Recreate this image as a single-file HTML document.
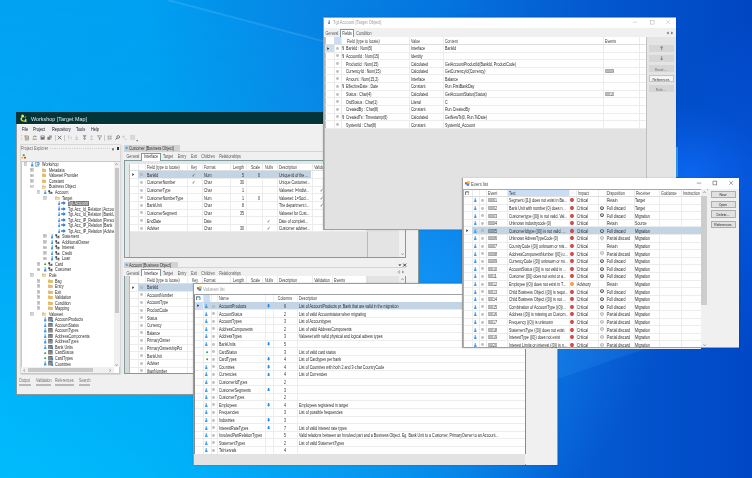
<!DOCTYPE html>
<html><head><meta charset="utf-8">
<style>
*{box-sizing:border-box;margin:0;padding:0}
html,body{width:752px;height:478px;overflow:hidden;background:#0a8aef}
body{position:relative;font-family:"Liberation Sans",sans-serif;font-size:4px;color:#222}
.a{position:absolute}
.t{white-space:nowrap}
</style></head><body>
<svg class="a" style="left:0;top:0" width="752" height="478" viewBox="0 0 752 478">
<defs>
<linearGradient id="bg" x1="0" y1="0" x2="1" y2="0">
<stop offset="0" stop-color="#00a3f3"/>
<stop offset="0.2" stop-color="#00a0f2"/>
<stop offset="0.4" stop-color="#0889e8"/>
<stop offset="0.6" stop-color="#0575e0"/>
<stop offset="0.8" stop-color="#0558d0"/>
<stop offset="1" stop-color="#0047c6"/>
</linearGradient>
<linearGradient id="bl" x1="0" y1="0" x2="0" y2="1">
<stop offset="0" stop-color="#00c4ff" stop-opacity="0"/>
<stop offset="0.45" stop-color="#00c4ff" stop-opacity="0.15"/>
<stop offset="1" stop-color="#00c4ff" stop-opacity="0.75"/>
</linearGradient>
<linearGradient id="blm" x1="0" y1="0" x2="1" y2="0">
<stop offset="0" stop-color="#fff" stop-opacity="1"/>
<stop offset="0.45" stop-color="#fff" stop-opacity="0.5"/>
<stop offset="0.75" stop-color="#fff" stop-opacity="0"/>
</linearGradient>
<mask id="m1"><rect width="752" height="478" fill="url(#blm)"/></mask>
<radialGradient id="mid" cx="430" cy="300" r="230" gradientUnits="userSpaceOnUse">
<stop offset="0" stop-color="#1aa0ff" stop-opacity="0.6"/>
<stop offset="1" stop-color="#1aa0ff" stop-opacity="0"/>
</radialGradient>
<radialGradient id="rg2" cx="690" cy="180" r="75" gradientUnits="userSpaceOnUse">
<stop offset="0" stop-color="#0c6cf6" stop-opacity="0.9"/>
<stop offset="0.5" stop-color="#0c66f0" stop-opacity="0.45"/>
<stop offset="1" stop-color="#0c60e8" stop-opacity="0"/>
</radialGradient>
<radialGradient id="rg3" cx="760" cy="190" r="170" gradientUnits="userSpaceOnUse" gradientTransform="translate(760 190) scale(0.6 1) translate(-760 -190)">
<stop offset="0" stop-color="#0a62ec" stop-opacity="0.55"/>
<stop offset="1" stop-color="#0a62ec" stop-opacity="0"/>
</radialGradient>
</defs>
<rect width="752" height="478" fill="url(#bg)"/>
<rect width="752" height="478" fill="url(#bl)" mask="url(#m1)"/>
<rect width="752" height="478" fill="url(#mid)"/>
<polygon points="168,0 752,0 752,160 323,43" fill="#003a90" fill-opacity="0.03"/>
<line x1="168" y1="0" x2="330" y2="43" stroke="#9fe0ff" stroke-opacity="0.16" stroke-width="2.2"/>
<polygon points="530,392 559,378.4 652,346.4 700,330 700,200 530,200" fill="#40b0ff" fill-opacity="0.15"/>
<rect width="752" height="478" fill="url(#rg3)"/>
<rect width="752" height="478" fill="url(#rg2)"/>
<line x1="677" y1="147" x2="677" y2="177" stroke="#60e8ff" stroke-opacity="0.8" stroke-width="1"/>
</svg>
<div class="a" style="left:16.00px;top:112.00px;width:403.00px;height:283.00px;background:#f0f0f0;border:0.7px solid #8a9898;"></div>
<div class="a" style="left:16.00px;top:112.00px;width:403.00px;height:11.80px;background:#033438;"></div>
<svg class="a" style="left:18.8px;top:113.6px" width="9" height="9" viewBox="0 0 9 9">
<circle cx="3.6" cy="1.9" r="1.5" fill="#e6e24a"/>
<path d="M2.4 3.2Q0.6 4.4 1.8 6.2Q3 7.6 5 7.4L7.6 8.2L7.2 7.2Q8.2 5.8 6.8 4.4L5.8 5.4Q6.6 6.4 5.4 6.6Q3.6 6.8 3 5.6Q2.6 4.6 3.8 3.6z" fill="#e6e24a"/>
<path d="M5 3.2L7.4 2.2L7 3.6z" fill="#e6e24a"/>
</svg>
<div class="a t" style="left:30.70px;top:115.68px;font-size:6.046511627906977px;line-height:7.26px;color:#e4e8e8;transform:scaleX(0.9);transform-origin:0 50%;">Workshop [Target Map]</div>
<div class="a" style="left:16.70px;top:123.80px;width:401.60px;height:1.00px;background:#fbfbfb;"></div>
<div class="a t" style="left:21.60px;top:127.30px;font-size:4.883720930232559px;line-height:5.86px;color:#141428;transform:scaleX(0.8);transform-origin:0 50%;">File</div>
<div class="a t" style="left:33.00px;top:127.30px;font-size:4.883720930232559px;line-height:5.86px;color:#141428;transform:scaleX(0.8);transform-origin:0 50%;">Project</div>
<div class="a t" style="left:52.00px;top:127.30px;font-size:4.883720930232559px;line-height:5.86px;color:#141428;transform:scaleX(0.8);transform-origin:0 50%;">Repository</div>
<div class="a t" style="left:76.00px;top:127.30px;font-size:4.883720930232559px;line-height:5.86px;color:#141428;transform:scaleX(0.8);transform-origin:0 50%;">Tools</div>
<div class="a t" style="left:91.40px;top:127.30px;font-size:4.883720930232559px;line-height:5.86px;color:#141428;transform:scaleX(0.8);transform-origin:0 50%;">Help</div>
<div class="a" style="left:20.60px;top:135.20px;width:0.70px;height:0.70px;background:#c8c8c8;"></div>
<div class="a" style="left:20.60px;top:137.20px;width:0.70px;height:0.70px;background:#c8c8c8;"></div>
<div class="a" style="left:20.60px;top:139.20px;width:0.70px;height:0.70px;background:#c8c8c8;"></div>
<svg class="a" style="left:24.30px;top:135.4px" width="5.2" height="5.2" viewBox="0 0 5.2 5.2"><rect x="1.2" y="1" width="3.2" height="4" fill="#e8e8e8" stroke="#606060" stroke-width="0.5"/><rect x="0.4" y="0.4" width="1.8" height="1.8" fill="#e89a30"/><path d="M2.4 2.6h1.4M2.4 3.6h1.4" stroke="#404040" stroke-width="0.5"/></svg>
<svg class="a" style="left:31.80px;top:135.4px" width="5.2" height="5.2" viewBox="0 0 5.2 5.2"><path d="M1 2.2Q2.6 0.2 4.4 1.6" stroke="#2a7ad0" stroke-width="0.9" fill="none"/><rect x="0.6" y="3" width="4" height="1.8" fill="#f0c890"/><rect x="0.6" y="4.2" width="4" height="0.7" fill="#e09030"/></svg>
<svg class="a" style="left:39.70px;top:135.4px" width="5.2" height="5.2" viewBox="0 0 5.2 5.2"><rect x="0.6" y="0.6" width="4" height="4" fill="#6a6a6a"/><rect x="1.4" y="0.9" width="2.4" height="1.4" fill="#d8d8d8"/></svg>
<svg class="a" style="left:47.30px;top:135.4px" width="5.2" height="5.2" viewBox="0 0 5.2 5.2"><rect x="0.4" y="1.8" width="3" height="3" fill="#7a7a7a"/><rect x="2" y="0.4" width="2.8" height="2.8" fill="#9a9a9a"/></svg>
<svg class="a" style="left:56.70px;top:135.4px" width="5.2" height="5.2" viewBox="0 0 5.2 5.2"><path d="M0.8 0.8L4.4 4.4M4.4 0.8L0.8 4.4" stroke="#555" stroke-width="0.8"/></svg>
<svg class="a" style="left:66.50px;top:135.4px" width="5.2" height="5.2" viewBox="0 0 5.2 5.2"><path d="M0.6 1h2.2M1.7 1v3.4M3 2.4h1.6v2" stroke="#c0c0c0" stroke-width="0.6" fill="none"/></svg>
<svg class="a" style="left:74.40px;top:135.4px" width="5.2" height="5.2" viewBox="0 0 5.2 5.2"><path d="M2.6 0.4v3M1.2 2.2l1.4 1.6 1.4-1.6M0.8 4.6h3.6" stroke="#b8b8b8" stroke-width="0.6" fill="none"/></svg>
<svg class="a" style="left:81.80px;top:135.4px" width="5.2" height="5.2" viewBox="0 0 5.2 5.2"><path d="M0.8 0.6h3.6M2.6 0.6v4M1.2 3l1.4 1.6 1.4-1.6M1.4 1.6h2.4" stroke="#707070" stroke-width="0.6" fill="none"/></svg>
<svg class="a" style="left:89.40px;top:135.4px" width="5.2" height="5.2" viewBox="0 0 5.2 5.2"><path d="M0.8 4.6h3.6M2.6 4.6v-4M1.2 2.2l1.4-1.6 1.4 1.6" stroke="#b8b8b8" stroke-width="0.6" fill="none"/></svg>
<svg class="a" style="left:96.90px;top:135.4px" width="5.2" height="5.2" viewBox="0 0 5.2 5.2"><path d="M0.4 0.8h4.4L2.6 3z M2.6 2.6v2M1.6 3.6l1 1 1-1" stroke="#707070" stroke-width="0.55" fill="none"/></svg>
<svg class="a" style="left:106.90px;top:135.4px" width="5.2" height="5.2" viewBox="0 0 5.2 5.2"><rect x="0.6" y="0.6" width="4" height="4" fill="#b0b0b0"/><path d="M0.6 2.6h4M2.6 0.6v4" stroke="#e8e8e8" stroke-width="0.5"/></svg>
<svg class="a" style="left:114.50px;top:135.4px" width="5.2" height="5.2" viewBox="0 0 5.2 5.2"><circle cx="3.2" cy="2" r="1.4" fill="none" stroke="#404040" stroke-width="0.6"/><path d="M2.2 3L0.6 4.6" stroke="#303030" stroke-width="0.8"/></svg>
<svg class="a" style="left:121.70px;top:135.4px" width="5.2" height="5.2" viewBox="0 0 5.2 5.2"><path d="M1 1.2l1.2 1.4M1 1.2v1.6M1 1.2h1.6M2.6 4.4h2" stroke="#b0b0b0" stroke-width="0.6" fill="none"/></svg>
<svg class="a" style="left:130.10px;top:135.4px" width="5.2" height="5.2" viewBox="0 0 5.2 5.2"><rect x="0.8" y="0.6" width="3.6" height="4" fill="#e0e0e0" stroke="#c0c0c0" stroke-width="0.5"/><path d="M1.4 2h2.4M1.4 3h2.4" stroke="#c8c8c8" stroke-width="0.4"/></svg>
<svg class="a" style="left:136.3px;top:140px" width="2.4" height="2" viewBox="0 0 2.4 2"><path d="M0.2 0.3h2L1.2 1.6z" fill="#333"/></svg>
<div class="a" style="left:54.60px;top:135.20px;width:0.60px;height:5.80px;background:#c8c8c8;"></div>
<div class="a" style="left:64.00px;top:135.20px;width:0.60px;height:5.80px;background:#c8c8c8;"></div>
<div class="a" style="left:104.40px;top:135.20px;width:0.60px;height:5.80px;background:#c8c8c8;"></div>
<div class="a" style="left:19.60px;top:144.40px;width:101.80px;height:231.00px;border:0.6px solid #d8d8d8;border-radius:1px"></div>
<div class="a t" style="left:21.20px;top:146.45px;font-size:4.767441860465116px;line-height:5.72px;color:#6a6a6a;transform:scaleX(0.8);transform-origin:0 50%;">Project Explorer</div>
<div class="a" style="left:50.00px;top:147.90px;width:60.00px;height:1.40px;background:repeating-linear-gradient(90deg,#d0d0d0 0 1.2px,transparent 1.2px 2.2px)"></div>
<div class="a t" style="left:112.20px;top:146.61px;font-size:4.651162790697675px;line-height:5.58px;color:#333;transform:scaleX(0.8);transform-origin:0 50%;">▾</div>
<div class="a" style="left:117.00px;top:146.60px;width:1.60px;height:3.20px;background:#333;"></div>
<svg class="a" style="left:21.4px;top:153.6px" width="5.4" height="5.4" viewBox="0 0 5.4 5.4"><rect x="1.8" y="0.3" width="1.8" height="1.8" fill="#2ea836"/><path d="M1.3 2.6L2.5 3.8 1.3 5 0.1 3.8z" fill="#e2c020"/><path d="M4 2.6L5.2 3.8 4 5 2.8 3.8z" fill="#d02828"/></svg>
<div class="a" style="left:20.70px;top:161.30px;width:99.50px;height:212.60px;background:#ffffff;border:0.6px solid #c8c8c8;"></div>
<div class="a" style="left:113.80px;top:161.80px;width:6.00px;height:205.50px;background:#f0f0f0;"></div>
<div class="a" style="left:114.60px;top:167.80px;width:4.40px;height:145.00px;background:#c8c8c8;"></div>
<svg class="a" style="left:115.3px;top:163.4px" width="3" height="2.4" viewBox="0 0 3 2.4"><path d="M0.3 2L1.5 0.6 2.7 2" fill="none" stroke="#555" stroke-width="0.5"/></svg>
<svg class="a" style="left:115.3px;top:364.0px" width="3" height="2.4" viewBox="0 0 3 2.4"><path d="M0.3 0.4L1.5 1.8 2.7 0.4" fill="none" stroke="#555" stroke-width="0.5"/></svg>
<div class="a" style="left:21.20px;top:367.30px;width:92.60px;height:5.40px;background:#f0f0f0;"></div>
<div class="a" style="left:27.70px;top:368.00px;width:65.80px;height:4.00px;background:#c8c8c8;"></div>
<svg class="a" style="left:23px;top:368.5px" width="2.4" height="3" viewBox="0 0 2.4 3"><path d="M2 0.3L0.6 1.5 2 2.7" fill="none" stroke="#555" stroke-width="0.5"/></svg>
<svg class="a" style="left:109.4px;top:368.5px" width="2.4" height="3" viewBox="0 0 2.4 3"><path d="M0.4 0.3L1.8 1.5 0.4 2.7" fill="none" stroke="#555" stroke-width="0.5"/></svg>
<div class="a" style="left:21px;top:161.8px;width:92.6px;height:205.5px;overflow:hidden">
<svg class="a" style="left:2.50px;top:0.70px" width="3.8" height="3.8" viewBox="0 0 3.8 3.8"><rect x="0.3" y="0.3" width="3.2" height="3.2" fill="#f4f4f4" stroke="#a8a8a8" stroke-width="0.5"/><path d="M1 1.9H2.8" stroke="#6a6a6a" stroke-width="0.5"/></svg>
<svg class="a" style="left:10.20px;top:0.40px" width="2.4" height="4.4" viewBox="0 0 2.4 4.4"><circle cx="1.2" cy="1" r="0.8" fill="#4a98e0"/><path d="M0 4.4V2.8Q0 1.9 1.2 1.9Q2.4 1.9 2.4 2.8V4.4z" fill="#4a98e0"/></svg>
<svg class="a" style="left:14.00px;top:0.20px" width="4.8" height="4.8" viewBox="0 0 4.8 4.8"><rect x="0.3" y="0.3" width="3.2" height="4" fill="#fff" stroke="#5a88c0" stroke-width="0.5"/><circle cx="3.4" cy="1.6" r="1.2" fill="none" stroke="#3a78c8" stroke-width="0.6"/><path d="M1 3.2h2.6" stroke="#3a78c8" stroke-width="0.5"/></svg>
<div class="a t" style="left:20.90px;top:0.51px;font-size:4.651162790697675px;line-height:5.58px;color:#2a2a2a;transform:scaleX(0.8);transform-origin:0 50%;">Workshop</div>
<svg class="a" style="left:9.10px;top:6.23px" width="3.8" height="3.8" viewBox="0 0 3.8 3.8"><rect x="0.3" y="0.3" width="3.2" height="3.2" fill="#f4f4f4" stroke="#a8a8a8" stroke-width="0.5"/><path d="M1 1.9H2.8" stroke="#6a6a6a" stroke-width="0.5"/><path d="M1.9 1V2.8" stroke="#6a6a6a" stroke-width="0.5"/></svg>
<svg class="a" style="left:20.60px;top:6.13px" width="4.8" height="4" viewBox="0 0 4.8 4"><path d="M0.2 0.5h1.6l0.5 0.5h2.3v2.8H0.2z" fill="#dcae5c"/><rect x="0.2" y="1.3" width="4.4" height="2.5" fill="#e6bc6c"/></svg>
<div class="a t" style="left:27.50px;top:6.04px;font-size:4.651162790697675px;line-height:5.58px;color:#2a2a2a;transform:scaleX(0.8);transform-origin:0 50%;">Metadata</div>
<svg class="a" style="left:9.10px;top:11.77px" width="3.8" height="3.8" viewBox="0 0 3.8 3.8"><rect x="0.3" y="0.3" width="3.2" height="3.2" fill="#f4f4f4" stroke="#a8a8a8" stroke-width="0.5"/><path d="M1 1.9H2.8" stroke="#6a6a6a" stroke-width="0.5"/><path d="M1.9 1V2.8" stroke="#6a6a6a" stroke-width="0.5"/></svg>
<svg class="a" style="left:20.60px;top:11.67px" width="4.8" height="4" viewBox="0 0 4.8 4"><path d="M0.2 0.5h1.6l0.5 0.5h2.3v2.8H0.2z" fill="#dcae5c"/><rect x="0.2" y="1.3" width="4.4" height="2.5" fill="#e6bc6c"/></svg>
<div class="a t" style="left:27.50px;top:11.58px;font-size:4.651162790697675px;line-height:5.58px;color:#2a2a2a;transform:scaleX(0.8);transform-origin:0 50%;">Valueset Provider</div>
<svg class="a" style="left:9.10px;top:17.30px" width="3.8" height="3.8" viewBox="0 0 3.8 3.8"><rect x="0.3" y="0.3" width="3.2" height="3.2" fill="#f4f4f4" stroke="#a8a8a8" stroke-width="0.5"/><path d="M1 1.9H2.8" stroke="#6a6a6a" stroke-width="0.5"/><path d="M1.9 1V2.8" stroke="#6a6a6a" stroke-width="0.5"/></svg>
<svg class="a" style="left:20.60px;top:17.20px" width="4.8" height="4" viewBox="0 0 4.8 4"><path d="M0.2 0.5h1.6l0.5 0.5h2.3v2.8H0.2z" fill="#dcae5c"/><rect x="0.2" y="1.3" width="4.4" height="2.5" fill="#e6bc6c"/></svg>
<div class="a t" style="left:27.50px;top:17.11px;font-size:4.651162790697675px;line-height:5.58px;color:#2a2a2a;transform:scaleX(0.8);transform-origin:0 50%;">Constant</div>
<svg class="a" style="left:9.10px;top:22.84px" width="3.8" height="3.8" viewBox="0 0 3.8 3.8"><rect x="0.3" y="0.3" width="3.2" height="3.2" fill="#f4f4f4" stroke="#a8a8a8" stroke-width="0.5"/><path d="M1 1.9H2.8" stroke="#6a6a6a" stroke-width="0.5"/></svg>
<svg class="a" style="left:20.60px;top:22.74px" width="4.8" height="4" viewBox="0 0 4.8 4"><path d="M0.2 0.5h1.6l0.5 0.5h2.3v2.8H0.2z" fill="#d8aa60"/><path d="M0.2 3.8l0.8-2.2h3.8l-0.8 2.2z" fill="#f4dca8"/></svg>
<div class="a t" style="left:27.50px;top:22.65px;font-size:4.651162790697675px;line-height:5.58px;color:#2a2a2a;transform:scaleX(0.8);transform-origin:0 50%;">Business Object</div>
<svg class="a" style="left:15.70px;top:28.38px" width="3.8" height="3.8" viewBox="0 0 3.8 3.8"><rect x="0.3" y="0.3" width="3.2" height="3.2" fill="#f4f4f4" stroke="#a8a8a8" stroke-width="0.5"/><path d="M1 1.9H2.8" stroke="#6a6a6a" stroke-width="0.5"/></svg>
<svg class="a" style="left:23.40px;top:28.08px" width="2.4" height="4.4" viewBox="0 0 2.4 4.4"><circle cx="1.2" cy="1" r="0.8" fill="#4a98e0"/><path d="M0 4.4V2.8Q0 1.9 1.2 1.9Q2.4 1.9 2.4 2.8V4.4z" fill="#4a98e0"/></svg>
<svg class="a" style="left:27.20px;top:28.08px" width="4.8" height="4.4" viewBox="0 0 4.8 4.4"><rect x="0.3" y="0.3" width="1.8" height="1.6" fill="#333"/><path d="M1.2 1.9V3.6H2.6M1.2 2.6H2.6" stroke="#333" stroke-width="0.5" fill="none"/><rect x="2.6" y="1.8" width="1.8" height="1.2" fill="#555"/><rect x="2.6" y="3.2" width="1.8" height="1.1" fill="#555"/></svg>
<div class="a t" style="left:34.10px;top:28.18px;font-size:4.651162790697675px;line-height:5.58px;color:#2a2a2a;transform:scaleX(0.8);transform-origin:0 50%;">Account</div>
<svg class="a" style="left:22.30px;top:33.91px" width="3.8" height="3.8" viewBox="0 0 3.8 3.8"><rect x="0.3" y="0.3" width="3.2" height="3.2" fill="#f4f4f4" stroke="#a8a8a8" stroke-width="0.5"/><path d="M1 1.9H2.8" stroke="#6a6a6a" stroke-width="0.5"/></svg>
<svg class="a" style="left:33.80px;top:33.81px" width="4.8" height="4" viewBox="0 0 4.8 4"><path d="M0.2 0.5h1.6l0.5 0.5h2.3v2.8H0.2z" fill="#d8aa60"/><path d="M0.2 3.8l0.8-2.2h3.8l-0.8 2.2z" fill="#f4dca8"/></svg>
<div class="a t" style="left:40.70px;top:33.72px;font-size:4.651162790697675px;line-height:5.58px;color:#2a2a2a;transform:scaleX(0.8);transform-origin:0 50%;">Target</div>
<svg class="a" style="left:36.60px;top:39.15px" width="2.4" height="4.4" viewBox="0 0 2.4 4.4"><circle cx="1.2" cy="1" r="0.8" fill="#4a98e0"/><path d="M0 4.4V2.8Q0 1.9 1.2 1.9Q2.4 1.9 2.4 2.8V4.4z" fill="#4a98e0"/></svg>
<svg class="a" style="left:40.40px;top:39.34px" width="5" height="4" viewBox="0 0 5 4"><path d="M0.2 1.3h2.2V0.1L4.8 2 2.4 3.9V2.7H0.2z" fill="#2a78d8"/></svg>
<div class="a" style="left:46.70px;top:38.94px;width:21.20px;height:4.90px;background:#777777;"></div>
<div class="a t" style="left:47.30px;top:39.25px;font-size:4.651162790697675px;line-height:5.58px;color:#f0f0f0;transform:scaleX(0.8);transform-origin:0 50%;">Tgt.Account</div>
<svg class="a" style="left:36.60px;top:44.68px" width="2.4" height="4.4" viewBox="0 0 2.4 4.4"><circle cx="1.2" cy="1" r="0.8" fill="#4a98e0"/><path d="M0 4.4V2.8Q0 1.9 1.2 1.9Q2.4 1.9 2.4 2.8V4.4z" fill="#4a98e0"/></svg>
<svg class="a" style="left:40.40px;top:44.88px" width="5" height="4" viewBox="0 0 5 4"><path d="M0.2 1.3h2.2V0.1L4.8 2 2.4 3.9V2.7H0.2z" fill="#2a78d8"/></svg>
<div class="a t" style="left:47.30px;top:44.79px;font-size:4.651162790697675px;line-height:5.58px;color:#2a2a2a;transform:scaleX(0.8);transform-origin:0 50%;">Tgt.Acc_Id_Relation [Account</div>
<svg class="a" style="left:36.60px;top:50.22px" width="2.4" height="4.4" viewBox="0 0 2.4 4.4"><circle cx="1.2" cy="1" r="0.8" fill="#4a98e0"/><path d="M0 4.4V2.8Q0 1.9 1.2 1.9Q2.4 1.9 2.4 2.8V4.4z" fill="#4a98e0"/></svg>
<svg class="a" style="left:40.40px;top:50.41px" width="5" height="4" viewBox="0 0 5 4"><path d="M0.2 1.3h2.2V0.1L4.8 2 2.4 3.9V2.7H0.2z" fill="#2a78d8"/></svg>
<div class="a t" style="left:47.30px;top:50.32px;font-size:4.651162790697675px;line-height:5.58px;color:#2a2a2a;transform:scaleX(0.8);transform-origin:0 50%;">Tgt.Acc_Id_Relation [BankUnit</div>
<svg class="a" style="left:36.60px;top:55.75px" width="2.4" height="4.4" viewBox="0 0 2.4 4.4"><circle cx="1.2" cy="1" r="0.8" fill="#4a98e0"/><path d="M0 4.4V2.8Q0 1.9 1.2 1.9Q2.4 1.9 2.4 2.8V4.4z" fill="#4a98e0"/></svg>
<svg class="a" style="left:40.40px;top:55.95px" width="5" height="4" viewBox="0 0 5 4"><path d="M0.2 1.3h2.2V0.1L4.8 2 2.4 3.9V2.7H0.2z" fill="#2a78d8"/></svg>
<div class="a t" style="left:47.30px;top:55.86px;font-size:4.651162790697675px;line-height:5.58px;color:#2a2a2a;transform:scaleX(0.8);transform-origin:0 50%;">Tgt.Acc_IP_Relation [Person</div>
<svg class="a" style="left:36.60px;top:61.29px" width="2.4" height="4.4" viewBox="0 0 2.4 4.4"><circle cx="1.2" cy="1" r="0.8" fill="#4a98e0"/><path d="M0 4.4V2.8Q0 1.9 1.2 1.9Q2.4 1.9 2.4 2.8V4.4z" fill="#4a98e0"/></svg>
<svg class="a" style="left:40.40px;top:61.49px" width="5" height="4" viewBox="0 0 5 4"><path d="M0.2 1.3h2.2V0.1L4.8 2 2.4 3.9V2.7H0.2z" fill="#2a78d8"/></svg>
<div class="a t" style="left:47.30px;top:61.39px;font-size:4.651162790697675px;line-height:5.58px;color:#2a2a2a;transform:scaleX(0.8);transform-origin:0 50%;">Tgt.Acc_IP_Relation [Bank</div>
<svg class="a" style="left:36.60px;top:66.82px" width="2.4" height="4.4" viewBox="0 0 2.4 4.4"><circle cx="1.2" cy="1" r="0.8" fill="#4a98e0"/><path d="M0 4.4V2.8Q0 1.9 1.2 1.9Q2.4 1.9 2.4 2.8V4.4z" fill="#4a98e0"/></svg>
<svg class="a" style="left:40.40px;top:67.02px" width="5" height="4" viewBox="0 0 5 4"><path d="M0.2 1.3h2.2V0.1L4.8 2 2.4 3.9V2.7H0.2z" fill="#2a78d8"/></svg>
<div class="a t" style="left:47.30px;top:66.93px;font-size:4.651162790697675px;line-height:5.58px;color:#2a2a2a;transform:scaleX(0.8);transform-origin:0 50%;">Tgt.Acc_IP_Relation [Adviser</div>
<svg class="a" style="left:22.30px;top:72.66px" width="3.8" height="3.8" viewBox="0 0 3.8 3.8"><rect x="0.3" y="0.3" width="3.2" height="3.2" fill="#f4f4f4" stroke="#a8a8a8" stroke-width="0.5"/><path d="M1 1.9H2.8" stroke="#6a6a6a" stroke-width="0.5"/><path d="M1.9 1V2.8" stroke="#6a6a6a" stroke-width="0.5"/></svg>
<svg class="a" style="left:30.00px;top:72.36px" width="2.4" height="4.4" viewBox="0 0 2.4 4.4"><circle cx="1.2" cy="1" r="0.8" fill="#4a98e0"/><path d="M0 4.4V2.8Q0 1.9 1.2 1.9Q2.4 1.9 2.4 2.8V4.4z" fill="#4a98e0"/></svg>
<svg class="a" style="left:33.80px;top:72.36px" width="4.8" height="4.4" viewBox="0 0 4.8 4.4"><rect x="0.3" y="0.3" width="1.8" height="1.6" fill="#333"/><path d="M1.2 1.9V3.6H2.6M1.2 2.6H2.6" stroke="#333" stroke-width="0.5" fill="none"/><rect x="2.6" y="1.8" width="1.8" height="1.2" fill="#555"/><rect x="2.6" y="3.2" width="1.8" height="1.1" fill="#555"/></svg>
<div class="a t" style="left:40.70px;top:72.46px;font-size:4.651162790697675px;line-height:5.58px;color:#2a2a2a;transform:scaleX(0.8);transform-origin:0 50%;">Statement</div>
<svg class="a" style="left:22.30px;top:78.19px" width="3.8" height="3.8" viewBox="0 0 3.8 3.8"><rect x="0.3" y="0.3" width="3.2" height="3.2" fill="#f4f4f4" stroke="#a8a8a8" stroke-width="0.5"/><path d="M1 1.9H2.8" stroke="#6a6a6a" stroke-width="0.5"/><path d="M1.9 1V2.8" stroke="#6a6a6a" stroke-width="0.5"/></svg>
<svg class="a" style="left:30.00px;top:77.89px" width="2.4" height="4.4" viewBox="0 0 2.4 4.4"><circle cx="1.2" cy="1" r="0.8" fill="#4a98e0"/><path d="M0 4.4V2.8Q0 1.9 1.2 1.9Q2.4 1.9 2.4 2.8V4.4z" fill="#4a98e0"/></svg>
<svg class="a" style="left:33.80px;top:77.89px" width="4.8" height="4.4" viewBox="0 0 4.8 4.4"><rect x="0.3" y="0.3" width="1.8" height="1.6" fill="#333"/><path d="M1.2 1.9V3.6H2.6M1.2 2.6H2.6" stroke="#333" stroke-width="0.5" fill="none"/><rect x="2.6" y="1.8" width="1.8" height="1.2" fill="#555"/><rect x="2.6" y="3.2" width="1.8" height="1.1" fill="#555"/></svg>
<div class="a t" style="left:40.70px;top:78.00px;font-size:4.651162790697675px;line-height:5.58px;color:#2a2a2a;transform:scaleX(0.8);transform-origin:0 50%;">AdditionalOwner</div>
<svg class="a" style="left:22.30px;top:83.72px" width="3.8" height="3.8" viewBox="0 0 3.8 3.8"><rect x="0.3" y="0.3" width="3.2" height="3.2" fill="#f4f4f4" stroke="#a8a8a8" stroke-width="0.5"/><path d="M1 1.9H2.8" stroke="#6a6a6a" stroke-width="0.5"/><path d="M1.9 1V2.8" stroke="#6a6a6a" stroke-width="0.5"/></svg>
<svg class="a" style="left:30.00px;top:83.43px" width="2.4" height="4.4" viewBox="0 0 2.4 4.4"><circle cx="1.2" cy="1" r="0.8" fill="#4a98e0"/><path d="M0 4.4V2.8Q0 1.9 1.2 1.9Q2.4 1.9 2.4 2.8V4.4z" fill="#4a98e0"/></svg>
<svg class="a" style="left:33.80px;top:83.43px" width="4.8" height="4.4" viewBox="0 0 4.8 4.4"><rect x="0.3" y="0.3" width="1.8" height="1.6" fill="#333"/><path d="M1.2 1.9V3.6H2.6M1.2 2.6H2.6" stroke="#333" stroke-width="0.5" fill="none"/><rect x="2.6" y="1.8" width="1.8" height="1.2" fill="#555"/><rect x="2.6" y="3.2" width="1.8" height="1.1" fill="#555"/></svg>
<div class="a t" style="left:40.70px;top:83.53px;font-size:4.651162790697675px;line-height:5.58px;color:#2a2a2a;transform:scaleX(0.8);transform-origin:0 50%;">Interest</div>
<svg class="a" style="left:22.30px;top:89.26px" width="3.8" height="3.8" viewBox="0 0 3.8 3.8"><rect x="0.3" y="0.3" width="3.2" height="3.2" fill="#f4f4f4" stroke="#a8a8a8" stroke-width="0.5"/><path d="M1 1.9H2.8" stroke="#6a6a6a" stroke-width="0.5"/><path d="M1.9 1V2.8" stroke="#6a6a6a" stroke-width="0.5"/></svg>
<svg class="a" style="left:30.00px;top:88.96px" width="2.4" height="4.4" viewBox="0 0 2.4 4.4"><circle cx="1.2" cy="1" r="0.8" fill="#4a98e0"/><path d="M0 4.4V2.8Q0 1.9 1.2 1.9Q2.4 1.9 2.4 2.8V4.4z" fill="#4a98e0"/></svg>
<svg class="a" style="left:33.80px;top:88.96px" width="4.8" height="4.4" viewBox="0 0 4.8 4.4"><rect x="0.3" y="0.3" width="1.8" height="1.6" fill="#333"/><path d="M1.2 1.9V3.6H2.6M1.2 2.6H2.6" stroke="#333" stroke-width="0.5" fill="none"/><rect x="2.6" y="1.8" width="1.8" height="1.2" fill="#555"/><rect x="2.6" y="3.2" width="1.8" height="1.1" fill="#555"/></svg>
<div class="a t" style="left:40.70px;top:89.07px;font-size:4.651162790697675px;line-height:5.58px;color:#2a2a2a;transform:scaleX(0.8);transform-origin:0 50%;">Credit</div>
<svg class="a" style="left:22.30px;top:94.80px" width="3.8" height="3.8" viewBox="0 0 3.8 3.8"><rect x="0.3" y="0.3" width="3.2" height="3.2" fill="#f4f4f4" stroke="#a8a8a8" stroke-width="0.5"/><path d="M1 1.9H2.8" stroke="#6a6a6a" stroke-width="0.5"/><path d="M1.9 1V2.8" stroke="#6a6a6a" stroke-width="0.5"/></svg>
<svg class="a" style="left:30.00px;top:94.50px" width="2.4" height="4.4" viewBox="0 0 2.4 4.4"><circle cx="1.2" cy="1" r="0.8" fill="#4a98e0"/><path d="M0 4.4V2.8Q0 1.9 1.2 1.9Q2.4 1.9 2.4 2.8V4.4z" fill="#4a98e0"/></svg>
<svg class="a" style="left:33.80px;top:94.50px" width="4.8" height="4.4" viewBox="0 0 4.8 4.4"><rect x="0.3" y="0.3" width="1.8" height="1.6" fill="#333"/><path d="M1.2 1.9V3.6H2.6M1.2 2.6H2.6" stroke="#333" stroke-width="0.5" fill="none"/><rect x="2.6" y="1.8" width="1.8" height="1.2" fill="#555"/><rect x="2.6" y="3.2" width="1.8" height="1.1" fill="#555"/></svg>
<div class="a t" style="left:40.70px;top:94.60px;font-size:4.651162790697675px;line-height:5.58px;color:#2a2a2a;transform:scaleX(0.8);transform-origin:0 50%;">Loan</div>
<svg class="a" style="left:15.70px;top:100.33px" width="3.8" height="3.8" viewBox="0 0 3.8 3.8"><rect x="0.3" y="0.3" width="3.2" height="3.2" fill="#f4f4f4" stroke="#a8a8a8" stroke-width="0.5"/><path d="M1 1.9H2.8" stroke="#6a6a6a" stroke-width="0.5"/><path d="M1.9 1V2.8" stroke="#6a6a6a" stroke-width="0.5"/></svg>
<svg class="a" style="left:23.40px;top:101.23px" width="2.4" height="2.4" viewBox="0 0 2.4 2.4"><circle cx="1.2" cy="1.2" r="1.05" fill="#2fa443"/></svg>
<svg class="a" style="left:27.20px;top:100.03px" width="4.8" height="4.4" viewBox="0 0 4.8 4.4"><rect x="0.3" y="0.3" width="1.8" height="1.6" fill="#333"/><path d="M1.2 1.9V3.6H2.6M1.2 2.6H2.6" stroke="#333" stroke-width="0.5" fill="none"/><rect x="2.6" y="1.8" width="1.8" height="1.2" fill="#555"/><rect x="2.6" y="3.2" width="1.8" height="1.1" fill="#555"/></svg>
<div class="a t" style="left:34.10px;top:100.14px;font-size:4.651162790697675px;line-height:5.58px;color:#2a2a2a;transform:scaleX(0.8);transform-origin:0 50%;">Card</div>
<svg class="a" style="left:15.70px;top:105.87px" width="3.8" height="3.8" viewBox="0 0 3.8 3.8"><rect x="0.3" y="0.3" width="3.2" height="3.2" fill="#f4f4f4" stroke="#a8a8a8" stroke-width="0.5"/><path d="M1 1.9H2.8" stroke="#6a6a6a" stroke-width="0.5"/><path d="M1.9 1V2.8" stroke="#6a6a6a" stroke-width="0.5"/></svg>
<svg class="a" style="left:23.40px;top:105.56px" width="2.4" height="4.4" viewBox="0 0 2.4 4.4"><circle cx="1.2" cy="1" r="0.8" fill="#4a98e0"/><path d="M0 4.4V2.8Q0 1.9 1.2 1.9Q2.4 1.9 2.4 2.8V4.4z" fill="#4a98e0"/></svg>
<svg class="a" style="left:27.20px;top:105.56px" width="4.8" height="4.4" viewBox="0 0 4.8 4.4"><rect x="0.3" y="0.3" width="1.8" height="1.6" fill="#333"/><path d="M1.2 1.9V3.6H2.6M1.2 2.6H2.6" stroke="#333" stroke-width="0.5" fill="none"/><rect x="2.6" y="1.8" width="1.8" height="1.2" fill="#555"/><rect x="2.6" y="3.2" width="1.8" height="1.1" fill="#555"/></svg>
<div class="a t" style="left:34.10px;top:105.67px;font-size:4.651162790697675px;line-height:5.58px;color:#2a2a2a;transform:scaleX(0.8);transform-origin:0 50%;">Customer</div>
<svg class="a" style="left:9.10px;top:111.40px" width="3.8" height="3.8" viewBox="0 0 3.8 3.8"><rect x="0.3" y="0.3" width="3.2" height="3.2" fill="#f4f4f4" stroke="#a8a8a8" stroke-width="0.5"/><path d="M1 1.9H2.8" stroke="#6a6a6a" stroke-width="0.5"/></svg>
<svg class="a" style="left:20.60px;top:111.30px" width="4.8" height="4" viewBox="0 0 4.8 4"><path d="M0.2 0.5h1.6l0.5 0.5h2.3v2.8H0.2z" fill="#d8aa60"/><path d="M0.2 3.8l0.8-2.2h3.8l-0.8 2.2z" fill="#f4dca8"/></svg>
<div class="a t" style="left:27.50px;top:111.21px;font-size:4.651162790697675px;line-height:5.58px;color:#2a2a2a;transform:scaleX(0.8);transform-origin:0 50%;">Rule</div>
<svg class="a" style="left:15.70px;top:116.94px" width="3.8" height="3.8" viewBox="0 0 3.8 3.8"><rect x="0.3" y="0.3" width="3.2" height="3.2" fill="#f4f4f4" stroke="#a8a8a8" stroke-width="0.5"/><path d="M1 1.9H2.8" stroke="#6a6a6a" stroke-width="0.5"/><path d="M1.9 1V2.8" stroke="#6a6a6a" stroke-width="0.5"/></svg>
<svg class="a" style="left:27.20px;top:116.83px" width="4.8" height="4" viewBox="0 0 4.8 4"><path d="M0.2 0.5h1.6l0.5 0.5h2.3v2.8H0.2z" fill="#dcae5c"/><rect x="0.2" y="1.3" width="4.4" height="2.5" fill="#e6bc6c"/></svg>
<div class="a t" style="left:34.10px;top:116.74px;font-size:4.651162790697675px;line-height:5.58px;color:#2a2a2a;transform:scaleX(0.8);transform-origin:0 50%;">Bag</div>
<svg class="a" style="left:15.70px;top:122.47px" width="3.8" height="3.8" viewBox="0 0 3.8 3.8"><rect x="0.3" y="0.3" width="3.2" height="3.2" fill="#f4f4f4" stroke="#a8a8a8" stroke-width="0.5"/><path d="M1 1.9H2.8" stroke="#6a6a6a" stroke-width="0.5"/><path d="M1.9 1V2.8" stroke="#6a6a6a" stroke-width="0.5"/></svg>
<svg class="a" style="left:27.20px;top:122.37px" width="4.8" height="4" viewBox="0 0 4.8 4"><path d="M0.2 0.5h1.6l0.5 0.5h2.3v2.8H0.2z" fill="#dcae5c"/><rect x="0.2" y="1.3" width="4.4" height="2.5" fill="#e6bc6c"/></svg>
<div class="a t" style="left:34.10px;top:122.28px;font-size:4.651162790697675px;line-height:5.58px;color:#2a2a2a;transform:scaleX(0.8);transform-origin:0 50%;">Entry</div>
<svg class="a" style="left:15.70px;top:128.01px" width="3.8" height="3.8" viewBox="0 0 3.8 3.8"><rect x="0.3" y="0.3" width="3.2" height="3.2" fill="#f4f4f4" stroke="#a8a8a8" stroke-width="0.5"/><path d="M1 1.9H2.8" stroke="#6a6a6a" stroke-width="0.5"/><path d="M1.9 1V2.8" stroke="#6a6a6a" stroke-width="0.5"/></svg>
<svg class="a" style="left:27.20px;top:127.91px" width="4.8" height="4" viewBox="0 0 4.8 4"><path d="M0.2 0.5h1.6l0.5 0.5h2.3v2.8H0.2z" fill="#dcae5c"/><rect x="0.2" y="1.3" width="4.4" height="2.5" fill="#e6bc6c"/></svg>
<div class="a t" style="left:34.10px;top:127.81px;font-size:4.651162790697675px;line-height:5.58px;color:#2a2a2a;transform:scaleX(0.8);transform-origin:0 50%;">Exit</div>
<svg class="a" style="left:15.70px;top:133.54px" width="3.8" height="3.8" viewBox="0 0 3.8 3.8"><rect x="0.3" y="0.3" width="3.2" height="3.2" fill="#f4f4f4" stroke="#a8a8a8" stroke-width="0.5"/><path d="M1 1.9H2.8" stroke="#6a6a6a" stroke-width="0.5"/><path d="M1.9 1V2.8" stroke="#6a6a6a" stroke-width="0.5"/></svg>
<svg class="a" style="left:27.20px;top:133.44px" width="4.8" height="4" viewBox="0 0 4.8 4"><path d="M0.2 0.5h1.6l0.5 0.5h2.3v2.8H0.2z" fill="#dcae5c"/><rect x="0.2" y="1.3" width="4.4" height="2.5" fill="#e6bc6c"/></svg>
<div class="a t" style="left:34.10px;top:133.35px;font-size:4.651162790697675px;line-height:5.58px;color:#2a2a2a;transform:scaleX(0.8);transform-origin:0 50%;">Validation</div>
<svg class="a" style="left:15.70px;top:139.07px" width="3.8" height="3.8" viewBox="0 0 3.8 3.8"><rect x="0.3" y="0.3" width="3.2" height="3.2" fill="#f4f4f4" stroke="#a8a8a8" stroke-width="0.5"/><path d="M1 1.9H2.8" stroke="#6a6a6a" stroke-width="0.5"/><path d="M1.9 1V2.8" stroke="#6a6a6a" stroke-width="0.5"/></svg>
<svg class="a" style="left:27.20px;top:138.97px" width="4.8" height="4" viewBox="0 0 4.8 4"><path d="M0.2 0.5h1.6l0.5 0.5h2.3v2.8H0.2z" fill="#dcae5c"/><rect x="0.2" y="1.3" width="4.4" height="2.5" fill="#e6bc6c"/></svg>
<div class="a t" style="left:34.10px;top:138.88px;font-size:4.651162790697675px;line-height:5.58px;color:#2a2a2a;transform:scaleX(0.8);transform-origin:0 50%;">Condition</div>
<svg class="a" style="left:15.70px;top:144.61px" width="3.8" height="3.8" viewBox="0 0 3.8 3.8"><rect x="0.3" y="0.3" width="3.2" height="3.2" fill="#f4f4f4" stroke="#a8a8a8" stroke-width="0.5"/><path d="M1 1.9H2.8" stroke="#6a6a6a" stroke-width="0.5"/><path d="M1.9 1V2.8" stroke="#6a6a6a" stroke-width="0.5"/></svg>
<svg class="a" style="left:27.20px;top:144.51px" width="4.8" height="4" viewBox="0 0 4.8 4"><path d="M0.2 0.5h1.6l0.5 0.5h2.3v2.8H0.2z" fill="#dcae5c"/><rect x="0.2" y="1.3" width="4.4" height="2.5" fill="#e6bc6c"/></svg>
<div class="a t" style="left:34.10px;top:144.42px;font-size:4.651162790697675px;line-height:5.58px;color:#2a2a2a;transform:scaleX(0.8);transform-origin:0 50%;">Mapping</div>
<svg class="a" style="left:9.10px;top:150.15px" width="3.8" height="3.8" viewBox="0 0 3.8 3.8"><rect x="0.3" y="0.3" width="3.2" height="3.2" fill="#f4f4f4" stroke="#a8a8a8" stroke-width="0.5"/><path d="M1 1.9H2.8" stroke="#6a6a6a" stroke-width="0.5"/></svg>
<svg class="a" style="left:20.60px;top:150.05px" width="4.8" height="4" viewBox="0 0 4.8 4"><path d="M0.2 0.5h1.6l0.5 0.5h2.3v2.8H0.2z" fill="#d8aa60"/><path d="M0.2 3.8l0.8-2.2h3.8l-0.8 2.2z" fill="#f4dca8"/></svg>
<div class="a t" style="left:27.50px;top:149.95px;font-size:4.651162790697675px;line-height:5.58px;color:#2a2a2a;transform:scaleX(0.8);transform-origin:0 50%;">Valueset</div>
<svg class="a" style="left:23.40px;top:155.38px" width="2.4" height="4.4" viewBox="0 0 2.4 4.4"><circle cx="1.2" cy="1" r="0.8" fill="#4a98e0"/><path d="M0 4.4V2.8Q0 1.9 1.2 1.9Q2.4 1.9 2.4 2.8V4.4z" fill="#4a98e0"/></svg>
<svg class="a" style="left:27.20px;top:155.38px" width="5" height="4.6" viewBox="0 0 5 4.6"><rect x="0.2" y="0.2" width="4.4" height="4.2" fill="#4a4a4a"/><path d="M0.2 1.5h4.4M0.2 2.6h4.4M0.2 3.5h4.4M1.6 1.5v2.9M3.1 1.5v2.9" stroke="#d8d8d8" stroke-width="0.35"/></svg>
<svg class="a" style="left:30.00px;top:157.78px" width="2.6" height="2.4" viewBox="0 0 2.6 2.4"><path d="M0.6 0h1.4v1.1h0.6L1.3 2.4 0 1.1h0.6z" fill="#1e88e5"/></svg>
<div class="a t" style="left:34.10px;top:155.49px;font-size:4.651162790697675px;line-height:5.58px;color:#2a2a2a;transform:scaleX(0.8);transform-origin:0 50%;">AccountProducts</div>
<svg class="a" style="left:23.40px;top:160.92px" width="2.4" height="4.4" viewBox="0 0 2.4 4.4"><circle cx="1.2" cy="1" r="0.8" fill="#4a98e0"/><path d="M0 4.4V2.8Q0 1.9 1.2 1.9Q2.4 1.9 2.4 2.8V4.4z" fill="#4a98e0"/></svg>
<svg class="a" style="left:27.20px;top:160.92px" width="5" height="4.6" viewBox="0 0 5 4.6"><rect x="0.2" y="0.2" width="4.4" height="4.2" fill="#4a4a4a"/><path d="M0.2 1.5h4.4M0.2 2.6h4.4M0.2 3.5h4.4M1.6 1.5v2.9M3.1 1.5v2.9" stroke="#d8d8d8" stroke-width="0.35"/></svg>
<div class="a t" style="left:34.10px;top:161.02px;font-size:4.651162790697675px;line-height:5.58px;color:#2a2a2a;transform:scaleX(0.8);transform-origin:0 50%;">AccountStatus</div>
<svg class="a" style="left:23.40px;top:166.45px" width="2.4" height="4.4" viewBox="0 0 2.4 4.4"><circle cx="1.2" cy="1" r="0.8" fill="#4a98e0"/><path d="M0 4.4V2.8Q0 1.9 1.2 1.9Q2.4 1.9 2.4 2.8V4.4z" fill="#4a98e0"/></svg>
<svg class="a" style="left:27.20px;top:166.45px" width="5" height="4.6" viewBox="0 0 5 4.6"><rect x="0.2" y="0.2" width="4.4" height="4.2" fill="#4a4a4a"/><path d="M0.2 1.5h4.4M0.2 2.6h4.4M0.2 3.5h4.4M1.6 1.5v2.9M3.1 1.5v2.9" stroke="#d8d8d8" stroke-width="0.35"/></svg>
<div class="a t" style="left:34.10px;top:166.56px;font-size:4.651162790697675px;line-height:5.58px;color:#2a2a2a;transform:scaleX(0.8);transform-origin:0 50%;">AccountTypes</div>
<svg class="a" style="left:23.40px;top:171.99px" width="2.4" height="4.4" viewBox="0 0 2.4 4.4"><circle cx="1.2" cy="1" r="0.8" fill="#4a98e0"/><path d="M0 4.4V2.8Q0 1.9 1.2 1.9Q2.4 1.9 2.4 2.8V4.4z" fill="#4a98e0"/></svg>
<svg class="a" style="left:27.20px;top:171.99px" width="5" height="4.6" viewBox="0 0 5 4.6"><rect x="0.2" y="0.2" width="4.4" height="4.2" fill="#4a4a4a"/><path d="M0.2 1.5h4.4M0.2 2.6h4.4M0.2 3.5h4.4M1.6 1.5v2.9M3.1 1.5v2.9" stroke="#d8d8d8" stroke-width="0.35"/></svg>
<div class="a t" style="left:34.10px;top:172.09px;font-size:4.651162790697675px;line-height:5.58px;color:#2a2a2a;transform:scaleX(0.8);transform-origin:0 50%;">AddressComponents</div>
<svg class="a" style="left:23.40px;top:177.52px" width="2.4" height="4.4" viewBox="0 0 2.4 4.4"><circle cx="1.2" cy="1" r="0.8" fill="#4a98e0"/><path d="M0 4.4V2.8Q0 1.9 1.2 1.9Q2.4 1.9 2.4 2.8V4.4z" fill="#4a98e0"/></svg>
<svg class="a" style="left:27.20px;top:177.52px" width="5" height="4.6" viewBox="0 0 5 4.6"><rect x="0.2" y="0.2" width="4.4" height="4.2" fill="#4a4a4a"/><path d="M0.2 1.5h4.4M0.2 2.6h4.4M0.2 3.5h4.4M1.6 1.5v2.9M3.1 1.5v2.9" stroke="#d8d8d8" stroke-width="0.35"/></svg>
<div class="a t" style="left:34.10px;top:177.63px;font-size:4.651162790697675px;line-height:5.58px;color:#2a2a2a;transform:scaleX(0.8);transform-origin:0 50%;">AddressTypes</div>
<svg class="a" style="left:23.40px;top:183.06px" width="2.4" height="4.4" viewBox="0 0 2.4 4.4"><circle cx="1.2" cy="1" r="0.8" fill="#4a98e0"/><path d="M0 4.4V2.8Q0 1.9 1.2 1.9Q2.4 1.9 2.4 2.8V4.4z" fill="#4a98e0"/></svg>
<svg class="a" style="left:27.20px;top:183.06px" width="5" height="4.6" viewBox="0 0 5 4.6"><rect x="0.2" y="0.2" width="4.4" height="4.2" fill="#4a4a4a"/><path d="M0.2 1.5h4.4M0.2 2.6h4.4M0.2 3.5h4.4M1.6 1.5v2.9M3.1 1.5v2.9" stroke="#d8d8d8" stroke-width="0.35"/></svg>
<svg class="a" style="left:30.00px;top:185.45px" width="2.6" height="2.4" viewBox="0 0 2.6 2.4"><path d="M0.6 0h1.4v1.1h0.6L1.3 2.4 0 1.1h0.6z" fill="#1e88e5"/></svg>
<div class="a t" style="left:34.10px;top:183.16px;font-size:4.651162790697675px;line-height:5.58px;color:#2a2a2a;transform:scaleX(0.8);transform-origin:0 50%;">Bank Units</div>
<svg class="a" style="left:23.40px;top:189.79px" width="2.4" height="2.4" viewBox="0 0 2.4 2.4"><circle cx="1.2" cy="1.2" r="1.05" fill="#2fa443"/></svg>
<svg class="a" style="left:27.20px;top:188.59px" width="5" height="4.6" viewBox="0 0 5 4.6"><rect x="0.2" y="0.2" width="4.4" height="4.2" fill="#4a4a4a"/><path d="M0.2 1.5h4.4M0.2 2.6h4.4M0.2 3.5h4.4M1.6 1.5v2.9M3.1 1.5v2.9" stroke="#d8d8d8" stroke-width="0.35"/></svg>
<div class="a t" style="left:34.10px;top:188.70px;font-size:4.651162790697675px;line-height:5.58px;color:#2a2a2a;transform:scaleX(0.8);transform-origin:0 50%;">CardStatus</div>
<svg class="a" style="left:23.40px;top:195.32px" width="2.4" height="2.4" viewBox="0 0 2.4 2.4"><circle cx="1.2" cy="1.2" r="1.05" fill="#2fa443"/></svg>
<svg class="a" style="left:27.20px;top:194.12px" width="5" height="4.6" viewBox="0 0 5 4.6"><rect x="0.2" y="0.2" width="4.4" height="4.2" fill="#4a4a4a"/><path d="M0.2 1.5h4.4M0.2 2.6h4.4M0.2 3.5h4.4M1.6 1.5v2.9M3.1 1.5v2.9" stroke="#d8d8d8" stroke-width="0.35"/></svg>
<svg class="a" style="left:30.00px;top:196.52px" width="2.6" height="2.4" viewBox="0 0 2.6 2.4"><path d="M0.6 0h1.4v1.1h0.6L1.3 2.4 0 1.1h0.6z" fill="#1e88e5"/></svg>
<div class="a t" style="left:34.10px;top:194.23px;font-size:4.651162790697675px;line-height:5.58px;color:#2a2a2a;transform:scaleX(0.8);transform-origin:0 50%;">CardTypes</div>
<svg class="a" style="left:23.40px;top:199.66px" width="2.4" height="4.4" viewBox="0 0 2.4 4.4"><circle cx="1.2" cy="1" r="0.8" fill="#4a98e0"/><path d="M0 4.4V2.8Q0 1.9 1.2 1.9Q2.4 1.9 2.4 2.8V4.4z" fill="#4a98e0"/></svg>
<svg class="a" style="left:27.20px;top:199.66px" width="5" height="4.6" viewBox="0 0 5 4.6"><rect x="0.2" y="0.2" width="4.4" height="4.2" fill="#4a4a4a"/><path d="M0.2 1.5h4.4M0.2 2.6h4.4M0.2 3.5h4.4M1.6 1.5v2.9M3.1 1.5v2.9" stroke="#d8d8d8" stroke-width="0.35"/></svg>
<svg class="a" style="left:30.00px;top:202.06px" width="2.6" height="2.4" viewBox="0 0 2.6 2.4"><path d="M0.6 0h1.4v1.1h0.6L1.3 2.4 0 1.1h0.6z" fill="#1e88e5"/></svg>
<div class="a t" style="left:34.10px;top:199.77px;font-size:4.651162790697675px;line-height:5.58px;color:#2a2a2a;transform:scaleX(0.8);transform-origin:0 50%;">Countries</div>
</div>
<div class="a t" style="left:19.20px;top:377.66px;font-size:4.534883720930233px;line-height:5.44px;color:#707070;transform:scaleX(0.8);transform-origin:0 50%;">Output</div>
<div class="a" style="left:19.20px;top:383.80px;width:11.80px;height:2.00px;background:#b8b8b8;"></div>
<div class="a t" style="left:35.50px;top:377.66px;font-size:4.534883720930233px;line-height:5.44px;color:#707070;transform:scaleX(0.8);transform-origin:0 50%;">Validation</div>
<div class="a" style="left:35.50px;top:383.80px;width:15.60px;height:2.00px;background:#b8b8b8;"></div>
<div class="a t" style="left:55.20px;top:377.66px;font-size:4.534883720930233px;line-height:5.44px;color:#707070;transform:scaleX(0.8);transform-origin:0 50%;">References</div>
<div class="a" style="left:55.20px;top:383.80px;width:19.30px;height:2.00px;background:#b8b8b8;"></div>
<div class="a t" style="left:78.60px;top:377.66px;font-size:4.534883720930233px;line-height:5.44px;color:#707070;transform:scaleX(0.8);transform-origin:0 50%;">Search</div>
<div class="a" style="left:78.60px;top:383.80px;width:11.30px;height:2.00px;background:#b8b8b8;"></div>
<div class="a" style="left:120.50px;top:145.00px;width:2.50px;height:229.00px;background:#e8e8e8;"></div>
<div class="a" style="left:123.60px;top:145.30px;width:56.10px;height:6.00px;background:#d6d6d6;border:0.5px solid #a8a8a8;"></div>
<div class="a" style="left:125.60px;top:146.60px;width:2.40px;height:3.20px;background:#3a9ae8;border-radius:0.6px"></div>
<div class="a t" style="left:129.40px;top:146.36px;font-size:4.534883720930233px;line-height:5.44px;color:#303030;transform:scaleX(0.8);transform-origin:0 50%;">Customer [Business Object]</div>
<div class="a" style="left:124.30px;top:151.30px;width:281.70px;height:106.30px;background:#f0f0f0;border:0.7px solid #7f9c9c;"></div>
<div class="a" style="left:123.50px;top:145.20px;width:282.50px;height:6.50px;background:#f0f0f0;"></div>
<div class="a" style="left:123.50px;top:151.20px;width:282.50px;height:0.60px;background:#d4d4d4;"></div>
<div class="a" style="left:123.50px;top:145.20px;width:56.10px;height:6.50px;background:#d2d2d2;"></div>
<svg class="a" style="left:125.2px;top:146.40px" width="3.4" height="3.8" viewBox="0 0 3.4 3.8"><path d="M1.7 0.2L3.2 1.9 1.7 3.6 0.2 1.9z" fill="#49a8f0"/></svg>
<div class="a t" style="left:129.40px;top:146.41px;font-size:4.534883720930233px;line-height:5.44px;color:#333;transform:scaleX(0.8);transform-origin:0 50%;">Customer [Business Object]</div>
<div class="a" style="left:123.50px;top:151.70px;width:282.50px;height:8.30px;background:#f0f0f0;"></div>
<div class="a t" style="left:92.70px;width:80px;text-align:center;top:154.41px;font-size:4.534883720930233px;line-height:5.44px;color:#555;transform:scaleX(0.8);transform-origin:50% 50%;">General</div>
<div class="a" style="left:141.30px;top:153.20px;width:19.30px;height:7.60px;background:#ffffff;border:0.7px solid #7f9c9c;border-bottom:none"></div>
<div class="a t" style="left:110.95px;width:80px;text-align:center;top:154.41px;font-size:4.534883720930233px;line-height:5.44px;color:#333;transform:scaleX(0.8);transform-origin:50% 50%;">Interface</div>
<div class="a t" style="left:128.05px;width:80px;text-align:center;top:154.41px;font-size:4.534883720930233px;line-height:5.44px;color:#555;transform:scaleX(0.8);transform-origin:50% 50%;">Target</div>
<div class="a t" style="left:141.75px;width:80px;text-align:center;top:154.41px;font-size:4.534883720930233px;line-height:5.44px;color:#555;transform:scaleX(0.8);transform-origin:50% 50%;">Entry</div>
<div class="a t" style="left:153.50px;width:80px;text-align:center;top:154.41px;font-size:4.534883720930233px;line-height:5.44px;color:#555;transform:scaleX(0.8);transform-origin:50% 50%;">Exit</div>
<div class="a t" style="left:167.50px;width:80px;text-align:center;top:154.41px;font-size:4.534883720930233px;line-height:5.44px;color:#555;transform:scaleX(0.8);transform-origin:50% 50%;">Children</div>
<div class="a t" style="left:189.50px;width:80px;text-align:center;top:154.41px;font-size:4.534883720930233px;line-height:5.44px;color:#555;transform:scaleX(0.8);transform-origin:50% 50%;">Relationships</div>
<svg class="a" style="left:397.4px;top:154.25px" width="8" height="4" viewBox="0 0 8 4"><path d="M2.6 0.6V3.4L0.6 2z" fill="none" stroke="#8a8a8a" stroke-width="0.5"/><path d="M5.2 0.6V3.4L7.2 2z" fill="#8a8a8a"/></svg>
<div class="a" style="left:124.20px;top:160.00px;width:281.80px;height:97.60px;background:#e6e6e6;border:0.7px solid #7f9c9c;"></div>
<div class="a" style="left:142.00px;top:159.50px;width:17.90px;height:1.20px;background:#ffffff;"></div>
<div class="a" style="left:124.90px;top:160.60px;width:280.40px;height:3.20px;background:#e6e6e6;"></div>
<div class="a" style="left:129.20px;top:163.80px;width:270.10px;height:93.20px;background:#e4e4e4;"></div>
<div class="a" style="left:129.40px;top:163.80px;width:237.10px;height:68.24px;background:#ffffff;"></div>
<div class="a" style="left:366.50px;top:163.80px;width:0.60px;height:68.24px;background:#dedede;"></div>
<div class="a" style="left:129.40px;top:163.80px;width:0.60px;height:68.24px;background:#c0c0c0;"></div>
<div class="a" style="left:137.80px;top:163.80px;width:0.60px;height:68.24px;background:#ececec;"></div>
<div class="a" style="left:144.90px;top:163.80px;width:0.60px;height:68.24px;background:#ececec;"></div>
<div class="a t" style="left:146.70px;top:165.36px;font-size:4.534883720930233px;line-height:5.44px;color:#3c3c3c;transform:scaleX(0.8);transform-origin:0 50%;">Field (type to locate)</div>
<div class="a" style="left:186.50px;top:163.80px;width:0.60px;height:68.24px;background:#ececec;"></div>
<div class="a t" style="left:154.45px;width:80px;text-align:center;top:165.36px;font-size:4.534883720930233px;line-height:5.44px;color:#3c3c3c;transform:scaleX(0.8);transform-origin:50% 50%;">Key</div>
<div class="a" style="left:202.40px;top:163.80px;width:0.60px;height:68.24px;background:#ececec;"></div>
<div class="a t" style="left:204.20px;top:165.36px;font-size:4.534883720930233px;line-height:5.44px;color:#3c3c3c;transform:scaleX(0.8);transform-origin:0 50%;">Format</div>
<div class="a" style="left:230.40px;top:163.80px;width:0.60px;height:68.24px;background:#ececec;"></div>
<div class="a t" style="left:163.90px;width:80px;text-align:right;top:165.36px;font-size:4.534883720930233px;line-height:5.44px;color:#3c3c3c;transform:scaleX(0.8);transform-origin:100% 50%;">Length</div>
<div class="a" style="left:245.50px;top:163.80px;width:0.60px;height:68.24px;background:#ececec;"></div>
<div class="a t" style="left:179.90px;width:80px;text-align:right;top:165.36px;font-size:4.534883720930233px;line-height:5.44px;color:#3c3c3c;transform:scaleX(0.8);transform-origin:100% 50%;">Scale</div>
<div class="a" style="left:261.50px;top:163.80px;width:0.60px;height:68.24px;background:#ececec;"></div>
<div class="a t" style="left:229.25px;width:80px;text-align:center;top:165.36px;font-size:4.534883720930233px;line-height:5.44px;color:#3c3c3c;transform:scaleX(0.8);transform-origin:50% 50%;">Nulls</div>
<div class="a" style="left:277.00px;top:163.80px;width:0.60px;height:68.24px;background:#ececec;"></div>
<div class="a t" style="left:278.80px;top:165.36px;font-size:4.534883720930233px;line-height:5.44px;color:#3c3c3c;transform:scaleX(0.8);transform-origin:0 50%;">Description</div>
<div class="a" style="left:311.50px;top:163.80px;width:0.60px;height:68.24px;background:#ececec;"></div>
<div class="a t" style="left:281.90px;width:80px;text-align:center;top:165.36px;font-size:4.534883720930233px;line-height:5.44px;color:#3c3c3c;transform:scaleX(0.8);transform-origin:50% 50%;">Validation</div>
<div class="a" style="left:332.30px;top:163.80px;width:0.60px;height:68.24px;background:#ececec;"></div>
<div class="a t" style="left:334.10px;top:165.36px;font-size:4.534883720930233px;line-height:5.44px;color:#3c3c3c;transform:scaleX(0.8);transform-origin:0 50%;">Events</div>
<div class="a" style="left:129.40px;top:170.40px;width:237.10px;height:0.60px;background:#dedede;"></div>
<div class="a" style="left:138.40px;top:171.00px;width:173.10px;height:7.63px;background:#c3d4e4;"></div>
<div class="a" style="left:129.40px;top:178.03px;width:237.10px;height:0.60px;background:#ececec;"></div>
<svg class="a" style="left:132.40px;top:173.22px" width="2.4" height="3.2" viewBox="0 0 2.4 3.2"><path d="M0.3 0.2L2.2 1.6 0.3 3z" fill="#222"/></svg>
<svg class="a" style="left:139.85px;top:173.31px" width="3" height="3" viewBox="0 0 3 3"><circle cx="1.5" cy="1.5" r="1.15" fill="#c4c4c4" stroke="#9a9a9a" stroke-width="0.4"/></svg>
<div class="a t" style="left:146.50px;top:172.77px;font-size:4.534883720930233px;line-height:5.44px;color:#2a2a2a;width:49.249999999999986px;overflow:hidden;transform:scaleX(0.8);transform-origin:0 50%;">BankId</div>
<div class="a t" style="left:154.45px;width:80px;text-align:center;top:172.77px;font-size:4.534883720930233px;line-height:5.44px;color:#333;transform:scaleX(0.8);transform-origin:50% 50%;">✓</div>
<div class="a t" style="left:204.00px;top:172.77px;font-size:4.534883720930233px;line-height:5.44px;color:#2a2a2a;width:32.25px;overflow:hidden;transform:scaleX(0.8);transform-origin:0 50%;">Num</div>
<div class="a t" style="left:163.90px;width:80px;text-align:right;top:172.77px;font-size:4.534883720930233px;line-height:5.44px;color:#2a2a2a;transform:scaleX(0.8);transform-origin:100% 50%;">5</div>
<div class="a t" style="left:179.90px;width:80px;text-align:right;top:172.77px;font-size:4.534883720930233px;line-height:5.44px;color:#2a2a2a;transform:scaleX(0.8);transform-origin:100% 50%;">0</div>
<div class="a t" style="left:278.60px;top:172.77px;font-size:4.534883720930233px;line-height:5.44px;color:#2a2a2a;width:40.37499999999999px;overflow:hidden;transform:scaleX(0.8);transform-origin:0 50%;">Unique id of the ...</div>
<div class="a" style="left:129.40px;top:185.66px;width:237.10px;height:0.60px;background:#ececec;"></div>
<svg class="a" style="left:139.85px;top:180.94px" width="3" height="3" viewBox="0 0 3 3"><circle cx="1.5" cy="1.5" r="1.15" fill="#c4c4c4" stroke="#9a9a9a" stroke-width="0.4"/></svg>
<div class="a t" style="left:146.50px;top:180.40px;font-size:4.534883720930233px;line-height:5.44px;color:#2a2a2a;width:49.249999999999986px;overflow:hidden;transform:scaleX(0.8);transform-origin:0 50%;">CustomerNumber</div>
<div class="a t" style="left:154.45px;width:80px;text-align:center;top:180.40px;font-size:4.534883720930233px;line-height:5.44px;color:#333;transform:scaleX(0.8);transform-origin:50% 50%;">✓</div>
<div class="a t" style="left:204.00px;top:180.40px;font-size:4.534883720930233px;line-height:5.44px;color:#2a2a2a;width:32.25px;overflow:hidden;transform:scaleX(0.8);transform-origin:0 50%;">Char</div>
<div class="a t" style="left:163.90px;width:80px;text-align:right;top:180.40px;font-size:4.534883720930233px;line-height:5.44px;color:#2a2a2a;transform:scaleX(0.8);transform-origin:100% 50%;">30</div>
<div class="a t" style="left:278.60px;top:180.40px;font-size:4.534883720930233px;line-height:5.44px;color:#2a2a2a;width:40.37499999999999px;overflow:hidden;transform:scaleX(0.8);transform-origin:0 50%;">Unique Customer...</div>
<div class="a" style="left:129.40px;top:193.29px;width:237.10px;height:0.60px;background:#ececec;"></div>
<svg class="a" style="left:139.85px;top:188.57px" width="3" height="3" viewBox="0 0 3 3"><circle cx="1.5" cy="1.5" r="1.15" fill="#c4c4c4" stroke="#9a9a9a" stroke-width="0.4"/></svg>
<div class="a t" style="left:146.50px;top:188.03px;font-size:4.534883720930233px;line-height:5.44px;color:#2a2a2a;width:49.249999999999986px;overflow:hidden;transform:scaleX(0.8);transform-origin:0 50%;">CustomerType</div>
<div class="a t" style="left:204.00px;top:188.03px;font-size:4.534883720930233px;line-height:5.44px;color:#2a2a2a;width:32.25px;overflow:hidden;transform:scaleX(0.8);transform-origin:0 50%;">Char</div>
<div class="a t" style="left:163.90px;width:80px;text-align:right;top:188.03px;font-size:4.534883720930233px;line-height:5.44px;color:#2a2a2a;transform:scaleX(0.8);transform-origin:100% 50%;">1</div>
<div class="a t" style="left:278.60px;top:188.03px;font-size:4.534883720930233px;line-height:5.44px;color:#2a2a2a;width:40.37499999999999px;overflow:hidden;transform:scaleX(0.8);transform-origin:0 50%;">Valueset: I=Indivi...</div>
<div class="a t" style="left:281.90px;width:80px;text-align:center;top:188.03px;font-size:4.534883720930233px;line-height:5.44px;color:#333;transform:scaleX(0.8);transform-origin:50% 50%;">✓</div>
<div class="a" style="left:129.40px;top:200.92px;width:237.10px;height:0.60px;background:#ececec;"></div>
<svg class="a" style="left:139.85px;top:196.20px" width="3" height="3" viewBox="0 0 3 3"><circle cx="1.5" cy="1.5" r="1.15" fill="#c4c4c4" stroke="#9a9a9a" stroke-width="0.4"/></svg>
<div class="a t" style="left:146.50px;top:195.66px;font-size:4.534883720930233px;line-height:5.44px;color:#2a2a2a;width:49.249999999999986px;overflow:hidden;transform:scaleX(0.8);transform-origin:0 50%;">CustomerNumberType</div>
<div class="a t" style="left:204.00px;top:195.66px;font-size:4.534883720930233px;line-height:5.44px;color:#2a2a2a;width:32.25px;overflow:hidden;transform:scaleX(0.8);transform-origin:0 50%;">Num</div>
<div class="a t" style="left:163.90px;width:80px;text-align:right;top:195.66px;font-size:4.534883720930233px;line-height:5.44px;color:#2a2a2a;transform:scaleX(0.8);transform-origin:100% 50%;">1</div>
<div class="a t" style="left:179.90px;width:80px;text-align:right;top:195.66px;font-size:4.534883720930233px;line-height:5.44px;color:#2a2a2a;transform:scaleX(0.8);transform-origin:100% 50%;">0</div>
<div class="a t" style="left:278.60px;top:195.66px;font-size:4.534883720930233px;line-height:5.44px;color:#2a2a2a;width:40.37499999999999px;overflow:hidden;transform:scaleX(0.8);transform-origin:0 50%;">Valueset: 1=Soci...</div>
<div class="a t" style="left:281.90px;width:80px;text-align:center;top:195.66px;font-size:4.534883720930233px;line-height:5.44px;color:#333;transform:scaleX(0.8);transform-origin:50% 50%;">✓</div>
<div class="a" style="left:129.40px;top:208.55px;width:237.10px;height:0.60px;background:#ececec;"></div>
<svg class="a" style="left:139.85px;top:203.84px" width="3" height="3" viewBox="0 0 3 3"><circle cx="1.5" cy="1.5" r="1.15" fill="#c4c4c4" stroke="#9a9a9a" stroke-width="0.4"/></svg>
<div class="a t" style="left:146.50px;top:203.29px;font-size:4.534883720930233px;line-height:5.44px;color:#2a2a2a;width:49.249999999999986px;overflow:hidden;transform:scaleX(0.8);transform-origin:0 50%;">BankUnit</div>
<div class="a t" style="left:204.00px;top:203.29px;font-size:4.534883720930233px;line-height:5.44px;color:#2a2a2a;width:32.25px;overflow:hidden;transform:scaleX(0.8);transform-origin:0 50%;">Char</div>
<div class="a t" style="left:163.90px;width:80px;text-align:right;top:203.29px;font-size:4.534883720930233px;line-height:5.44px;color:#2a2a2a;transform:scaleX(0.8);transform-origin:100% 50%;">8</div>
<div class="a t" style="left:278.60px;top:203.29px;font-size:4.534883720930233px;line-height:5.44px;color:#2a2a2a;width:40.37499999999999px;overflow:hidden;transform:scaleX(0.8);transform-origin:0 50%;">The department t...</div>
<div class="a t" style="left:281.90px;width:80px;text-align:center;top:203.29px;font-size:4.534883720930233px;line-height:5.44px;color:#333;transform:scaleX(0.8);transform-origin:50% 50%;">✓</div>
<div class="a" style="left:129.40px;top:216.18px;width:237.10px;height:0.60px;background:#ececec;"></div>
<svg class="a" style="left:139.85px;top:211.47px" width="3" height="3" viewBox="0 0 3 3"><circle cx="1.5" cy="1.5" r="1.15" fill="#c4c4c4" stroke="#9a9a9a" stroke-width="0.4"/></svg>
<div class="a t" style="left:146.50px;top:210.92px;font-size:4.534883720930233px;line-height:5.44px;color:#2a2a2a;width:49.249999999999986px;overflow:hidden;transform:scaleX(0.8);transform-origin:0 50%;">CustomerSegment</div>
<div class="a t" style="left:204.00px;top:210.92px;font-size:4.534883720930233px;line-height:5.44px;color:#2a2a2a;width:32.25px;overflow:hidden;transform:scaleX(0.8);transform-origin:0 50%;">Char</div>
<div class="a t" style="left:163.90px;width:80px;text-align:right;top:210.92px;font-size:4.534883720930233px;line-height:5.44px;color:#2a2a2a;transform:scaleX(0.8);transform-origin:100% 50%;">35</div>
<div class="a t" style="left:278.60px;top:210.92px;font-size:4.534883720930233px;line-height:5.44px;color:#2a2a2a;width:40.37499999999999px;overflow:hidden;transform:scaleX(0.8);transform-origin:0 50%;">Valueset for Cust...</div>
<div class="a" style="left:129.40px;top:223.81px;width:237.10px;height:0.60px;background:#ececec;"></div>
<svg class="a" style="left:139.85px;top:219.09px" width="3" height="3" viewBox="0 0 3 3"><circle cx="1.5" cy="1.5" r="1.15" fill="#c4c4c4" stroke="#9a9a9a" stroke-width="0.4"/></svg>
<div class="a t" style="left:146.50px;top:218.55px;font-size:4.534883720930233px;line-height:5.44px;color:#2a2a2a;width:49.249999999999986px;overflow:hidden;transform:scaleX(0.8);transform-origin:0 50%;">EndDate</div>
<div class="a t" style="left:204.00px;top:218.55px;font-size:4.534883720930233px;line-height:5.44px;color:#2a2a2a;width:32.25px;overflow:hidden;transform:scaleX(0.8);transform-origin:0 50%;">Date</div>
<div class="a t" style="left:229.25px;width:80px;text-align:center;top:218.55px;font-size:4.534883720930233px;line-height:5.44px;color:#333;transform:scaleX(0.8);transform-origin:50% 50%;">✓</div>
<div class="a t" style="left:278.60px;top:218.55px;font-size:4.534883720930233px;line-height:5.44px;color:#2a2a2a;width:40.37499999999999px;overflow:hidden;transform:scaleX(0.8);transform-origin:0 50%;">Date of completi...</div>
<div class="a" style="left:129.40px;top:231.44px;width:237.10px;height:0.60px;background:#ececec;"></div>
<svg class="a" style="left:139.85px;top:226.72px" width="3" height="3" viewBox="0 0 3 3"><circle cx="1.5" cy="1.5" r="1.15" fill="#c4c4c4" stroke="#9a9a9a" stroke-width="0.4"/></svg>
<div class="a t" style="left:146.50px;top:226.18px;font-size:4.534883720930233px;line-height:5.44px;color:#2a2a2a;width:49.249999999999986px;overflow:hidden;transform:scaleX(0.8);transform-origin:0 50%;">Adviser</div>
<div class="a t" style="left:204.00px;top:226.18px;font-size:4.534883720930233px;line-height:5.44px;color:#2a2a2a;width:32.25px;overflow:hidden;transform:scaleX(0.8);transform-origin:0 50%;">Char</div>
<div class="a t" style="left:163.90px;width:80px;text-align:right;top:226.18px;font-size:4.534883720930233px;line-height:5.44px;color:#2a2a2a;transform:scaleX(0.8);transform-origin:100% 50%;">30</div>
<div class="a t" style="left:229.25px;width:80px;text-align:center;top:226.18px;font-size:4.534883720930233px;line-height:5.44px;color:#333;transform:scaleX(0.8);transform-origin:50% 50%;">✓</div>
<div class="a t" style="left:278.60px;top:226.18px;font-size:4.534883720930233px;line-height:5.44px;color:#2a2a2a;width:40.37499999999999px;overflow:hidden;transform:scaleX(0.8);transform-origin:0 50%;">Customer adviser...</div>
<div class="a" style="left:129.20px;top:163.80px;width:0.60px;height:93.20px;background:#c0c0c0;"></div>
<div class="a" style="left:399.30px;top:163.80px;width:6.00px;height:93.40px;background:#f0f0f0;"></div>
<svg class="a" style="left:400.8px;top:253.2px" width="3" height="2.4" viewBox="0 0 3 2.4"><path d="M0.3 0.4L1.5 1.8 2.7 0.4" fill="none" stroke="#555" stroke-width="0.5"/></svg>
<div class="a" style="left:366.50px;top:232.00px;width:0.70px;height:25.00px;background:#b8b8b8;"></div>
<div class="a" style="left:123.50px;top:257.60px;width:282.50px;height:4.00px;background:#f0f0f0;"></div>
<div class="a" style="left:123.50px;top:261.50px;width:282.50px;height:6.10px;background:#f0f0f0;"></div>
<div class="a" style="left:123.50px;top:267.10px;width:282.50px;height:0.60px;background:#d4d4d4;"></div>
<div class="a" style="left:123.50px;top:261.50px;width:54.00px;height:6.10px;background:#d2d2d2;"></div>
<svg class="a" style="left:125.2px;top:262.70px" width="3.4" height="3.8" viewBox="0 0 3.4 3.8"><path d="M1.7 0.2L3.2 1.9 1.7 3.6 0.2 1.9z" fill="#49a8f0"/></svg>
<div class="a t" style="left:129.40px;top:262.51px;font-size:4.534883720930233px;line-height:5.44px;color:#333;transform:scaleX(0.8);transform-origin:0 50%;">Account [Business Object]</div>
<svg class="a" style="left:397.6px;top:262.55px" width="9" height="4" viewBox="0 0 9 4"><path d="M0.4 1.4H3.4L1.9 2.9z" fill="#1a1a1a"/><path d="M5.2 0.6L8.2 3.6M8.2 0.6L5.2 3.6" stroke="#1a1a1a" stroke-width="0.8"/></svg>
<div class="a" style="left:123.50px;top:267.60px;width:282.50px;height:8.70px;background:#f0f0f0;"></div>
<div class="a t" style="left:92.70px;width:80px;text-align:center;top:270.51px;font-size:4.534883720930233px;line-height:5.44px;color:#555;transform:scaleX(0.8);transform-origin:50% 50%;">General</div>
<div class="a" style="left:141.30px;top:269.10px;width:19.30px;height:8.00px;background:#ffffff;border:0.7px solid #7f9c9c;border-bottom:none"></div>
<div class="a t" style="left:110.95px;width:80px;text-align:center;top:270.51px;font-size:4.534883720930233px;line-height:5.44px;color:#333;transform:scaleX(0.8);transform-origin:50% 50%;">Interface</div>
<div class="a t" style="left:128.05px;width:80px;text-align:center;top:270.51px;font-size:4.534883720930233px;line-height:5.44px;color:#555;transform:scaleX(0.8);transform-origin:50% 50%;">Target</div>
<div class="a t" style="left:141.75px;width:80px;text-align:center;top:270.51px;font-size:4.534883720930233px;line-height:5.44px;color:#555;transform:scaleX(0.8);transform-origin:50% 50%;">Entry</div>
<div class="a t" style="left:153.50px;width:80px;text-align:center;top:270.51px;font-size:4.534883720930233px;line-height:5.44px;color:#555;transform:scaleX(0.8);transform-origin:50% 50%;">Exit</div>
<div class="a t" style="left:167.50px;width:80px;text-align:center;top:270.51px;font-size:4.534883720930233px;line-height:5.44px;color:#555;transform:scaleX(0.8);transform-origin:50% 50%;">Children</div>
<div class="a t" style="left:189.50px;width:80px;text-align:center;top:270.51px;font-size:4.534883720930233px;line-height:5.44px;color:#555;transform:scaleX(0.8);transform-origin:50% 50%;">Relationships</div>
<svg class="a" style="left:397.4px;top:270.35px" width="8" height="4" viewBox="0 0 8 4"><path d="M2.6 0.6V3.4L0.6 2z" fill="none" stroke="#8a8a8a" stroke-width="0.5"/><path d="M5.2 0.6V3.4L7.2 2z" fill="#8a8a8a"/></svg>
<div class="a" style="left:124.20px;top:276.30px;width:281.80px;height:97.20px;background:#e6e6e6;border:0.7px solid #7f9c9c;"></div>
<div class="a" style="left:142.00px;top:275.80px;width:17.90px;height:1.20px;background:#ffffff;"></div>
<div class="a" style="left:0;top:0;width:752px;height:373px;overflow:hidden">
<div class="a" style="left:129.20px;top:276.30px;width:270.10px;height:96.70px;background:#e4e4e4;"></div>
<div class="a" style="left:129.40px;top:276.30px;width:237.10px;height:96.70px;background:#ffffff;"></div>
<div class="a" style="left:366.50px;top:276.30px;width:0.60px;height:96.70px;background:#dedede;"></div>
<div class="a" style="left:129.40px;top:276.30px;width:0.60px;height:96.70px;background:#c0c0c0;"></div>
<div class="a" style="left:137.80px;top:276.30px;width:0.60px;height:96.70px;background:#ececec;"></div>
<div class="a" style="left:145.20px;top:276.30px;width:0.60px;height:96.70px;background:#ececec;"></div>
<div class="a t" style="left:147.00px;top:277.86px;font-size:4.534883720930233px;line-height:5.44px;color:#3c3c3c;transform:scaleX(0.8);transform-origin:0 50%;">Field (type to locate)</div>
<div class="a" style="left:186.80px;top:276.30px;width:0.60px;height:96.70px;background:#ececec;"></div>
<div class="a t" style="left:154.60px;width:80px;text-align:center;top:277.86px;font-size:4.534883720930233px;line-height:5.44px;color:#3c3c3c;transform:scaleX(0.8);transform-origin:50% 50%;">Key</div>
<div class="a" style="left:202.40px;top:276.30px;width:0.60px;height:96.70px;background:#ececec;"></div>
<div class="a t" style="left:204.20px;top:277.86px;font-size:4.534883720930233px;line-height:5.44px;color:#3c3c3c;transform:scaleX(0.8);transform-origin:0 50%;">Format</div>
<div class="a" style="left:230.40px;top:276.30px;width:0.60px;height:96.70px;background:#ececec;"></div>
<div class="a t" style="left:163.90px;width:80px;text-align:right;top:277.86px;font-size:4.534883720930233px;line-height:5.44px;color:#3c3c3c;transform:scaleX(0.8);transform-origin:100% 50%;">Length</div>
<div class="a" style="left:245.50px;top:276.30px;width:0.60px;height:96.70px;background:#ececec;"></div>
<div class="a t" style="left:179.90px;width:80px;text-align:right;top:277.86px;font-size:4.534883720930233px;line-height:5.44px;color:#3c3c3c;transform:scaleX(0.8);transform-origin:100% 50%;">Scale</div>
<div class="a" style="left:261.50px;top:276.30px;width:0.60px;height:96.70px;background:#ececec;"></div>
<div class="a t" style="left:229.25px;width:80px;text-align:center;top:277.86px;font-size:4.534883720930233px;line-height:5.44px;color:#3c3c3c;transform:scaleX(0.8);transform-origin:50% 50%;">Nulls</div>
<div class="a" style="left:277.00px;top:276.30px;width:0.60px;height:96.70px;background:#ececec;"></div>
<div class="a t" style="left:278.80px;top:277.86px;font-size:4.534883720930233px;line-height:5.44px;color:#3c3c3c;transform:scaleX(0.8);transform-origin:0 50%;">Description</div>
<div class="a" style="left:311.50px;top:276.30px;width:0.60px;height:96.70px;background:#ececec;"></div>
<div class="a t" style="left:281.90px;width:80px;text-align:center;top:277.86px;font-size:4.534883720930233px;line-height:5.44px;color:#3c3c3c;transform:scaleX(0.8);transform-origin:50% 50%;">Validation</div>
<div class="a" style="left:332.30px;top:276.30px;width:0.60px;height:96.70px;background:#ececec;"></div>
<div class="a t" style="left:334.10px;top:277.86px;font-size:4.534883720930233px;line-height:5.44px;color:#3c3c3c;transform:scaleX(0.8);transform-origin:0 50%;">Events</div>
<div class="a" style="left:129.40px;top:282.90px;width:237.10px;height:0.60px;background:#dedede;"></div>
<div class="a" style="left:138.40px;top:283.50px;width:173.10px;height:7.60px;background:#c3d4e4;"></div>
<div class="a" style="left:129.40px;top:290.50px;width:237.10px;height:0.60px;background:#ececec;"></div>
<svg class="a" style="left:132.40px;top:285.70px" width="2.4" height="3.2" viewBox="0 0 2.4 3.2"><path d="M0.3 0.2L2.2 1.6 0.3 3z" fill="#222"/></svg>
<svg class="a" style="left:140.00px;top:285.80px" width="3" height="3" viewBox="0 0 3 3"><circle cx="1.5" cy="1.5" r="1.15" fill="#c4c4c4" stroke="#9a9a9a" stroke-width="0.4"/></svg>
<div class="a t" style="left:146.80px;top:285.26px;font-size:4.534883720930233px;line-height:5.44px;color:#2a2a2a;width:49.25000000000002px;overflow:hidden;transform:scaleX(0.8);transform-origin:0 50%;">BankId</div>
<div class="a t" style="left:154.60px;width:80px;text-align:center;top:285.26px;font-size:4.534883720930233px;line-height:5.44px;color:#333;transform:scaleX(0.8);transform-origin:50% 50%;">✓</div>
<div class="a t" style="left:204.00px;top:285.26px;font-size:4.534883720930233px;line-height:5.44px;color:#2a2a2a;width:32.25px;overflow:hidden;transform:scaleX(0.8);transform-origin:0 50%;">Num</div>
<div class="a t" style="left:163.90px;width:80px;text-align:right;top:285.26px;font-size:4.534883720930233px;line-height:5.44px;color:#2a2a2a;transform:scaleX(0.8);transform-origin:100% 50%;">5</div>
<div class="a t" style="left:179.90px;width:80px;text-align:right;top:285.26px;font-size:4.534883720930233px;line-height:5.44px;color:#2a2a2a;transform:scaleX(0.8);transform-origin:100% 50%;">0</div>
<div class="a t" style="left:278.60px;top:285.26px;font-size:4.534883720930233px;line-height:5.44px;color:#2a2a2a;width:40.37499999999999px;overflow:hidden;transform:scaleX(0.8);transform-origin:0 50%;">Unique id of the ...</div>
<div class="a" style="left:129.40px;top:298.10px;width:237.10px;height:0.60px;background:#ececec;"></div>
<svg class="a" style="left:140.00px;top:293.40px" width="3" height="3" viewBox="0 0 3 3"><circle cx="1.5" cy="1.5" r="1.15" fill="#c4c4c4" stroke="#9a9a9a" stroke-width="0.4"/></svg>
<div class="a t" style="left:146.80px;top:292.86px;font-size:4.534883720930233px;line-height:5.44px;color:#2a2a2a;width:49.25000000000002px;overflow:hidden;transform:scaleX(0.8);transform-origin:0 50%;">AccountNumber</div>
<div class="a t" style="left:154.60px;width:80px;text-align:center;top:292.86px;font-size:4.534883720930233px;line-height:5.44px;color:#333;transform:scaleX(0.8);transform-origin:50% 50%;">✓</div>
<div class="a t" style="left:204.00px;top:292.86px;font-size:4.534883720930233px;line-height:5.44px;color:#2a2a2a;width:32.25px;overflow:hidden;transform:scaleX(0.8);transform-origin:0 50%;">Char</div>
<div class="a t" style="left:163.90px;width:80px;text-align:right;top:292.86px;font-size:4.534883720930233px;line-height:5.44px;color:#2a2a2a;transform:scaleX(0.8);transform-origin:100% 50%;">30</div>
<div class="a t" style="left:278.60px;top:292.86px;font-size:4.534883720930233px;line-height:5.44px;color:#2a2a2a;width:40.37499999999999px;overflow:hidden;transform:scaleX(0.8);transform-origin:0 50%;">Account number...</div>
<div class="a" style="left:129.40px;top:305.70px;width:237.10px;height:0.60px;background:#ececec;"></div>
<svg class="a" style="left:140.00px;top:301.00px" width="3" height="3" viewBox="0 0 3 3"><circle cx="1.5" cy="1.5" r="1.15" fill="#c4c4c4" stroke="#9a9a9a" stroke-width="0.4"/></svg>
<div class="a t" style="left:146.80px;top:300.46px;font-size:4.534883720930233px;line-height:5.44px;color:#2a2a2a;width:49.25000000000002px;overflow:hidden;transform:scaleX(0.8);transform-origin:0 50%;">AccountType</div>
<div class="a t" style="left:204.00px;top:300.46px;font-size:4.534883720930233px;line-height:5.44px;color:#2a2a2a;width:32.25px;overflow:hidden;transform:scaleX(0.8);transform-origin:0 50%;">Char</div>
<div class="a t" style="left:163.90px;width:80px;text-align:right;top:300.46px;font-size:4.534883720930233px;line-height:5.44px;color:#2a2a2a;transform:scaleX(0.8);transform-origin:100% 50%;">4</div>
<div class="a t" style="left:278.60px;top:300.46px;font-size:4.534883720930233px;line-height:5.44px;color:#2a2a2a;width:40.37499999999999px;overflow:hidden;transform:scaleX(0.8);transform-origin:0 50%;">Valueset: Accoun...</div>
<div class="a t" style="left:281.90px;width:80px;text-align:center;top:300.46px;font-size:4.534883720930233px;line-height:5.44px;color:#333;transform:scaleX(0.8);transform-origin:50% 50%;">✓</div>
<div class="a" style="left:129.40px;top:313.30px;width:237.10px;height:0.60px;background:#ececec;"></div>
<svg class="a" style="left:140.00px;top:308.60px" width="3" height="3" viewBox="0 0 3 3"><circle cx="1.5" cy="1.5" r="1.15" fill="#c4c4c4" stroke="#9a9a9a" stroke-width="0.4"/></svg>
<div class="a t" style="left:146.80px;top:308.06px;font-size:4.534883720930233px;line-height:5.44px;color:#2a2a2a;width:49.25000000000002px;overflow:hidden;transform:scaleX(0.8);transform-origin:0 50%;">ProductCode</div>
<div class="a t" style="left:204.00px;top:308.06px;font-size:4.534883720930233px;line-height:5.44px;color:#2a2a2a;width:32.25px;overflow:hidden;transform:scaleX(0.8);transform-origin:0 50%;">Char</div>
<div class="a t" style="left:163.90px;width:80px;text-align:right;top:308.06px;font-size:4.534883720930233px;line-height:5.44px;color:#2a2a2a;transform:scaleX(0.8);transform-origin:100% 50%;">10</div>
<div class="a t" style="left:278.60px;top:308.06px;font-size:4.534883720930233px;line-height:5.44px;color:#2a2a2a;width:40.37499999999999px;overflow:hidden;transform:scaleX(0.8);transform-origin:0 50%;">Product code...</div>
<div class="a t" style="left:281.90px;width:80px;text-align:center;top:308.06px;font-size:4.534883720930233px;line-height:5.44px;color:#333;transform:scaleX(0.8);transform-origin:50% 50%;">✓</div>
<div class="a" style="left:129.40px;top:320.90px;width:237.10px;height:0.60px;background:#ececec;"></div>
<svg class="a" style="left:140.00px;top:316.20px" width="3" height="3" viewBox="0 0 3 3"><circle cx="1.5" cy="1.5" r="1.15" fill="#c4c4c4" stroke="#9a9a9a" stroke-width="0.4"/></svg>
<div class="a t" style="left:146.80px;top:315.66px;font-size:4.534883720930233px;line-height:5.44px;color:#2a2a2a;width:49.25000000000002px;overflow:hidden;transform:scaleX(0.8);transform-origin:0 50%;">Status</div>
<div class="a t" style="left:204.00px;top:315.66px;font-size:4.534883720930233px;line-height:5.44px;color:#2a2a2a;width:32.25px;overflow:hidden;transform:scaleX(0.8);transform-origin:0 50%;">Char</div>
<div class="a t" style="left:163.90px;width:80px;text-align:right;top:315.66px;font-size:4.534883720930233px;line-height:5.44px;color:#2a2a2a;transform:scaleX(0.8);transform-origin:100% 50%;">4</div>
<div class="a t" style="left:278.60px;top:315.66px;font-size:4.534883720930233px;line-height:5.44px;color:#2a2a2a;width:40.37499999999999px;overflow:hidden;transform:scaleX(0.8);transform-origin:0 50%;">Valueset: Status...</div>
<div class="a t" style="left:281.90px;width:80px;text-align:center;top:315.66px;font-size:4.534883720930233px;line-height:5.44px;color:#333;transform:scaleX(0.8);transform-origin:50% 50%;">✓</div>
<div class="a" style="left:129.40px;top:328.50px;width:237.10px;height:0.60px;background:#ececec;"></div>
<svg class="a" style="left:140.00px;top:323.80px" width="3" height="3" viewBox="0 0 3 3"><circle cx="1.5" cy="1.5" r="1.15" fill="#c4c4c4" stroke="#9a9a9a" stroke-width="0.4"/></svg>
<div class="a t" style="left:146.80px;top:323.26px;font-size:4.534883720930233px;line-height:5.44px;color:#2a2a2a;width:49.25000000000002px;overflow:hidden;transform:scaleX(0.8);transform-origin:0 50%;">Currency</div>
<div class="a t" style="left:204.00px;top:323.26px;font-size:4.534883720930233px;line-height:5.44px;color:#2a2a2a;width:32.25px;overflow:hidden;transform:scaleX(0.8);transform-origin:0 50%;">Char</div>
<div class="a t" style="left:163.90px;width:80px;text-align:right;top:323.26px;font-size:4.534883720930233px;line-height:5.44px;color:#2a2a2a;transform:scaleX(0.8);transform-origin:100% 50%;">3</div>
<div class="a t" style="left:278.60px;top:323.26px;font-size:4.534883720930233px;line-height:5.44px;color:#2a2a2a;width:40.37499999999999px;overflow:hidden;transform:scaleX(0.8);transform-origin:0 50%;">Currency code...</div>
<div class="a t" style="left:281.90px;width:80px;text-align:center;top:323.26px;font-size:4.534883720930233px;line-height:5.44px;color:#333;transform:scaleX(0.8);transform-origin:50% 50%;">✓</div>
<div class="a" style="left:129.40px;top:336.10px;width:237.10px;height:0.60px;background:#ececec;"></div>
<svg class="a" style="left:140.00px;top:331.40px" width="3" height="3" viewBox="0 0 3 3"><circle cx="1.5" cy="1.5" r="1.15" fill="#c4c4c4" stroke="#9a9a9a" stroke-width="0.4"/></svg>
<div class="a t" style="left:146.80px;top:330.86px;font-size:4.534883720930233px;line-height:5.44px;color:#2a2a2a;width:49.25000000000002px;overflow:hidden;transform:scaleX(0.8);transform-origin:0 50%;">Balance</div>
<div class="a t" style="left:204.00px;top:330.86px;font-size:4.534883720930233px;line-height:5.44px;color:#2a2a2a;width:32.25px;overflow:hidden;transform:scaleX(0.8);transform-origin:0 50%;">Num</div>
<div class="a t" style="left:163.90px;width:80px;text-align:right;top:330.86px;font-size:4.534883720930233px;line-height:5.44px;color:#2a2a2a;transform:scaleX(0.8);transform-origin:100% 50%;">15</div>
<div class="a t" style="left:179.90px;width:80px;text-align:right;top:330.86px;font-size:4.534883720930233px;line-height:5.44px;color:#2a2a2a;transform:scaleX(0.8);transform-origin:100% 50%;">2</div>
<div class="a t" style="left:278.60px;top:330.86px;font-size:4.534883720930233px;line-height:5.44px;color:#2a2a2a;width:40.37499999999999px;overflow:hidden;transform:scaleX(0.8);transform-origin:0 50%;">Balance on acco...</div>
<div class="a" style="left:129.40px;top:343.70px;width:237.10px;height:0.60px;background:#ececec;"></div>
<svg class="a" style="left:140.00px;top:339.00px" width="3" height="3" viewBox="0 0 3 3"><circle cx="1.5" cy="1.5" r="1.15" fill="#c4c4c4" stroke="#9a9a9a" stroke-width="0.4"/></svg>
<div class="a t" style="left:146.80px;top:338.46px;font-size:4.534883720930233px;line-height:5.44px;color:#2a2a2a;width:49.25000000000002px;overflow:hidden;transform:scaleX(0.8);transform-origin:0 50%;">PrimaryOwner</div>
<div class="a t" style="left:204.00px;top:338.46px;font-size:4.534883720930233px;line-height:5.44px;color:#2a2a2a;width:32.25px;overflow:hidden;transform:scaleX(0.8);transform-origin:0 50%;">Char</div>
<div class="a t" style="left:163.90px;width:80px;text-align:right;top:338.46px;font-size:4.534883720930233px;line-height:5.44px;color:#2a2a2a;transform:scaleX(0.8);transform-origin:100% 50%;">30</div>
<div class="a t" style="left:278.60px;top:338.46px;font-size:4.534883720930233px;line-height:5.44px;color:#2a2a2a;width:40.37499999999999px;overflow:hidden;transform:scaleX(0.8);transform-origin:0 50%;">Primary owner...</div>
<div class="a" style="left:129.40px;top:351.30px;width:237.10px;height:0.60px;background:#ececec;"></div>
<svg class="a" style="left:140.00px;top:346.60px" width="3" height="3" viewBox="0 0 3 3"><circle cx="1.5" cy="1.5" r="1.15" fill="#c4c4c4" stroke="#9a9a9a" stroke-width="0.4"/></svg>
<div class="a t" style="left:146.80px;top:346.06px;font-size:4.534883720930233px;line-height:5.44px;color:#2a2a2a;width:49.25000000000002px;overflow:hidden;transform:scaleX(0.8);transform-origin:0 50%;">PrimaryOwnershipPct</div>
<div class="a t" style="left:204.00px;top:346.06px;font-size:4.534883720930233px;line-height:5.44px;color:#2a2a2a;width:32.25px;overflow:hidden;transform:scaleX(0.8);transform-origin:0 50%;">Num</div>
<div class="a t" style="left:163.90px;width:80px;text-align:right;top:346.06px;font-size:4.534883720930233px;line-height:5.44px;color:#2a2a2a;transform:scaleX(0.8);transform-origin:100% 50%;">5</div>
<div class="a t" style="left:179.90px;width:80px;text-align:right;top:346.06px;font-size:4.534883720930233px;line-height:5.44px;color:#2a2a2a;transform:scaleX(0.8);transform-origin:100% 50%;">2</div>
<div class="a t" style="left:278.60px;top:346.06px;font-size:4.534883720930233px;line-height:5.44px;color:#2a2a2a;width:40.37499999999999px;overflow:hidden;transform:scaleX(0.8);transform-origin:0 50%;">Ownership pct...</div>
<div class="a" style="left:129.40px;top:358.90px;width:237.10px;height:0.60px;background:#ececec;"></div>
<svg class="a" style="left:140.00px;top:354.20px" width="3" height="3" viewBox="0 0 3 3"><circle cx="1.5" cy="1.5" r="1.15" fill="#c4c4c4" stroke="#9a9a9a" stroke-width="0.4"/></svg>
<div class="a t" style="left:146.80px;top:353.66px;font-size:4.534883720930233px;line-height:5.44px;color:#2a2a2a;width:49.25000000000002px;overflow:hidden;transform:scaleX(0.8);transform-origin:0 50%;">BankUnit</div>
<div class="a t" style="left:204.00px;top:353.66px;font-size:4.534883720930233px;line-height:5.44px;color:#2a2a2a;width:32.25px;overflow:hidden;transform:scaleX(0.8);transform-origin:0 50%;">Char</div>
<div class="a t" style="left:163.90px;width:80px;text-align:right;top:353.66px;font-size:4.534883720930233px;line-height:5.44px;color:#2a2a2a;transform:scaleX(0.8);transform-origin:100% 50%;">8</div>
<div class="a t" style="left:278.60px;top:353.66px;font-size:4.534883720930233px;line-height:5.44px;color:#2a2a2a;width:40.37499999999999px;overflow:hidden;transform:scaleX(0.8);transform-origin:0 50%;">The department t...</div>
<div class="a t" style="left:281.90px;width:80px;text-align:center;top:353.66px;font-size:4.534883720930233px;line-height:5.44px;color:#333;transform:scaleX(0.8);transform-origin:50% 50%;">✓</div>
<div class="a" style="left:129.40px;top:366.50px;width:237.10px;height:0.60px;background:#ececec;"></div>
<svg class="a" style="left:140.00px;top:361.80px" width="3" height="3" viewBox="0 0 3 3"><circle cx="1.5" cy="1.5" r="1.15" fill="#c4c4c4" stroke="#9a9a9a" stroke-width="0.4"/></svg>
<div class="a t" style="left:146.80px;top:361.26px;font-size:4.534883720930233px;line-height:5.44px;color:#2a2a2a;width:49.25000000000002px;overflow:hidden;transform:scaleX(0.8);transform-origin:0 50%;">Adviser</div>
<div class="a t" style="left:204.00px;top:361.26px;font-size:4.534883720930233px;line-height:5.44px;color:#2a2a2a;width:32.25px;overflow:hidden;transform:scaleX(0.8);transform-origin:0 50%;">Char</div>
<div class="a t" style="left:163.90px;width:80px;text-align:right;top:361.26px;font-size:4.534883720930233px;line-height:5.44px;color:#2a2a2a;transform:scaleX(0.8);transform-origin:100% 50%;">30</div>
<div class="a t" style="left:229.25px;width:80px;text-align:center;top:361.26px;font-size:4.534883720930233px;line-height:5.44px;color:#333;transform:scaleX(0.8);transform-origin:50% 50%;">✓</div>
<div class="a t" style="left:278.60px;top:361.26px;font-size:4.534883720930233px;line-height:5.44px;color:#2a2a2a;width:40.37499999999999px;overflow:hidden;transform:scaleX(0.8);transform-origin:0 50%;">Customer adviser...</div>
<div class="a" style="left:129.40px;top:374.10px;width:237.10px;height:0.60px;background:#ececec;"></div>
<svg class="a" style="left:140.00px;top:369.40px" width="3" height="3" viewBox="0 0 3 3"><circle cx="1.5" cy="1.5" r="1.15" fill="#c4c4c4" stroke="#9a9a9a" stroke-width="0.4"/></svg>
<div class="a t" style="left:146.80px;top:368.86px;font-size:4.534883720930233px;line-height:5.44px;color:#2a2a2a;width:49.25000000000002px;overflow:hidden;transform:scaleX(0.8);transform-origin:0 50%;">IbanNumber</div>
<div class="a t" style="left:204.00px;top:368.86px;font-size:4.534883720930233px;line-height:5.44px;color:#2a2a2a;width:32.25px;overflow:hidden;transform:scaleX(0.8);transform-origin:0 50%;">Char</div>
<div class="a t" style="left:163.90px;width:80px;text-align:right;top:368.86px;font-size:4.534883720930233px;line-height:5.44px;color:#2a2a2a;transform:scaleX(0.8);transform-origin:100% 50%;">34</div>
<div class="a t" style="left:229.25px;width:80px;text-align:center;top:368.86px;font-size:4.534883720930233px;line-height:5.44px;color:#333;transform:scaleX(0.8);transform-origin:50% 50%;">✓</div>
<div class="a t" style="left:278.60px;top:368.86px;font-size:4.534883720930233px;line-height:5.44px;color:#2a2a2a;width:40.37499999999999px;overflow:hidden;transform:scaleX(0.8);transform-origin:0 50%;">IBAN...</div>
</div>
<div class="a" style="left:124.90px;top:276.30px;width:4.30px;height:96.70px;background:#d8d8d8;"></div>
<div class="a" style="left:129.20px;top:276.30px;width:0.60px;height:97.00px;background:#b8b8b8;"></div>
<div class="a" style="left:399.30px;top:276.30px;width:6.00px;height:97.00px;background:#f0f0f0;"></div>
<svg class="a" style="left:400.8px;top:278.4px" width="3" height="2.4" viewBox="0 0 3 2.4"><path d="M0.3 2L1.5 0.6 2.7 2" fill="none" stroke="#555" stroke-width="0.5"/></svg>
<div class="a" style="left:124.20px;top:373.00px;width:281.80px;height:0.70px;background:#7f9c9c;"></div>
<div class="a" style="left:322.90px;top:17.30px;width:353.40px;height:212.90px;background:#e0e0e0;border:0.7px solid #a0a0a0;box-shadow:0 0 2px rgba(0,0,0,0.15)"></div>
<div class="a" style="left:323.60px;top:18.00px;width:352.00px;height:10.50px;background:#ffffff;"></div>
<svg class="a" style="left:327.90px;top:20.30px" width="2.6" height="4.2" viewBox="0 0 2.6 4.2"><circle cx="1.3" cy="1" r="0.85" fill="#3a98e8"/><path d="M0.1 4.1V2.8Q0.1 1.9 1.3 1.9Q2.5 1.9 2.5 2.8V4.1z" fill="#3a98e8"/></svg>
<div class="a t" style="left:332.50px;top:20.35px;font-size:4.767441860465116px;line-height:5.72px;color:#9c9c9c;transform:scaleX(0.84);transform-origin:0 50%;">Tgt.Account [Target Object]</div>
<svg class="a" style="left:630px;top:19.4px" width="42" height="6" viewBox="0 0 42 6"><path d="M2.8 3.2H7.2" stroke="#b4b4b4" stroke-width="0.5"/><rect x="20.3" y="1.3" width="3.8" height="3.8" fill="none" stroke="#b0b0b0" stroke-width="0.5"/><path d="M36.3 1.2L40.1 5M40.1 1.2L36.3 5" stroke="#b0b0b0" stroke-width="0.5"/></svg>
<div class="a" style="left:323.60px;top:27.80px;width:352.00px;height:8.80px;background:#f0f0f0;"></div>
<div class="a t" style="left:291.50px;width:80px;text-align:center;top:30.96px;font-size:4.534883720930233px;line-height:5.44px;color:#555;transform:scaleX(0.8);transform-origin:50% 50%;">General</div>
<div class="a" style="left:340.00px;top:29.00px;width:13.90px;height:8.20px;background:#ffffff;border:0.7px solid #7f9c9c;border-bottom:none"></div>
<div class="a t" style="left:307.00px;width:80px;text-align:center;top:30.96px;font-size:4.534883720930233px;line-height:5.44px;color:#333;transform:scaleX(0.8);transform-origin:50% 50%;">Fields</div>
<div class="a t" style="left:324.20px;width:80px;text-align:center;top:30.96px;font-size:4.534883720930233px;line-height:5.44px;color:#555;transform:scaleX(0.8);transform-origin:50% 50%;">Condition</div>
<svg class="a" style="left:666.4px;top:30.6px" width="8" height="4" viewBox="0 0 8 4"><path d="M2.6 0.6V3.4L0.6 2z" fill="#6a6a6a"/><path d="M5.2 0.6V3.4L7.2 2z" fill="#6a6a6a"/></svg>
<div class="a" style="left:323.60px;top:36.60px;width:322.40px;height:0.70px;background:#7f9c9c;"></div>
<div class="a" style="left:323.80px;top:36.90px;width:322.20px;height:192.60px;background:#e2e2e2;"></div>
<div class="a" style="left:324.60px;top:36.90px;width:321.40px;height:91.53px;background:#ffffff;"></div>
<div class="a" style="left:646.00px;top:36.90px;width:0.60px;height:91.53px;background:#dedede;"></div>
<div class="a" style="left:324.60px;top:36.90px;width:0.60px;height:91.53px;background:#c0c0c0;"></div>
<div class="a" style="left:333.80px;top:36.90px;width:0.60px;height:91.53px;background:#ececec;"></div>
<div class="a" style="left:340.70px;top:36.90px;width:0.60px;height:91.53px;background:#ececec;"></div>
<div class="a t" style="left:346.60px;top:38.66px;font-size:4.534883720930233px;line-height:5.44px;color:#3c3c3c;transform:scaleX(0.8);transform-origin:0 50%;">Field (type to locate)</div>
<div class="a" style="left:409.30px;top:36.90px;width:0.60px;height:91.53px;background:#ececec;"></div>
<div class="a t" style="left:411.10px;top:38.66px;font-size:4.534883720930233px;line-height:5.44px;color:#3c3c3c;transform:scaleX(0.8);transform-origin:0 50%;">Value</div>
<div class="a" style="left:443.00px;top:36.90px;width:0.60px;height:91.53px;background:#ececec;"></div>
<div class="a t" style="left:444.80px;top:38.66px;font-size:4.534883720930233px;line-height:5.44px;color:#3c3c3c;transform:scaleX(0.8);transform-origin:0 50%;">Content</div>
<div class="a" style="left:603.30px;top:36.90px;width:0.60px;height:91.53px;background:#ececec;"></div>
<div class="a t" style="left:605.10px;top:38.66px;font-size:4.534883720930233px;line-height:5.44px;color:#3c3c3c;transform:scaleX(0.8);transform-origin:0 50%;">Events</div>
<div class="a" style="left:638.50px;top:36.90px;width:0.60px;height:91.53px;background:#ececec;"></div>
<div class="a" style="left:324.60px;top:43.90px;width:321.40px;height:0.60px;background:#dedede;"></div>
<div class="a" style="left:334.40px;top:36.90px;width:6.30px;height:7.00px;background:#c9def5;"></div>
<div class="a" style="left:324.60px;top:51.53px;width:321.40px;height:0.60px;background:#ececec;"></div>
<svg class="a" style="left:328.00px;top:46.71px" width="2.4" height="3.2" viewBox="0 0 2.4 3.2"><path d="M0.3 0.2L2.2 1.6 0.3 3z" fill="#222"/></svg>
<svg class="a" style="left:335.75px;top:46.81px" width="3" height="3" viewBox="0 0 3 3"><circle cx="1.5" cy="1.5" r="1.15" fill="#c4c4c4" stroke="#9a9a9a" stroke-width="0.4"/></svg>
<div class="a t" style="left:346.40px;top:46.27px;font-size:4.534883720930233px;line-height:5.44px;color:#2a2a2a;width:77.87499999999999px;overflow:hidden;transform:scaleX(0.8);transform-origin:0 50%;">BankId : Num(5)</div>
<div class="a t" style="left:410.90px;top:46.27px;font-size:4.534883720930233px;line-height:5.44px;color:#2a2a2a;width:39.374999999999986px;overflow:hidden;transform:scaleX(0.8);transform-origin:0 50%;">Interface</div>
<div class="a t" style="left:444.60px;top:46.27px;font-size:4.534883720930233px;line-height:5.44px;color:#2a2a2a;width:197.62499999999994px;overflow:hidden;transform:scaleX(0.8);transform-origin:0 50%;">BankId</div>
<div class="a" style="left:324.60px;top:59.16px;width:321.40px;height:0.60px;background:#ececec;"></div>
<svg class="a" style="left:335.75px;top:54.45px" width="3" height="3" viewBox="0 0 3 3"><circle cx="1.5" cy="1.5" r="1.15" fill="#c4c4c4" stroke="#9a9a9a" stroke-width="0.4"/></svg>
<div class="a t" style="left:346.40px;top:53.90px;font-size:4.534883720930233px;line-height:5.44px;color:#2a2a2a;width:77.87499999999999px;overflow:hidden;transform:scaleX(0.8);transform-origin:0 50%;">AccountId : Num(15)</div>
<div class="a t" style="left:410.90px;top:53.90px;font-size:4.534883720930233px;line-height:5.44px;color:#2a2a2a;width:39.374999999999986px;overflow:hidden;transform:scaleX(0.8);transform-origin:0 50%;">Identity</div>
<div class="a" style="left:324.60px;top:66.79px;width:321.40px;height:0.60px;background:#ececec;"></div>
<svg class="a" style="left:335.75px;top:62.07px" width="3" height="3" viewBox="0 0 3 3"><circle cx="1.5" cy="1.5" r="1.15" fill="#c4c4c4" stroke="#9a9a9a" stroke-width="0.4"/></svg>
<div class="a t" style="left:346.40px;top:61.53px;font-size:4.534883720930233px;line-height:5.44px;color:#2a2a2a;width:77.87499999999999px;overflow:hidden;transform:scaleX(0.8);transform-origin:0 50%;">ProductId : Num(15)</div>
<div class="a t" style="left:410.90px;top:61.53px;font-size:4.534883720930233px;line-height:5.44px;color:#2a2a2a;width:39.374999999999986px;overflow:hidden;transform:scaleX(0.8);transform-origin:0 50%;">Calculated</div>
<div class="a t" style="left:444.60px;top:61.53px;font-size:4.534883720930233px;line-height:5.44px;color:#2a2a2a;width:197.62499999999994px;overflow:hidden;transform:scaleX(0.8);transform-origin:0 50%;">GetAccountProductId(BankId, ProductCode)</div>
<div class="a" style="left:324.60px;top:74.42px;width:321.40px;height:0.60px;background:#ececec;"></div>
<svg class="a" style="left:335.75px;top:69.70px" width="3" height="3" viewBox="0 0 3 3"><circle cx="1.5" cy="1.5" r="1.15" fill="#c4c4c4" stroke="#9a9a9a" stroke-width="0.4"/></svg>
<div class="a t" style="left:346.40px;top:69.16px;font-size:4.534883720930233px;line-height:5.44px;color:#2a2a2a;width:77.87499999999999px;overflow:hidden;transform:scaleX(0.8);transform-origin:0 50%;">CurrencyId : Num(15)</div>
<div class="a t" style="left:410.90px;top:69.16px;font-size:4.534883720930233px;line-height:5.44px;color:#2a2a2a;width:39.374999999999986px;overflow:hidden;transform:scaleX(0.8);transform-origin:0 50%;">Calculated</div>
<div class="a t" style="left:444.60px;top:69.16px;font-size:4.534883720930233px;line-height:5.44px;color:#2a2a2a;width:197.62499999999994px;overflow:hidden;transform:scaleX(0.8);transform-origin:0 50%;">GetCurrencyId(Currency)</div>
<div class="a t" style="left:604.90px;top:69.16px;font-size:4.534883720930233px;line-height:5.44px;color:#2a2a2a;width:41.25000000000005px;overflow:hidden;transform:scaleX(0.8);transform-origin:0 50%;">I0009</div>
<div class="a" style="left:324.60px;top:82.05px;width:321.40px;height:0.60px;background:#ececec;"></div>
<svg class="a" style="left:335.75px;top:77.33px" width="3" height="3" viewBox="0 0 3 3"><circle cx="1.5" cy="1.5" r="1.15" fill="#c4c4c4" stroke="#9a9a9a" stroke-width="0.4"/></svg>
<div class="a t" style="left:346.40px;top:76.79px;font-size:4.534883720930233px;line-height:5.44px;color:#2a2a2a;width:77.87499999999999px;overflow:hidden;transform:scaleX(0.8);transform-origin:0 50%;">Amount : Num(15,2)</div>
<div class="a t" style="left:410.90px;top:76.79px;font-size:4.534883720930233px;line-height:5.44px;color:#2a2a2a;width:39.374999999999986px;overflow:hidden;transform:scaleX(0.8);transform-origin:0 50%;">Interface</div>
<div class="a t" style="left:444.60px;top:76.79px;font-size:4.534883720930233px;line-height:5.44px;color:#2a2a2a;width:197.62499999999994px;overflow:hidden;transform:scaleX(0.8);transform-origin:0 50%;">Balance</div>
<div class="a" style="left:324.60px;top:89.68px;width:321.40px;height:0.60px;background:#ececec;"></div>
<svg class="a" style="left:335.75px;top:84.97px" width="3" height="3" viewBox="0 0 3 3"><circle cx="1.5" cy="1.5" r="1.15" fill="#c4c4c4" stroke="#9a9a9a" stroke-width="0.4"/></svg>
<div class="a t" style="left:346.40px;top:84.42px;font-size:4.534883720930233px;line-height:5.44px;color:#2a2a2a;width:77.87499999999999px;overflow:hidden;transform:scaleX(0.8);transform-origin:0 50%;">EffectiveDate : Date</div>
<div class="a t" style="left:410.90px;top:84.42px;font-size:4.534883720930233px;line-height:5.44px;color:#2a2a2a;width:39.374999999999986px;overflow:hidden;transform:scaleX(0.8);transform-origin:0 50%;">Constant</div>
<div class="a t" style="left:444.60px;top:84.42px;font-size:4.534883720930233px;line-height:5.44px;color:#2a2a2a;width:197.62499999999994px;overflow:hidden;transform:scaleX(0.8);transform-origin:0 50%;">Run.FirstBankDay</div>
<div class="a" style="left:324.60px;top:97.31px;width:321.40px;height:0.60px;background:#ececec;"></div>
<svg class="a" style="left:335.75px;top:92.59px" width="3" height="3" viewBox="0 0 3 3"><circle cx="1.5" cy="1.5" r="1.15" fill="#c4c4c4" stroke="#9a9a9a" stroke-width="0.4"/></svg>
<div class="a t" style="left:346.40px;top:92.05px;font-size:4.534883720930233px;line-height:5.44px;color:#2a2a2a;width:77.87499999999999px;overflow:hidden;transform:scaleX(0.8);transform-origin:0 50%;">Status : Char(4)</div>
<div class="a t" style="left:410.90px;top:92.05px;font-size:4.534883720930233px;line-height:5.44px;color:#2a2a2a;width:39.374999999999986px;overflow:hidden;transform:scaleX(0.8);transform-origin:0 50%;">Calculated</div>
<div class="a t" style="left:444.60px;top:92.05px;font-size:4.534883720930233px;line-height:5.44px;color:#2a2a2a;width:197.62499999999994px;overflow:hidden;transform:scaleX(0.8);transform-origin:0 50%;">GetAccountStatus(Status)</div>
<div class="a t" style="left:604.90px;top:92.05px;font-size:4.534883720930233px;line-height:5.44px;color:#2a2a2a;width:41.25000000000005px;overflow:hidden;transform:scaleX(0.8);transform-origin:0 50%;">I0010</div>
<div class="a" style="left:324.60px;top:104.94px;width:321.40px;height:0.60px;background:#ececec;"></div>
<svg class="a" style="left:335.75px;top:100.22px" width="3" height="3" viewBox="0 0 3 3"><circle cx="1.5" cy="1.5" r="1.15" fill="#c4c4c4" stroke="#9a9a9a" stroke-width="0.4"/></svg>
<div class="a t" style="left:346.40px;top:99.68px;font-size:4.534883720930233px;line-height:5.44px;color:#2a2a2a;width:77.87499999999999px;overflow:hidden;transform:scaleX(0.8);transform-origin:0 50%;">OrdStatus : Char(1)</div>
<div class="a t" style="left:410.90px;top:99.68px;font-size:4.534883720930233px;line-height:5.44px;color:#2a2a2a;width:39.374999999999986px;overflow:hidden;transform:scaleX(0.8);transform-origin:0 50%;">Literal</div>
<div class="a t" style="left:444.60px;top:99.68px;font-size:4.534883720930233px;line-height:5.44px;color:#2a2a2a;width:197.62499999999994px;overflow:hidden;transform:scaleX(0.8);transform-origin:0 50%;">C</div>
<div class="a" style="left:324.60px;top:112.57px;width:321.40px;height:0.60px;background:#ececec;"></div>
<svg class="a" style="left:335.75px;top:107.85px" width="3" height="3" viewBox="0 0 3 3"><circle cx="1.5" cy="1.5" r="1.15" fill="#c4c4c4" stroke="#9a9a9a" stroke-width="0.4"/></svg>
<div class="a t" style="left:346.40px;top:107.31px;font-size:4.534883720930233px;line-height:5.44px;color:#2a2a2a;width:77.87499999999999px;overflow:hidden;transform:scaleX(0.8);transform-origin:0 50%;">CreatedBy : Char(8)</div>
<div class="a t" style="left:410.90px;top:107.31px;font-size:4.534883720930233px;line-height:5.44px;color:#2a2a2a;width:39.374999999999986px;overflow:hidden;transform:scaleX(0.8);transform-origin:0 50%;">Constant</div>
<div class="a t" style="left:444.60px;top:107.31px;font-size:4.534883720930233px;line-height:5.44px;color:#2a2a2a;width:197.62499999999994px;overflow:hidden;transform:scaleX(0.8);transform-origin:0 50%;">Run.CreatedBy</div>
<div class="a" style="left:324.60px;top:120.20px;width:321.40px;height:0.60px;background:#ececec;"></div>
<svg class="a" style="left:335.75px;top:115.48px" width="3" height="3" viewBox="0 0 3 3"><circle cx="1.5" cy="1.5" r="1.15" fill="#c4c4c4" stroke="#9a9a9a" stroke-width="0.4"/></svg>
<div class="a t" style="left:346.40px;top:114.94px;font-size:4.534883720930233px;line-height:5.44px;color:#2a2a2a;width:77.87499999999999px;overflow:hidden;transform:scaleX(0.8);transform-origin:0 50%;">CreatedTs : Timestamp(6)</div>
<div class="a t" style="left:410.90px;top:114.94px;font-size:4.534883720930233px;line-height:5.44px;color:#2a2a2a;width:39.374999999999986px;overflow:hidden;transform:scaleX(0.8);transform-origin:0 50%;">Calculated</div>
<div class="a t" style="left:444.60px;top:114.94px;font-size:4.534883720930233px;line-height:5.44px;color:#2a2a2a;width:197.62499999999994px;overflow:hidden;transform:scaleX(0.8);transform-origin:0 50%;">GetNewTs(0, Run.TsDate)</div>
<div class="a" style="left:324.60px;top:127.83px;width:321.40px;height:0.60px;background:#ececec;"></div>
<svg class="a" style="left:335.75px;top:123.11px" width="3" height="3" viewBox="0 0 3 3"><circle cx="1.5" cy="1.5" r="1.15" fill="#c4c4c4" stroke="#9a9a9a" stroke-width="0.4"/></svg>
<div class="a t" style="left:346.40px;top:122.57px;font-size:4.534883720930233px;line-height:5.44px;color:#2a2a2a;width:77.87499999999999px;overflow:hidden;transform:scaleX(0.8);transform-origin:0 50%;">SystemId : Char(8)</div>
<div class="a t" style="left:410.90px;top:122.57px;font-size:4.534883720930233px;line-height:5.44px;color:#2a2a2a;width:39.374999999999986px;overflow:hidden;transform:scaleX(0.8);transform-origin:0 50%;">Constant</div>
<div class="a t" style="left:444.60px;top:122.57px;font-size:4.534883720930233px;line-height:5.44px;color:#2a2a2a;width:197.62499999999994px;overflow:hidden;transform:scaleX(0.8);transform-origin:0 50%;">SystemId_Account</div>
<div class="a" style="left:324.60px;top:44.50px;width:9.20px;height:7.63px;background:#c9def5;"></div>
<svg class="a" style="left:327.00px;top:46.70px" width="2.4" height="3.2" viewBox="0 0 2.4 3.2"><path d="M0.3 0.2L2.2 1.6 0.3 3z" fill="#222"/></svg>
<div class="a" style="left:323.80px;top:36.90px;width:0.60px;height:192.60px;background:#b4b4b4;"></div>
<svg class="a" style="left:341.50px;top:46.30px" width="2.4" height="4" viewBox="0 0 2.4 4"><circle cx="1.2" cy="1" r="0.8" fill="none" stroke="#333" stroke-width="0.5"/><path d="M1.2 1.8V3.8M1.2 3H2M1.2 3.6H2" stroke="#333" stroke-width="0.5"/></svg>
<svg class="a" style="left:341.50px;top:53.93px" width="2.4" height="4" viewBox="0 0 2.4 4"><circle cx="1.2" cy="1" r="0.8" fill="none" stroke="#333" stroke-width="0.5"/><path d="M1.2 1.8V3.8M1.2 3H2M1.2 3.6H2" stroke="#333" stroke-width="0.5"/></svg>
<svg class="a" style="left:341.50px;top:84.45px" width="2.4" height="4" viewBox="0 0 2.4 4"><circle cx="1.2" cy="1" r="0.8" fill="none" stroke="#333" stroke-width="0.5"/><path d="M1.2 1.8V3.8M1.2 3H2M1.2 3.6H2" stroke="#333" stroke-width="0.5"/></svg>
<svg class="a" style="left:341.50px;top:114.97px" width="2.4" height="4" viewBox="0 0 2.4 4"><circle cx="1.2" cy="1" r="0.8" fill="none" stroke="#333" stroke-width="0.5"/><path d="M1.2 1.8V3.8M1.2 3H2M1.2 3.6H2" stroke="#333" stroke-width="0.5"/></svg>
<div class="a" style="left:646.00px;top:36.60px;width:29.60px;height:193.00px;background:#e4e4e4;"></div>
<div class="a" style="left:646.00px;top:36.60px;width:0.60px;height:193.00px;background:#c0c0c0;"></div>
<div class="a" style="left:649.00px;top:45.20px;width:24.60px;height:6.60px;background:#d6d6d6;"></div>
<div class="a" style="left:649.00px;top:55.20px;width:24.60px;height:6.60px;background:#d6d6d6;"></div>
<div class="a" style="left:649.00px;top:65.20px;width:24.60px;height:6.60px;background:#d6d6d6;"></div>
<div class="a t" style="left:621.30px;width:80px;text-align:center;top:66.62px;font-size:4.186046511627907px;line-height:5.02px;color:#6a6a6a;transform:scaleX(0.8);transform-origin:50% 50%;">Reset ...</div>
<div class="a" style="left:649.00px;top:75.20px;width:24.60px;height:6.60px;background:#f6f6f6;border:0.5px solid #c4c4c4;"></div>
<div class="a t" style="left:621.30px;width:80px;text-align:center;top:76.62px;font-size:4.186046511627907px;line-height:5.02px;color:#2a2a2a;transform:scaleX(0.8);transform-origin:50% 50%;">References</div>
<div class="a" style="left:649.00px;top:85.20px;width:24.60px;height:6.60px;background:#d6d6d6;"></div>
<div class="a t" style="left:621.30px;width:80px;text-align:center;top:86.62px;font-size:4.186046511627907px;line-height:5.02px;color:#6a6a6a;transform:scaleX(0.8);transform-origin:50% 50%;">Rule ...</div>
<svg class="a" style="left:659.6px;top:46.3px" width="3.4" height="4.4" viewBox="0 0 3.4 4.4"><path d="M1.7 4.2V0.6M0.5 1.8L1.7 0.4 2.9 1.8" fill="none" stroke="#555" stroke-width="0.6"/></svg>
<svg class="a" style="left:659.6px;top:56.3px" width="3.4" height="4.4" viewBox="0 0 3.4 4.4"><path d="M1.7 0.2V3.8M0.5 2.6L1.7 4 2.9 2.6" fill="none" stroke="#555" stroke-width="0.6"/></svg>
<div class="a" style="left:193.30px;top:283.30px;width:364.50px;height:182.10px;background:#f0f0f0;border:0.7px solid #9a9a9a;box-shadow:0 0 2px rgba(0,0,0,0.15)"></div>
<div class="a" style="left:194.00px;top:284.00px;width:363.10px;height:10.20px;background:#ffffff;"></div>
<svg class="a" style="left:196.8px;top:285.8px" width="5" height="5" viewBox="0 0 5 5">
<rect x="0" y="1.2" width="2.4" height="2.2" fill="#e05030"/><rect x="2.2" y="0.2" width="2.6" height="2.6" fill="#f0c020"/>
<rect x="1.6" y="2.6" width="2.6" height="2.2" fill="#3a8ae0"/></svg>
<div class="a t" style="left:203.40px;top:286.65px;font-size:4.767441860465116px;line-height:5.72px;color:#a0a0a0;transform:scaleX(0.86);transform-origin:0 50%;">Valueset list</div>
<div class="a" style="left:194.00px;top:294.20px;width:331.00px;height:160.00px;background:#e2e2e2;"></div>
<div class="a" style="left:194.00px;top:294.20px;width:331.00px;height:160.00px;background:#ffffff;"></div>
<div class="a" style="left:525.00px;top:294.20px;width:0.60px;height:160.00px;background:#dedede;"></div>
<div class="a" style="left:194.00px;top:294.20px;width:0.60px;height:160.00px;background:#c0c0c0;"></div>
<div class="a" style="left:203.00px;top:294.20px;width:0.60px;height:160.00px;background:#ececec;"></div>
<div class="a" style="left:210.50px;top:294.20px;width:0.60px;height:160.00px;background:#ececec;"></div>
<div class="a" style="left:217.20px;top:294.20px;width:0.60px;height:160.00px;background:#ececec;"></div>
<div class="a t" style="left:219.00px;top:296.16px;font-size:4.534883720930233px;line-height:5.44px;color:#3c3c3c;transform:scaleX(0.8);transform-origin:0 50%;">Name</div>
<div class="a" style="left:264.60px;top:294.20px;width:0.60px;height:160.00px;background:#ececec;"></div>
<div class="a" style="left:272.50px;top:294.20px;width:0.60px;height:160.00px;background:#ececec;"></div>
<div class="a t" style="left:244.75px;width:80px;text-align:center;top:296.16px;font-size:4.534883720930233px;line-height:5.44px;color:#3c3c3c;transform:scaleX(0.8);transform-origin:50% 50%;">Columns</div>
<div class="a" style="left:297.00px;top:294.20px;width:0.60px;height:160.00px;background:#ececec;"></div>
<div class="a t" style="left:298.80px;top:296.16px;font-size:4.534883720930233px;line-height:5.44px;color:#3c3c3c;transform:scaleX(0.8);transform-origin:0 50%;">Description</div>
<div class="a" style="left:194.00px;top:301.60px;width:331.00px;height:0.60px;background:#dedede;"></div>
<div class="a" style="left:203.60px;top:294.20px;width:6.90px;height:7.40px;background:#c9def5;"></div>
<div class="a" style="left:203.60px;top:302.20px;width:321.40px;height:7.60px;background:#c3d4e4;"></div>
<div class="a" style="left:194.00px;top:309.20px;width:331.00px;height:0.60px;background:#ececec;"></div>
<svg class="a" style="left:197.30px;top:304.40px" width="2.4" height="3.2" viewBox="0 0 2.4 3.2"><path d="M0.3 0.2L2.2 1.6 0.3 3z" fill="#222"/></svg>
<svg class="a" style="left:205.45px;top:303.90px" width="2.6" height="4.2" viewBox="0 0 2.6 4.2"><circle cx="1.3" cy="1" r="0.85" fill="#3a98e8"/><path d="M0.1 4.1V2.8Q0.1 1.9 1.3 1.9Q2.5 1.9 2.5 2.8V4.1z" fill="#3a98e8"/></svg>
<svg class="a" style="left:212.35px;top:304.50px" width="3" height="3" viewBox="0 0 3 3"><circle cx="1.5" cy="1.5" r="1.15" fill="#c4c4c4" stroke="#9a9a9a" stroke-width="0.4"/></svg>
<div class="a t" style="left:218.80px;top:303.96px;font-size:4.534883720930233px;line-height:5.44px;color:#2a2a2a;width:56.500000000000036px;overflow:hidden;transform:scaleX(0.8);transform-origin:0 50%;">AccountProducts</div>
<svg class="a" style="left:266.95px;top:304.10px" width="3.2" height="3.8" viewBox="0 0 3.2 3.8"><path d="M0.9 0.1h1.4v1.7h0.9L1.6 3.7 0 1.8h0.9z" fill="#1e8ae6"/></svg>
<div class="a t" style="left:244.75px;width:80px;text-align:center;top:303.96px;font-size:4.534883720930233px;line-height:5.44px;color:#2a2a2a;transform:scaleX(0.8);transform-origin:50% 50%;">6</div>
<div class="a t" style="left:298.60px;top:303.96px;font-size:4.534883720930233px;line-height:5.44px;color:#2a2a2a;width:282.25px;overflow:hidden;transform:scaleX(0.8);transform-origin:0 50%;">List of AccountProducts pr. Bank that are valid in the migration</div>
<div class="a" style="left:194.00px;top:316.80px;width:331.00px;height:0.60px;background:#ececec;"></div>
<svg class="a" style="left:205.45px;top:311.50px" width="2.6" height="4.2" viewBox="0 0 2.6 4.2"><circle cx="1.3" cy="1" r="0.85" fill="#3a98e8"/><path d="M0.1 4.1V2.8Q0.1 1.9 1.3 1.9Q2.5 1.9 2.5 2.8V4.1z" fill="#3a98e8"/></svg>
<svg class="a" style="left:212.35px;top:312.10px" width="3" height="3" viewBox="0 0 3 3"><circle cx="1.5" cy="1.5" r="1.15" fill="#c4c4c4" stroke="#9a9a9a" stroke-width="0.4"/></svg>
<div class="a t" style="left:218.80px;top:311.56px;font-size:4.534883720930233px;line-height:5.44px;color:#2a2a2a;width:56.500000000000036px;overflow:hidden;transform:scaleX(0.8);transform-origin:0 50%;">AccountStatus</div>
<div class="a t" style="left:244.75px;width:80px;text-align:center;top:311.56px;font-size:4.534883720930233px;line-height:5.44px;color:#2a2a2a;transform:scaleX(0.8);transform-origin:50% 50%;">2</div>
<div class="a t" style="left:298.60px;top:311.56px;font-size:4.534883720930233px;line-height:5.44px;color:#2a2a2a;width:282.25px;overflow:hidden;transform:scaleX(0.8);transform-origin:0 50%;">List of valid Accountstatus when migrating</div>
<div class="a" style="left:194.00px;top:324.40px;width:331.00px;height:0.60px;background:#ececec;"></div>
<svg class="a" style="left:205.45px;top:319.10px" width="2.6" height="4.2" viewBox="0 0 2.6 4.2"><circle cx="1.3" cy="1" r="0.85" fill="#3a98e8"/><path d="M0.1 4.1V2.8Q0.1 1.9 1.3 1.9Q2.5 1.9 2.5 2.8V4.1z" fill="#3a98e8"/></svg>
<svg class="a" style="left:212.35px;top:319.70px" width="3" height="3" viewBox="0 0 3 3"><circle cx="1.5" cy="1.5" r="1.15" fill="#c4c4c4" stroke="#9a9a9a" stroke-width="0.4"/></svg>
<div class="a t" style="left:218.80px;top:319.16px;font-size:4.534883720930233px;line-height:5.44px;color:#2a2a2a;width:56.500000000000036px;overflow:hidden;transform:scaleX(0.8);transform-origin:0 50%;">AccountTypes</div>
<div class="a t" style="left:244.75px;width:80px;text-align:center;top:319.16px;font-size:4.534883720930233px;line-height:5.44px;color:#2a2a2a;transform:scaleX(0.8);transform-origin:50% 50%;">3</div>
<div class="a t" style="left:298.60px;top:319.16px;font-size:4.534883720930233px;line-height:5.44px;color:#2a2a2a;width:282.25px;overflow:hidden;transform:scaleX(0.8);transform-origin:0 50%;">List of Accounttypes</div>
<div class="a" style="left:194.00px;top:332.00px;width:331.00px;height:0.60px;background:#ececec;"></div>
<svg class="a" style="left:205.45px;top:326.70px" width="2.6" height="4.2" viewBox="0 0 2.6 4.2"><circle cx="1.3" cy="1" r="0.85" fill="#3a98e8"/><path d="M0.1 4.1V2.8Q0.1 1.9 1.3 1.9Q2.5 1.9 2.5 2.8V4.1z" fill="#3a98e8"/></svg>
<svg class="a" style="left:212.35px;top:327.30px" width="3" height="3" viewBox="0 0 3 3"><circle cx="1.5" cy="1.5" r="1.15" fill="#c4c4c4" stroke="#9a9a9a" stroke-width="0.4"/></svg>
<div class="a t" style="left:218.80px;top:326.76px;font-size:4.534883720930233px;line-height:5.44px;color:#2a2a2a;width:56.500000000000036px;overflow:hidden;transform:scaleX(0.8);transform-origin:0 50%;">AddressComponents</div>
<div class="a t" style="left:244.75px;width:80px;text-align:center;top:326.76px;font-size:4.534883720930233px;line-height:5.44px;color:#2a2a2a;transform:scaleX(0.8);transform-origin:50% 50%;">2</div>
<div class="a t" style="left:298.60px;top:326.76px;font-size:4.534883720930233px;line-height:5.44px;color:#2a2a2a;width:282.25px;overflow:hidden;transform:scaleX(0.8);transform-origin:0 50%;">List of valid AddressComponents</div>
<div class="a" style="left:194.00px;top:339.60px;width:331.00px;height:0.60px;background:#ececec;"></div>
<svg class="a" style="left:205.45px;top:334.30px" width="2.6" height="4.2" viewBox="0 0 2.6 4.2"><circle cx="1.3" cy="1" r="0.85" fill="#3a98e8"/><path d="M0.1 4.1V2.8Q0.1 1.9 1.3 1.9Q2.5 1.9 2.5 2.8V4.1z" fill="#3a98e8"/></svg>
<svg class="a" style="left:212.35px;top:334.90px" width="3" height="3" viewBox="0 0 3 3"><circle cx="1.5" cy="1.5" r="1.15" fill="#c4c4c4" stroke="#9a9a9a" stroke-width="0.4"/></svg>
<div class="a t" style="left:218.80px;top:334.36px;font-size:4.534883720930233px;line-height:5.44px;color:#2a2a2a;width:56.500000000000036px;overflow:hidden;transform:scaleX(0.8);transform-origin:0 50%;">AddressTypes</div>
<div class="a t" style="left:244.75px;width:80px;text-align:center;top:334.36px;font-size:4.534883720930233px;line-height:5.44px;color:#2a2a2a;transform:scaleX(0.8);transform-origin:50% 50%;">3</div>
<div class="a t" style="left:298.60px;top:334.36px;font-size:4.534883720930233px;line-height:5.44px;color:#2a2a2a;width:282.25px;overflow:hidden;transform:scaleX(0.8);transform-origin:0 50%;">Valueset with valid physical and logical adress types</div>
<div class="a" style="left:194.00px;top:347.20px;width:331.00px;height:0.60px;background:#ececec;"></div>
<svg class="a" style="left:205.45px;top:341.90px" width="2.6" height="4.2" viewBox="0 0 2.6 4.2"><circle cx="1.3" cy="1" r="0.85" fill="#3a98e8"/><path d="M0.1 4.1V2.8Q0.1 1.9 1.3 1.9Q2.5 1.9 2.5 2.8V4.1z" fill="#3a98e8"/></svg>
<svg class="a" style="left:212.35px;top:342.50px" width="3" height="3" viewBox="0 0 3 3"><circle cx="1.5" cy="1.5" r="1.15" fill="#c4c4c4" stroke="#9a9a9a" stroke-width="0.4"/></svg>
<div class="a t" style="left:218.80px;top:341.96px;font-size:4.534883720930233px;line-height:5.44px;color:#2a2a2a;width:56.500000000000036px;overflow:hidden;transform:scaleX(0.8);transform-origin:0 50%;">BankUnits</div>
<svg class="a" style="left:266.95px;top:342.10px" width="3.2" height="3.8" viewBox="0 0 3.2 3.8"><path d="M0.9 0.1h1.4v1.7h0.9L1.6 3.7 0 1.8h0.9z" fill="#1e8ae6"/></svg>
<div class="a t" style="left:244.75px;width:80px;text-align:center;top:341.96px;font-size:4.534883720930233px;line-height:5.44px;color:#2a2a2a;transform:scaleX(0.8);transform-origin:50% 50%;">5</div>
<div class="a" style="left:194.00px;top:354.80px;width:331.00px;height:0.60px;background:#ececec;"></div>
<svg class="a" style="left:205.55px;top:350.60px" width="2.4" height="2.4" viewBox="0 0 2.4 2.4"><circle cx="1.2" cy="1.2" r="1.05" fill="#2fa443"/></svg>
<svg class="a" style="left:212.35px;top:350.10px" width="3" height="3" viewBox="0 0 3 3"><circle cx="1.5" cy="1.5" r="1.15" fill="#c4c4c4" stroke="#9a9a9a" stroke-width="0.4"/></svg>
<div class="a t" style="left:218.80px;top:349.56px;font-size:4.534883720930233px;line-height:5.44px;color:#2a2a2a;width:56.500000000000036px;overflow:hidden;transform:scaleX(0.8);transform-origin:0 50%;">CardStatus</div>
<div class="a t" style="left:244.75px;width:80px;text-align:center;top:349.56px;font-size:4.534883720930233px;line-height:5.44px;color:#2a2a2a;transform:scaleX(0.8);transform-origin:50% 50%;">3</div>
<div class="a t" style="left:298.60px;top:349.56px;font-size:4.534883720930233px;line-height:5.44px;color:#2a2a2a;width:282.25px;overflow:hidden;transform:scaleX(0.8);transform-origin:0 50%;">List of valid card status</div>
<div class="a" style="left:194.00px;top:362.40px;width:331.00px;height:0.60px;background:#ececec;"></div>
<svg class="a" style="left:205.55px;top:358.20px" width="2.4" height="2.4" viewBox="0 0 2.4 2.4"><circle cx="1.2" cy="1.2" r="1.05" fill="#2fa443"/></svg>
<svg class="a" style="left:212.35px;top:357.70px" width="3" height="3" viewBox="0 0 3 3"><circle cx="1.5" cy="1.5" r="1.15" fill="#c4c4c4" stroke="#9a9a9a" stroke-width="0.4"/></svg>
<div class="a t" style="left:218.80px;top:357.16px;font-size:4.534883720930233px;line-height:5.44px;color:#2a2a2a;width:56.500000000000036px;overflow:hidden;transform:scaleX(0.8);transform-origin:0 50%;">CardTypes</div>
<svg class="a" style="left:266.95px;top:357.30px" width="3.2" height="3.8" viewBox="0 0 3.2 3.8"><path d="M0.9 0.1h1.4v1.7h0.9L1.6 3.7 0 1.8h0.9z" fill="#1e8ae6"/></svg>
<div class="a t" style="left:244.75px;width:80px;text-align:center;top:357.16px;font-size:4.534883720930233px;line-height:5.44px;color:#2a2a2a;transform:scaleX(0.8);transform-origin:50% 50%;">4</div>
<div class="a t" style="left:298.60px;top:357.16px;font-size:4.534883720930233px;line-height:5.44px;color:#2a2a2a;width:282.25px;overflow:hidden;transform:scaleX(0.8);transform-origin:0 50%;">List of Cardtypes per bank</div>
<div class="a" style="left:194.00px;top:370.00px;width:331.00px;height:0.60px;background:#ececec;"></div>
<svg class="a" style="left:205.45px;top:364.70px" width="2.6" height="4.2" viewBox="0 0 2.6 4.2"><circle cx="1.3" cy="1" r="0.85" fill="#3a98e8"/><path d="M0.1 4.1V2.8Q0.1 1.9 1.3 1.9Q2.5 1.9 2.5 2.8V4.1z" fill="#3a98e8"/></svg>
<svg class="a" style="left:212.35px;top:365.30px" width="3" height="3" viewBox="0 0 3 3"><circle cx="1.5" cy="1.5" r="1.15" fill="#c4c4c4" stroke="#9a9a9a" stroke-width="0.4"/></svg>
<div class="a t" style="left:218.80px;top:364.76px;font-size:4.534883720930233px;line-height:5.44px;color:#2a2a2a;width:56.500000000000036px;overflow:hidden;transform:scaleX(0.8);transform-origin:0 50%;">Countries</div>
<svg class="a" style="left:266.95px;top:364.90px" width="3.2" height="3.8" viewBox="0 0 3.2 3.8"><path d="M0.9 0.1h1.4v1.7h0.9L1.6 3.7 0 1.8h0.9z" fill="#1e8ae6"/></svg>
<div class="a t" style="left:244.75px;width:80px;text-align:center;top:364.76px;font-size:4.534883720930233px;line-height:5.44px;color:#2a2a2a;transform:scaleX(0.8);transform-origin:50% 50%;">4</div>
<div class="a t" style="left:298.60px;top:364.76px;font-size:4.534883720930233px;line-height:5.44px;color:#2a2a2a;width:282.25px;overflow:hidden;transform:scaleX(0.8);transform-origin:0 50%;">List of Countries with both 2 and 3-char CountryCode</div>
<div class="a" style="left:194.00px;top:377.60px;width:331.00px;height:0.60px;background:#ececec;"></div>
<svg class="a" style="left:205.45px;top:372.30px" width="2.6" height="4.2" viewBox="0 0 2.6 4.2"><circle cx="1.3" cy="1" r="0.85" fill="#3a98e8"/><path d="M0.1 4.1V2.8Q0.1 1.9 1.3 1.9Q2.5 1.9 2.5 2.8V4.1z" fill="#3a98e8"/></svg>
<svg class="a" style="left:212.35px;top:372.90px" width="3" height="3" viewBox="0 0 3 3"><circle cx="1.5" cy="1.5" r="1.15" fill="#c4c4c4" stroke="#9a9a9a" stroke-width="0.4"/></svg>
<div class="a t" style="left:218.80px;top:372.36px;font-size:4.534883720930233px;line-height:5.44px;color:#2a2a2a;width:56.500000000000036px;overflow:hidden;transform:scaleX(0.8);transform-origin:0 50%;">Currencies</div>
<svg class="a" style="left:266.95px;top:372.50px" width="3.2" height="3.8" viewBox="0 0 3.2 3.8"><path d="M0.9 0.1h1.4v1.7h0.9L1.6 3.7 0 1.8h0.9z" fill="#1e8ae6"/></svg>
<div class="a t" style="left:244.75px;width:80px;text-align:center;top:372.36px;font-size:4.534883720930233px;line-height:5.44px;color:#2a2a2a;transform:scaleX(0.8);transform-origin:50% 50%;">4</div>
<div class="a t" style="left:298.60px;top:372.36px;font-size:4.534883720930233px;line-height:5.44px;color:#2a2a2a;width:282.25px;overflow:hidden;transform:scaleX(0.8);transform-origin:0 50%;">List of Currencies</div>
<div class="a" style="left:194.00px;top:385.20px;width:331.00px;height:0.60px;background:#ececec;"></div>
<svg class="a" style="left:205.45px;top:379.90px" width="2.6" height="4.2" viewBox="0 0 2.6 4.2"><circle cx="1.3" cy="1" r="0.85" fill="#3a98e8"/><path d="M0.1 4.1V2.8Q0.1 1.9 1.3 1.9Q2.5 1.9 2.5 2.8V4.1z" fill="#3a98e8"/></svg>
<svg class="a" style="left:212.35px;top:380.50px" width="3" height="3" viewBox="0 0 3 3"><circle cx="1.5" cy="1.5" r="1.15" fill="#c4c4c4" stroke="#9a9a9a" stroke-width="0.4"/></svg>
<div class="a t" style="left:218.80px;top:379.96px;font-size:4.534883720930233px;line-height:5.44px;color:#2a2a2a;width:56.500000000000036px;overflow:hidden;transform:scaleX(0.8);transform-origin:0 50%;">CustomerIdTypes</div>
<div class="a t" style="left:244.75px;width:80px;text-align:center;top:379.96px;font-size:4.534883720930233px;line-height:5.44px;color:#2a2a2a;transform:scaleX(0.8);transform-origin:50% 50%;">2</div>
<div class="a" style="left:194.00px;top:392.80px;width:331.00px;height:0.60px;background:#ececec;"></div>
<svg class="a" style="left:205.45px;top:387.50px" width="2.6" height="4.2" viewBox="0 0 2.6 4.2"><circle cx="1.3" cy="1" r="0.85" fill="#3a98e8"/><path d="M0.1 4.1V2.8Q0.1 1.9 1.3 1.9Q2.5 1.9 2.5 2.8V4.1z" fill="#3a98e8"/></svg>
<svg class="a" style="left:212.35px;top:388.10px" width="3" height="3" viewBox="0 0 3 3"><circle cx="1.5" cy="1.5" r="1.15" fill="#c4c4c4" stroke="#9a9a9a" stroke-width="0.4"/></svg>
<div class="a t" style="left:218.80px;top:387.56px;font-size:4.534883720930233px;line-height:5.44px;color:#2a2a2a;width:56.500000000000036px;overflow:hidden;transform:scaleX(0.8);transform-origin:0 50%;">CustomerSegments</div>
<svg class="a" style="left:266.95px;top:387.70px" width="3.2" height="3.8" viewBox="0 0 3.2 3.8"><path d="M0.9 0.1h1.4v1.7h0.9L1.6 3.7 0 1.8h0.9z" fill="#1e8ae6"/></svg>
<div class="a t" style="left:244.75px;width:80px;text-align:center;top:387.56px;font-size:4.534883720930233px;line-height:5.44px;color:#2a2a2a;transform:scaleX(0.8);transform-origin:50% 50%;">3</div>
<div class="a" style="left:194.00px;top:400.40px;width:331.00px;height:0.60px;background:#ececec;"></div>
<svg class="a" style="left:205.45px;top:395.10px" width="2.6" height="4.2" viewBox="0 0 2.6 4.2"><circle cx="1.3" cy="1" r="0.85" fill="#3a98e8"/><path d="M0.1 4.1V2.8Q0.1 1.9 1.3 1.9Q2.5 1.9 2.5 2.8V4.1z" fill="#3a98e8"/></svg>
<svg class="a" style="left:212.35px;top:395.70px" width="3" height="3" viewBox="0 0 3 3"><circle cx="1.5" cy="1.5" r="1.15" fill="#c4c4c4" stroke="#9a9a9a" stroke-width="0.4"/></svg>
<div class="a t" style="left:218.80px;top:395.16px;font-size:4.534883720930233px;line-height:5.44px;color:#2a2a2a;width:56.500000000000036px;overflow:hidden;transform:scaleX(0.8);transform-origin:0 50%;">CustomerTypes</div>
<div class="a t" style="left:244.75px;width:80px;text-align:center;top:395.16px;font-size:4.534883720930233px;line-height:5.44px;color:#2a2a2a;transform:scaleX(0.8);transform-origin:50% 50%;">2</div>
<div class="a" style="left:194.00px;top:408.00px;width:331.00px;height:0.60px;background:#ececec;"></div>
<svg class="a" style="left:205.45px;top:402.70px" width="2.6" height="4.2" viewBox="0 0 2.6 4.2"><circle cx="1.3" cy="1" r="0.85" fill="#3a98e8"/><path d="M0.1 4.1V2.8Q0.1 1.9 1.3 1.9Q2.5 1.9 2.5 2.8V4.1z" fill="#3a98e8"/></svg>
<svg class="a" style="left:212.35px;top:403.30px" width="3" height="3" viewBox="0 0 3 3"><circle cx="1.5" cy="1.5" r="1.15" fill="#c4c4c4" stroke="#9a9a9a" stroke-width="0.4"/></svg>
<div class="a t" style="left:218.80px;top:402.76px;font-size:4.534883720930233px;line-height:5.44px;color:#2a2a2a;width:56.500000000000036px;overflow:hidden;transform:scaleX(0.8);transform-origin:0 50%;">Employees</div>
<svg class="a" style="left:266.95px;top:402.90px" width="3.2" height="3.8" viewBox="0 0 3.2 3.8"><path d="M0.9 0.1h1.4v1.7h0.9L1.6 3.7 0 1.8h0.9z" fill="#1e8ae6"/></svg>
<div class="a t" style="left:244.75px;width:80px;text-align:center;top:402.76px;font-size:4.534883720930233px;line-height:5.44px;color:#2a2a2a;transform:scaleX(0.8);transform-origin:50% 50%;">4</div>
<div class="a t" style="left:298.60px;top:402.76px;font-size:4.534883720930233px;line-height:5.44px;color:#2a2a2a;width:282.25px;overflow:hidden;transform:scaleX(0.8);transform-origin:0 50%;">Employees registered in target</div>
<div class="a" style="left:194.00px;top:415.60px;width:331.00px;height:0.60px;background:#ececec;"></div>
<svg class="a" style="left:205.45px;top:410.30px" width="2.6" height="4.2" viewBox="0 0 2.6 4.2"><circle cx="1.3" cy="1" r="0.85" fill="#3a98e8"/><path d="M0.1 4.1V2.8Q0.1 1.9 1.3 1.9Q2.5 1.9 2.5 2.8V4.1z" fill="#3a98e8"/></svg>
<svg class="a" style="left:212.35px;top:410.90px" width="3" height="3" viewBox="0 0 3 3"><circle cx="1.5" cy="1.5" r="1.15" fill="#c4c4c4" stroke="#9a9a9a" stroke-width="0.4"/></svg>
<div class="a t" style="left:218.80px;top:410.36px;font-size:4.534883720930233px;line-height:5.44px;color:#2a2a2a;width:56.500000000000036px;overflow:hidden;transform:scaleX(0.8);transform-origin:0 50%;">Frequencies</div>
<div class="a t" style="left:244.75px;width:80px;text-align:center;top:410.36px;font-size:4.534883720930233px;line-height:5.44px;color:#2a2a2a;transform:scaleX(0.8);transform-origin:50% 50%;">3</div>
<div class="a t" style="left:298.60px;top:410.36px;font-size:4.534883720930233px;line-height:5.44px;color:#2a2a2a;width:282.25px;overflow:hidden;transform:scaleX(0.8);transform-origin:0 50%;">List of possible frequencies</div>
<div class="a" style="left:194.00px;top:423.20px;width:331.00px;height:0.60px;background:#ececec;"></div>
<svg class="a" style="left:205.45px;top:417.90px" width="2.6" height="4.2" viewBox="0 0 2.6 4.2"><circle cx="1.3" cy="1" r="0.85" fill="#3a98e8"/><path d="M0.1 4.1V2.8Q0.1 1.9 1.3 1.9Q2.5 1.9 2.5 2.8V4.1z" fill="#3a98e8"/></svg>
<svg class="a" style="left:212.35px;top:418.50px" width="3" height="3" viewBox="0 0 3 3"><circle cx="1.5" cy="1.5" r="1.15" fill="#c4c4c4" stroke="#9a9a9a" stroke-width="0.4"/></svg>
<div class="a t" style="left:218.80px;top:417.96px;font-size:4.534883720930233px;line-height:5.44px;color:#2a2a2a;width:56.500000000000036px;overflow:hidden;transform:scaleX(0.8);transform-origin:0 50%;">Industries</div>
<svg class="a" style="left:266.95px;top:418.10px" width="3.2" height="3.8" viewBox="0 0 3.2 3.8"><path d="M0.9 0.1h1.4v1.7h0.9L1.6 3.7 0 1.8h0.9z" fill="#1e8ae6"/></svg>
<div class="a t" style="left:244.75px;width:80px;text-align:center;top:417.96px;font-size:4.534883720930233px;line-height:5.44px;color:#2a2a2a;transform:scaleX(0.8);transform-origin:50% 50%;">3</div>
<div class="a" style="left:194.00px;top:430.80px;width:331.00px;height:0.60px;background:#ececec;"></div>
<svg class="a" style="left:205.45px;top:425.50px" width="2.6" height="4.2" viewBox="0 0 2.6 4.2"><circle cx="1.3" cy="1" r="0.85" fill="#3a98e8"/><path d="M0.1 4.1V2.8Q0.1 1.9 1.3 1.9Q2.5 1.9 2.5 2.8V4.1z" fill="#3a98e8"/></svg>
<svg class="a" style="left:212.35px;top:426.10px" width="3" height="3" viewBox="0 0 3 3"><circle cx="1.5" cy="1.5" r="1.15" fill="#c4c4c4" stroke="#9a9a9a" stroke-width="0.4"/></svg>
<div class="a t" style="left:218.80px;top:425.56px;font-size:4.534883720930233px;line-height:5.44px;color:#2a2a2a;width:56.500000000000036px;overflow:hidden;transform:scaleX(0.8);transform-origin:0 50%;">InterestRateTypes</div>
<svg class="a" style="left:266.95px;top:425.70px" width="3.2" height="3.8" viewBox="0 0 3.2 3.8"><path d="M0.9 0.1h1.4v1.7h0.9L1.6 3.7 0 1.8h0.9z" fill="#1e8ae6"/></svg>
<div class="a t" style="left:244.75px;width:80px;text-align:center;top:425.56px;font-size:4.534883720930233px;line-height:5.44px;color:#2a2a2a;transform:scaleX(0.8);transform-origin:50% 50%;">7</div>
<div class="a t" style="left:298.60px;top:425.56px;font-size:4.534883720930233px;line-height:5.44px;color:#2a2a2a;width:282.25px;overflow:hidden;transform:scaleX(0.8);transform-origin:0 50%;">List of valid interest rate types</div>
<div class="a" style="left:194.00px;top:438.40px;width:331.00px;height:0.60px;background:#ececec;"></div>
<svg class="a" style="left:205.45px;top:433.10px" width="2.6" height="4.2" viewBox="0 0 2.6 4.2"><circle cx="1.3" cy="1" r="0.85" fill="#3a98e8"/><path d="M0.1 4.1V2.8Q0.1 1.9 1.3 1.9Q2.5 1.9 2.5 2.8V4.1z" fill="#3a98e8"/></svg>
<svg class="a" style="left:212.35px;top:433.70px" width="3" height="3" viewBox="0 0 3 3"><circle cx="1.5" cy="1.5" r="1.15" fill="#c4c4c4" stroke="#9a9a9a" stroke-width="0.4"/></svg>
<div class="a t" style="left:218.80px;top:433.16px;font-size:4.534883720930233px;line-height:5.44px;color:#2a2a2a;width:56.500000000000036px;overflow:hidden;transform:scaleX(0.8);transform-origin:0 50%;">InvolvedPartRelationTypes</div>
<div class="a t" style="left:244.75px;width:80px;text-align:center;top:433.16px;font-size:4.534883720930233px;line-height:5.44px;color:#2a2a2a;transform:scaleX(0.8);transform-origin:50% 50%;">5</div>
<div class="a t" style="left:298.60px;top:433.16px;font-size:4.534883720930233px;line-height:5.44px;color:#2a2a2a;width:282.25px;overflow:hidden;transform:scaleX(0.8);transform-origin:0 50%;">Valid relations between an Involved part and a Business Object. Eg. Bank Unit to a Customer, PrimaryOwner to an Account...</div>
<div class="a" style="left:194.00px;top:446.00px;width:331.00px;height:0.60px;background:#ececec;"></div>
<svg class="a" style="left:205.45px;top:440.70px" width="2.6" height="4.2" viewBox="0 0 2.6 4.2"><circle cx="1.3" cy="1" r="0.85" fill="#3a98e8"/><path d="M0.1 4.1V2.8Q0.1 1.9 1.3 1.9Q2.5 1.9 2.5 2.8V4.1z" fill="#3a98e8"/></svg>
<svg class="a" style="left:212.35px;top:441.30px" width="3" height="3" viewBox="0 0 3 3"><circle cx="1.5" cy="1.5" r="1.15" fill="#c4c4c4" stroke="#9a9a9a" stroke-width="0.4"/></svg>
<div class="a t" style="left:218.80px;top:440.76px;font-size:4.534883720930233px;line-height:5.44px;color:#2a2a2a;width:56.500000000000036px;overflow:hidden;transform:scaleX(0.8);transform-origin:0 50%;">StatementTypes</div>
<div class="a t" style="left:244.75px;width:80px;text-align:center;top:440.76px;font-size:4.534883720930233px;line-height:5.44px;color:#2a2a2a;transform:scaleX(0.8);transform-origin:50% 50%;">2</div>
<div class="a t" style="left:298.60px;top:440.76px;font-size:4.534883720930233px;line-height:5.44px;color:#2a2a2a;width:282.25px;overflow:hidden;transform:scaleX(0.8);transform-origin:0 50%;">List of valid StatementTypes</div>
<div class="a" style="left:194.00px;top:453.60px;width:331.00px;height:0.60px;background:#ececec;"></div>
<svg class="a" style="left:205.45px;top:448.30px" width="2.6" height="4.2" viewBox="0 0 2.6 4.2"><circle cx="1.3" cy="1" r="0.85" fill="#3a98e8"/><path d="M0.1 4.1V2.8Q0.1 1.9 1.3 1.9Q2.5 1.9 2.5 2.8V4.1z" fill="#3a98e8"/></svg>
<svg class="a" style="left:212.35px;top:448.90px" width="3" height="3" viewBox="0 0 3 3"><circle cx="1.5" cy="1.5" r="1.15" fill="#c4c4c4" stroke="#9a9a9a" stroke-width="0.4"/></svg>
<div class="a t" style="left:218.80px;top:448.36px;font-size:4.534883720930233px;line-height:5.44px;color:#2a2a2a;width:56.500000000000036px;overflow:hidden;transform:scaleX(0.8);transform-origin:0 50%;">TsIntervals</div>
<div class="a t" style="left:244.75px;width:80px;text-align:center;top:448.36px;font-size:4.534883720930233px;line-height:5.44px;color:#2a2a2a;transform:scaleX(0.8);transform-origin:50% 50%;">4</div>
<div class="a" style="left:194.00px;top:302.20px;width:9.00px;height:7.60px;background:#c9def5;"></div>
<svg class="a" style="left:197.00px;top:304.40px" width="2.4" height="3.2" viewBox="0 0 2.4 3.2"><path d="M0.3 0.2L2.2 1.6 0.3 3z" fill="#222"/></svg>
<svg class="a" style="left:196.4px;top:295.8px" width="4.4" height="4.6" viewBox="0 0 4.4 4.6"><rect x="0.4" y="1" width="3.6" height="3.2" fill="none" stroke="#333" stroke-width="0.6"/><path d="M1.2 1V0.3H3.2V1" stroke="#1e88e5" stroke-width="0.6" fill="none"/></svg>
<div class="a" style="left:194.00px;top:294.20px;width:0.80px;height:160.00px;background:#8a8a8a;"></div>
<div class="a" style="left:194.00px;top:293.90px;width:331.60px;height:0.70px;background:#a0a0a0;"></div>
<div class="a" style="left:525.00px;top:294.20px;width:0.80px;height:160.00px;background:#8a8a8a;"></div>
<div class="a" style="left:525.80px;top:294.20px;width:31.30px;height:170.50px;background:#f0f0f0;"></div>
<div class="a" style="left:194.00px;top:454.20px;width:331.00px;height:10.50px;background:#e3e3e3;"></div>
<div class="a" style="left:525.00px;top:294.20px;width:0.80px;height:160.00px;background:#8a8a8a;"></div>
<div class="a" style="left:461.80px;top:177.50px;width:277.50px;height:170.00px;background:#f0f0f0;border:0.7px solid #a0a0a0;box-shadow:0 0 2px rgba(0,0,0,0.15)"></div>
<div class="a" style="left:462.50px;top:178.20px;width:276.10px;height:11.00px;background:#ffffff;"></div>
<svg class="a" style="left:465px;top:180.6px" width="5" height="5" viewBox="0 0 5 5">
<rect x="0" y="1.2" width="2.4" height="2.2" fill="#e05030"/><rect x="2.2" y="0.2" width="2.6" height="2.6" fill="#f0c020"/>
<rect x="1.6" y="2.6" width="2.6" height="2.2" fill="#3a8ae0"/></svg>
<div class="a t" style="left:471.20px;top:180.65px;font-size:5.0px;line-height:6.00px;color:#505050;transform:scaleX(0.84);transform-origin:0 50%;">Event list</div>
<svg class="a" style="left:694px;top:180.4px" width="42" height="6" viewBox="0 0 42 6"><path d="M2.8 3.1H7.2" stroke="#444" stroke-width="0.5"/><rect x="19" y="1.1" width="3.8" height="3.8" fill="none" stroke="#444" stroke-width="0.5"/><path d="M35.2 1.1L39 4.9M39 1.1L35.2 4.9" stroke="#444" stroke-width="0.5"/></svg>
<div class="a" style="left:462.50px;top:189.00px;width:238.10px;height:158.00px;background:#ffffff;"></div>
<div class="a" style="left:462.50px;top:189.00px;width:238.10px;height:158.00px;background:#ffffff;"></div>
<div class="a" style="left:700.60px;top:189.00px;width:0.60px;height:158.00px;background:#dedede;"></div>
<div class="a" style="left:462.50px;top:189.00px;width:0.60px;height:158.00px;background:#c0c0c0;"></div>
<div class="a" style="left:471.60px;top:189.00px;width:0.60px;height:158.00px;background:#ececec;"></div>
<div class="a" style="left:479.00px;top:189.00px;width:0.60px;height:158.00px;background:#ececec;"></div>
<div class="a" style="left:486.00px;top:189.00px;width:0.60px;height:158.00px;background:#ececec;"></div>
<div class="a t" style="left:487.80px;top:190.76px;font-size:4.534883720930233px;line-height:5.44px;color:#3c3c3c;transform:scaleX(0.8);transform-origin:0 50%;">Event</div>
<div class="a" style="left:507.00px;top:189.00px;width:0.60px;height:158.00px;background:#ececec;"></div>
<div class="a t" style="left:508.80px;top:190.76px;font-size:4.534883720930233px;line-height:5.44px;color:#3c3c3c;transform:scaleX(0.8);transform-origin:0 50%;">Text</div>
<div class="a" style="left:568.70px;top:189.00px;width:0.60px;height:158.00px;background:#ececec;"></div>
<div class="a" style="left:575.70px;top:189.00px;width:0.60px;height:158.00px;background:#ececec;"></div>
<div class="a t" style="left:577.50px;top:190.76px;font-size:4.534883720930233px;line-height:5.44px;color:#3c3c3c;transform:scaleX(0.8);transform-origin:0 50%;">Impact</div>
<div class="a" style="left:597.60px;top:189.00px;width:0.60px;height:158.00px;background:#ececec;"></div>
<div class="a" style="left:605.50px;top:189.00px;width:0.60px;height:158.00px;background:#ececec;"></div>
<div class="a t" style="left:607.30px;top:190.76px;font-size:4.534883720930233px;line-height:5.44px;color:#3c3c3c;transform:scaleX(0.8);transform-origin:0 50%;">Disposition</div>
<div class="a" style="left:633.70px;top:189.00px;width:0.60px;height:158.00px;background:#ececec;"></div>
<div class="a t" style="left:635.50px;top:190.76px;font-size:4.534883720930233px;line-height:5.44px;color:#3c3c3c;transform:scaleX(0.8);transform-origin:0 50%;">Receiver</div>
<div class="a" style="left:659.20px;top:189.00px;width:0.60px;height:158.00px;background:#ececec;"></div>
<div class="a t" style="left:661.00px;top:190.76px;font-size:4.534883720930233px;line-height:5.44px;color:#3c3c3c;transform:scaleX(0.8);transform-origin:0 50%;">Guidance</div>
<div class="a" style="left:680.70px;top:189.00px;width:0.60px;height:158.00px;background:#ececec;"></div>
<div class="a t" style="left:682.50px;top:190.76px;font-size:4.534883720930233px;line-height:5.44px;color:#3c3c3c;transform:scaleX(0.8);transform-origin:0 50%;">Instruction</div>
<div class="a" style="left:462.50px;top:196.00px;width:238.10px;height:0.60px;background:#dedede;"></div>
<div class="a" style="left:507.60px;top:189.00px;width:61.10px;height:7.00px;background:#c9def5;"></div>
<div class="a t" style="left:508.80px;top:190.76px;font-size:4.534883720930233px;line-height:5.44px;color:#3c3c3c;transform:scaleX(0.8);transform-origin:0 50%;">Text</div>
<div class="a" style="left:462.50px;top:203.60px;width:238.10px;height:0.60px;background:#ececec;"></div>
<svg class="a" style="left:474.00px;top:198.30px" width="2.6" height="4.2" viewBox="0 0 2.6 4.2"><circle cx="1.3" cy="1" r="0.85" fill="#3a98e8"/><path d="M0.1 4.1V2.8Q0.1 1.9 1.3 1.9Q2.5 1.9 2.5 2.8V4.1z" fill="#3a98e8"/></svg>
<svg class="a" style="left:481.00px;top:198.90px" width="3" height="3" viewBox="0 0 3 3"><circle cx="1.5" cy="1.5" r="1.15" fill="#c4c4c4" stroke="#9a9a9a" stroke-width="0.4"/></svg>
<div class="a t" style="left:487.60px;top:198.36px;font-size:4.534883720930233px;line-height:5.44px;color:#2a2a2a;width:23.5px;overflow:hidden;transform:scaleX(0.8);transform-origin:0 50%;">I0001</div>
<div class="a t" style="left:508.60px;top:198.36px;font-size:4.534883720930233px;line-height:5.44px;color:#2a2a2a;width:74.37500000000004px;overflow:hidden;transform:scaleX(0.8);transform-origin:0 50%;">Segment ({1}) does not exist in Ba...</div>
<svg class="a" style="left:570.20px;top:198.40px" width="4" height="4" viewBox="0 0 4 4"><circle cx="2" cy="2" r="1.9" fill="#c62f2b"/><path d="M1.3 1.3L2.7 2.7M2.7 1.3L1.3 2.7" stroke="#f0b0b0" stroke-width="0.35"/></svg>
<div class="a t" style="left:577.30px;top:198.36px;font-size:4.534883720930233px;line-height:5.44px;color:#2a2a2a;width:24.62499999999997px;overflow:hidden;transform:scaleX(0.8);transform-origin:0 50%;">Critical</div>
<div class="a t" style="left:607.10px;top:198.36px;font-size:4.534883720930233px;line-height:5.44px;color:#2a2a2a;width:32.50000000000006px;overflow:hidden;transform:scaleX(0.8);transform-origin:0 50%;">Retain</div>
<div class="a t" style="left:635.30px;top:198.36px;font-size:4.534883720930233px;line-height:5.44px;color:#2a2a2a;width:29.125px;overflow:hidden;transform:scaleX(0.8);transform-origin:0 50%;">Target</div>
<div class="a" style="left:462.50px;top:211.20px;width:238.10px;height:0.60px;background:#ececec;"></div>
<svg class="a" style="left:474.00px;top:205.90px" width="2.6" height="4.2" viewBox="0 0 2.6 4.2"><circle cx="1.3" cy="1" r="0.85" fill="#3a98e8"/><path d="M0.1 4.1V2.8Q0.1 1.9 1.3 1.9Q2.5 1.9 2.5 2.8V4.1z" fill="#3a98e8"/></svg>
<svg class="a" style="left:481.00px;top:206.50px" width="3" height="3" viewBox="0 0 3 3"><circle cx="1.5" cy="1.5" r="1.15" fill="#c4c4c4" stroke="#9a9a9a" stroke-width="0.4"/></svg>
<div class="a t" style="left:487.60px;top:205.96px;font-size:4.534883720930233px;line-height:5.44px;color:#2a2a2a;width:23.5px;overflow:hidden;transform:scaleX(0.8);transform-origin:0 50%;">I0002</div>
<div class="a t" style="left:508.60px;top:205.96px;font-size:4.534883720930233px;line-height:5.44px;color:#2a2a2a;width:74.37500000000004px;overflow:hidden;transform:scaleX(0.8);transform-origin:0 50%;">Bank Unit with number {0} does n...</div>
<svg class="a" style="left:570.20px;top:206.00px" width="4" height="4" viewBox="0 0 4 4"><circle cx="2" cy="2" r="1.9" fill="#c62f2b"/><path d="M1.3 1.3L2.7 2.7M2.7 1.3L1.3 2.7" stroke="#f0b0b0" stroke-width="0.35"/></svg>
<div class="a t" style="left:577.30px;top:205.96px;font-size:4.534883720930233px;line-height:5.44px;color:#2a2a2a;width:24.62499999999997px;overflow:hidden;transform:scaleX(0.8);transform-origin:0 50%;">Critical</div>
<svg class="a" style="left:599.55px;top:205.80px" width="4" height="4.4" viewBox="0 0 4 4.4"><path d="M2 0.2L3.8 0.9V2.2Q3.8 3.6 2 4.3Q0.2 3.6 0.2 2.2V0.9z" fill="#505050"/><path d="M2 1.1L2.9 1.5V2.3Q2.9 3 2 3.3Q1.1 3 1.1 2.3V1.5z" fill="#e8e8e8"/></svg>
<div class="a t" style="left:607.10px;top:205.96px;font-size:4.534883720930233px;line-height:5.44px;color:#2a2a2a;width:32.50000000000006px;overflow:hidden;transform:scaleX(0.8);transform-origin:0 50%;">Full discard</div>
<div class="a t" style="left:635.30px;top:205.96px;font-size:4.534883720930233px;line-height:5.44px;color:#2a2a2a;width:29.125px;overflow:hidden;transform:scaleX(0.8);transform-origin:0 50%;">Target</div>
<div class="a" style="left:462.50px;top:218.80px;width:238.10px;height:0.60px;background:#ececec;"></div>
<svg class="a" style="left:474.00px;top:213.50px" width="2.6" height="4.2" viewBox="0 0 2.6 4.2"><circle cx="1.3" cy="1" r="0.85" fill="#3a98e8"/><path d="M0.1 4.1V2.8Q0.1 1.9 1.3 1.9Q2.5 1.9 2.5 2.8V4.1z" fill="#3a98e8"/></svg>
<svg class="a" style="left:481.00px;top:214.10px" width="3" height="3" viewBox="0 0 3 3"><circle cx="1.5" cy="1.5" r="1.15" fill="#c4c4c4" stroke="#9a9a9a" stroke-width="0.4"/></svg>
<div class="a t" style="left:487.60px;top:213.56px;font-size:4.534883720930233px;line-height:5.44px;color:#2a2a2a;width:23.5px;overflow:hidden;transform:scaleX(0.8);transform-origin:0 50%;">I0003</div>
<div class="a t" style="left:508.60px;top:213.56px;font-size:4.534883720930233px;line-height:5.44px;color:#2a2a2a;width:74.37500000000004px;overflow:hidden;transform:scaleX(0.8);transform-origin:0 50%;">Customertype ({0}) is not valid. Val...</div>
<svg class="a" style="left:570.20px;top:213.60px" width="4" height="4" viewBox="0 0 4 4"><circle cx="2" cy="2" r="1.9" fill="#c62f2b"/><path d="M1.3 1.3L2.7 2.7M2.7 1.3L1.3 2.7" stroke="#f0b0b0" stroke-width="0.35"/></svg>
<div class="a t" style="left:577.30px;top:213.56px;font-size:4.534883720930233px;line-height:5.44px;color:#2a2a2a;width:24.62499999999997px;overflow:hidden;transform:scaleX(0.8);transform-origin:0 50%;">Critical</div>
<svg class="a" style="left:599.55px;top:213.40px" width="4" height="4.4" viewBox="0 0 4 4.4"><path d="M2 0.2L3.8 0.9V2.2Q3.8 3.6 2 4.3Q0.2 3.6 0.2 2.2V0.9z" fill="#505050"/><path d="M2 1.1L2.9 1.5V2.3Q2.9 3 2 3.3Q1.1 3 1.1 2.3V1.5z" fill="#e8e8e8"/></svg>
<div class="a t" style="left:607.10px;top:213.56px;font-size:4.534883720930233px;line-height:5.44px;color:#2a2a2a;width:32.50000000000006px;overflow:hidden;transform:scaleX(0.8);transform-origin:0 50%;">Full discard</div>
<div class="a t" style="left:635.30px;top:213.56px;font-size:4.534883720930233px;line-height:5.44px;color:#2a2a2a;width:29.125px;overflow:hidden;transform:scaleX(0.8);transform-origin:0 50%;">Migration</div>
<div class="a" style="left:462.50px;top:226.40px;width:238.10px;height:0.60px;background:#ececec;"></div>
<svg class="a" style="left:474.00px;top:221.10px" width="2.6" height="4.2" viewBox="0 0 2.6 4.2"><circle cx="1.3" cy="1" r="0.85" fill="#3a98e8"/><path d="M0.1 4.1V2.8Q0.1 1.9 1.3 1.9Q2.5 1.9 2.5 2.8V4.1z" fill="#3a98e8"/></svg>
<svg class="a" style="left:481.00px;top:221.70px" width="3" height="3" viewBox="0 0 3 3"><circle cx="1.5" cy="1.5" r="1.15" fill="#c4c4c4" stroke="#9a9a9a" stroke-width="0.4"/></svg>
<div class="a t" style="left:487.60px;top:221.16px;font-size:4.534883720930233px;line-height:5.44px;color:#2a2a2a;width:23.5px;overflow:hidden;transform:scaleX(0.8);transform-origin:0 50%;">I0004</div>
<div class="a t" style="left:508.60px;top:221.16px;font-size:4.534883720930233px;line-height:5.44px;color:#2a2a2a;width:74.37500000000004px;overflow:hidden;transform:scaleX(0.8);transform-origin:0 50%;">Unknown industrycode {0}</div>
<svg class="a" style="left:570.20px;top:221.20px" width="4" height="4" viewBox="0 0 4 4"><circle cx="2" cy="2" r="1.9" fill="#c62f2b"/><path d="M1.3 1.3L2.7 2.7M2.7 1.3L1.3 2.7" stroke="#f0b0b0" stroke-width="0.35"/></svg>
<div class="a t" style="left:577.30px;top:221.16px;font-size:4.534883720930233px;line-height:5.44px;color:#2a2a2a;width:24.62499999999997px;overflow:hidden;transform:scaleX(0.8);transform-origin:0 50%;">Critical</div>
<div class="a t" style="left:607.10px;top:221.16px;font-size:4.534883720930233px;line-height:5.44px;color:#2a2a2a;width:32.50000000000006px;overflow:hidden;transform:scaleX(0.8);transform-origin:0 50%;">Retain</div>
<div class="a t" style="left:635.30px;top:221.16px;font-size:4.534883720930233px;line-height:5.44px;color:#2a2a2a;width:29.125px;overflow:hidden;transform:scaleX(0.8);transform-origin:0 50%;">Source</div>
<div class="a" style="left:472.20px;top:227.00px;width:228.40px;height:7.60px;background:#c3d4e4;"></div>
<div class="a" style="left:462.50px;top:234.00px;width:238.10px;height:0.60px;background:#ececec;"></div>
<svg class="a" style="left:465.85px;top:229.20px" width="2.4" height="3.2" viewBox="0 0 2.4 3.2"><path d="M0.3 0.2L2.2 1.6 0.3 3z" fill="#222"/></svg>
<svg class="a" style="left:474.00px;top:228.70px" width="2.6" height="4.2" viewBox="0 0 2.6 4.2"><circle cx="1.3" cy="1" r="0.85" fill="#3a98e8"/><path d="M0.1 4.1V2.8Q0.1 1.9 1.3 1.9Q2.5 1.9 2.5 2.8V4.1z" fill="#3a98e8"/></svg>
<svg class="a" style="left:481.00px;top:229.30px" width="3" height="3" viewBox="0 0 3 3"><circle cx="1.5" cy="1.5" r="1.15" fill="#c4c4c4" stroke="#9a9a9a" stroke-width="0.4"/></svg>
<div class="a t" style="left:487.60px;top:228.76px;font-size:4.534883720930233px;line-height:5.44px;color:#2a2a2a;width:23.5px;overflow:hidden;transform:scaleX(0.8);transform-origin:0 50%;">I0005</div>
<div class="a t" style="left:508.60px;top:228.76px;font-size:4.534883720930233px;line-height:5.44px;color:#2a2a2a;width:74.37500000000004px;overflow:hidden;transform:scaleX(0.8);transform-origin:0 50%;">CustomerIdtype ({0}) is not valid. ...</div>
<svg class="a" style="left:570.20px;top:228.80px" width="4" height="4" viewBox="0 0 4 4"><circle cx="2" cy="2" r="1.9" fill="#c62f2b"/><path d="M1.3 1.3L2.7 2.7M2.7 1.3L1.3 2.7" stroke="#f0b0b0" stroke-width="0.35"/></svg>
<div class="a t" style="left:577.30px;top:228.76px;font-size:4.534883720930233px;line-height:5.44px;color:#2a2a2a;width:24.62499999999997px;overflow:hidden;transform:scaleX(0.8);transform-origin:0 50%;">Critical</div>
<svg class="a" style="left:599.55px;top:228.60px" width="4" height="4.4" viewBox="0 0 4 4.4"><path d="M2 0.2L3.8 0.9V2.2Q3.8 3.6 2 4.3Q0.2 3.6 0.2 2.2V0.9z" fill="#505050"/><path d="M2 1.1L2.9 1.5V2.3Q2.9 3 2 3.3Q1.1 3 1.1 2.3V1.5z" fill="#e8e8e8"/></svg>
<div class="a t" style="left:607.10px;top:228.76px;font-size:4.534883720930233px;line-height:5.44px;color:#2a2a2a;width:32.50000000000006px;overflow:hidden;transform:scaleX(0.8);transform-origin:0 50%;">Full discard</div>
<div class="a t" style="left:635.30px;top:228.76px;font-size:4.534883720930233px;line-height:5.44px;color:#2a2a2a;width:29.125px;overflow:hidden;transform:scaleX(0.8);transform-origin:0 50%;">Migration</div>
<div class="a" style="left:462.50px;top:241.60px;width:238.10px;height:0.60px;background:#ececec;"></div>
<svg class="a" style="left:474.00px;top:236.30px" width="2.6" height="4.2" viewBox="0 0 2.6 4.2"><circle cx="1.3" cy="1" r="0.85" fill="#3a98e8"/><path d="M0.1 4.1V2.8Q0.1 1.9 1.3 1.9Q2.5 1.9 2.5 2.8V4.1z" fill="#3a98e8"/></svg>
<svg class="a" style="left:481.00px;top:236.90px" width="3" height="3" viewBox="0 0 3 3"><circle cx="1.5" cy="1.5" r="1.15" fill="#c4c4c4" stroke="#9a9a9a" stroke-width="0.4"/></svg>
<div class="a t" style="left:487.60px;top:236.36px;font-size:4.534883720930233px;line-height:5.44px;color:#2a2a2a;width:23.5px;overflow:hidden;transform:scaleX(0.8);transform-origin:0 50%;">I0006</div>
<div class="a t" style="left:508.60px;top:236.36px;font-size:4.534883720930233px;line-height:5.44px;color:#2a2a2a;width:74.37500000000004px;overflow:hidden;transform:scaleX(0.8);transform-origin:0 50%;">Unknown AdressTypeCode {0}</div>
<svg class="a" style="left:570.20px;top:236.40px" width="4" height="4" viewBox="0 0 4 4"><circle cx="2" cy="2" r="1.9" fill="#c62f2b"/><path d="M1.3 1.3L2.7 2.7M2.7 1.3L1.3 2.7" stroke="#f0b0b0" stroke-width="0.35"/></svg>
<div class="a t" style="left:577.30px;top:236.36px;font-size:4.534883720930233px;line-height:5.44px;color:#2a2a2a;width:24.62499999999997px;overflow:hidden;transform:scaleX(0.8);transform-origin:0 50%;">Critical</div>
<svg class="a" style="left:599.55px;top:236.20px" width="4" height="4.4" viewBox="0 0 4 4.4"><path d="M2 0.4L3.6 1V2.2Q3.6 3.4 2 4.1Q0.4 3.4 0.4 2.2V1z" fill="#fff" stroke="#6a6a6a" stroke-width="0.4"/><circle cx="2" cy="2.2" r="0.75" fill="none" stroke="#7a7a7a" stroke-width="0.35"/></svg>
<div class="a t" style="left:607.10px;top:236.36px;font-size:4.534883720930233px;line-height:5.44px;color:#2a2a2a;width:32.50000000000006px;overflow:hidden;transform:scaleX(0.8);transform-origin:0 50%;">Partial discard</div>
<div class="a t" style="left:635.30px;top:236.36px;font-size:4.534883720930233px;line-height:5.44px;color:#2a2a2a;width:29.125px;overflow:hidden;transform:scaleX(0.8);transform-origin:0 50%;">Migration</div>
<div class="a" style="left:462.50px;top:249.20px;width:238.10px;height:0.60px;background:#ececec;"></div>
<svg class="a" style="left:474.00px;top:243.90px" width="2.6" height="4.2" viewBox="0 0 2.6 4.2"><circle cx="1.3" cy="1" r="0.85" fill="#3a98e8"/><path d="M0.1 4.1V2.8Q0.1 1.9 1.3 1.9Q2.5 1.9 2.5 2.8V4.1z" fill="#3a98e8"/></svg>
<svg class="a" style="left:481.00px;top:244.50px" width="3" height="3" viewBox="0 0 3 3"><circle cx="1.5" cy="1.5" r="1.15" fill="#c4c4c4" stroke="#9a9a9a" stroke-width="0.4"/></svg>
<div class="a t" style="left:487.60px;top:243.96px;font-size:4.534883720930233px;line-height:5.44px;color:#2a2a2a;width:23.5px;overflow:hidden;transform:scaleX(0.8);transform-origin:0 50%;">I0007</div>
<div class="a t" style="left:508.60px;top:243.96px;font-size:4.534883720930233px;line-height:5.44px;color:#2a2a2a;width:74.37500000000004px;overflow:hidden;transform:scaleX(0.8);transform-origin:0 50%;">CountryCode ({0}) unknown or mis...</div>
<svg class="a" style="left:570.20px;top:244.00px" width="4" height="4" viewBox="0 0 4 4"><circle cx="2" cy="2" r="1.9" fill="#c62f2b"/><path d="M1.3 1.3L2.7 2.7M2.7 1.3L1.3 2.7" stroke="#f0b0b0" stroke-width="0.35"/></svg>
<div class="a t" style="left:577.30px;top:243.96px;font-size:4.534883720930233px;line-height:5.44px;color:#2a2a2a;width:24.62499999999997px;overflow:hidden;transform:scaleX(0.8);transform-origin:0 50%;">Critical</div>
<div class="a t" style="left:607.10px;top:243.96px;font-size:4.534883720930233px;line-height:5.44px;color:#2a2a2a;width:32.50000000000006px;overflow:hidden;transform:scaleX(0.8);transform-origin:0 50%;">Retain</div>
<div class="a t" style="left:635.30px;top:243.96px;font-size:4.534883720930233px;line-height:5.44px;color:#2a2a2a;width:29.125px;overflow:hidden;transform:scaleX(0.8);transform-origin:0 50%;">Migration</div>
<div class="a" style="left:462.50px;top:256.80px;width:238.10px;height:0.60px;background:#ececec;"></div>
<svg class="a" style="left:474.00px;top:251.50px" width="2.6" height="4.2" viewBox="0 0 2.6 4.2"><circle cx="1.3" cy="1" r="0.85" fill="#3a98e8"/><path d="M0.1 4.1V2.8Q0.1 1.9 1.3 1.9Q2.5 1.9 2.5 2.8V4.1z" fill="#3a98e8"/></svg>
<svg class="a" style="left:481.00px;top:252.10px" width="3" height="3" viewBox="0 0 3 3"><circle cx="1.5" cy="1.5" r="1.15" fill="#c4c4c4" stroke="#9a9a9a" stroke-width="0.4"/></svg>
<div class="a t" style="left:487.60px;top:251.56px;font-size:4.534883720930233px;line-height:5.44px;color:#2a2a2a;width:23.5px;overflow:hidden;transform:scaleX(0.8);transform-origin:0 50%;">I0008</div>
<div class="a t" style="left:508.60px;top:251.56px;font-size:4.534883720930233px;line-height:5.44px;color:#2a2a2a;width:74.37500000000004px;overflow:hidden;transform:scaleX(0.8);transform-origin:0 50%;">AddressComponentNumber ({0}) u...</div>
<svg class="a" style="left:570.20px;top:251.60px" width="4" height="4" viewBox="0 0 4 4"><circle cx="2" cy="2" r="1.9" fill="#c62f2b"/><path d="M1.3 1.3L2.7 2.7M2.7 1.3L1.3 2.7" stroke="#f0b0b0" stroke-width="0.35"/></svg>
<div class="a t" style="left:577.30px;top:251.56px;font-size:4.534883720930233px;line-height:5.44px;color:#2a2a2a;width:24.62499999999997px;overflow:hidden;transform:scaleX(0.8);transform-origin:0 50%;">Critical</div>
<svg class="a" style="left:599.55px;top:251.40px" width="4" height="4.4" viewBox="0 0 4 4.4"><path d="M2 0.4L3.6 1V2.2Q3.6 3.4 2 4.1Q0.4 3.4 0.4 2.2V1z" fill="#fff" stroke="#6a6a6a" stroke-width="0.4"/><circle cx="2" cy="2.2" r="0.75" fill="none" stroke="#7a7a7a" stroke-width="0.35"/></svg>
<div class="a t" style="left:607.10px;top:251.56px;font-size:4.534883720930233px;line-height:5.44px;color:#2a2a2a;width:32.50000000000006px;overflow:hidden;transform:scaleX(0.8);transform-origin:0 50%;">Partial discard</div>
<div class="a t" style="left:635.30px;top:251.56px;font-size:4.534883720930233px;line-height:5.44px;color:#2a2a2a;width:29.125px;overflow:hidden;transform:scaleX(0.8);transform-origin:0 50%;">Migration</div>
<div class="a" style="left:462.50px;top:264.40px;width:238.10px;height:0.60px;background:#ececec;"></div>
<svg class="a" style="left:474.00px;top:259.10px" width="2.6" height="4.2" viewBox="0 0 2.6 4.2"><circle cx="1.3" cy="1" r="0.85" fill="#3a98e8"/><path d="M0.1 4.1V2.8Q0.1 1.9 1.3 1.9Q2.5 1.9 2.5 2.8V4.1z" fill="#3a98e8"/></svg>
<svg class="a" style="left:481.00px;top:259.70px" width="3" height="3" viewBox="0 0 3 3"><circle cx="1.5" cy="1.5" r="1.15" fill="#c4c4c4" stroke="#9a9a9a" stroke-width="0.4"/></svg>
<div class="a t" style="left:487.60px;top:259.16px;font-size:4.534883720930233px;line-height:5.44px;color:#2a2a2a;width:23.5px;overflow:hidden;transform:scaleX(0.8);transform-origin:0 50%;">I0009</div>
<div class="a t" style="left:508.60px;top:259.16px;font-size:4.534883720930233px;line-height:5.44px;color:#2a2a2a;width:74.37500000000004px;overflow:hidden;transform:scaleX(0.8);transform-origin:0 50%;">CurrencyCode ({0}) unknown or mi...</div>
<svg class="a" style="left:570.20px;top:259.20px" width="4" height="4" viewBox="0 0 4 4"><circle cx="2" cy="2" r="1.9" fill="#c62f2b"/><path d="M1.3 1.3L2.7 2.7M2.7 1.3L1.3 2.7" stroke="#f0b0b0" stroke-width="0.35"/></svg>
<div class="a t" style="left:577.30px;top:259.16px;font-size:4.534883720930233px;line-height:5.44px;color:#2a2a2a;width:24.62499999999997px;overflow:hidden;transform:scaleX(0.8);transform-origin:0 50%;">Critical</div>
<svg class="a" style="left:599.55px;top:259.00px" width="4" height="4.4" viewBox="0 0 4 4.4"><path d="M2 0.2L3.8 0.9V2.2Q3.8 3.6 2 4.3Q0.2 3.6 0.2 2.2V0.9z" fill="#505050"/><path d="M2 1.1L2.9 1.5V2.3Q2.9 3 2 3.3Q1.1 3 1.1 2.3V1.5z" fill="#e8e8e8"/></svg>
<div class="a t" style="left:607.10px;top:259.16px;font-size:4.534883720930233px;line-height:5.44px;color:#2a2a2a;width:32.50000000000006px;overflow:hidden;transform:scaleX(0.8);transform-origin:0 50%;">Full discard</div>
<div class="a t" style="left:635.30px;top:259.16px;font-size:4.534883720930233px;line-height:5.44px;color:#2a2a2a;width:29.125px;overflow:hidden;transform:scaleX(0.8);transform-origin:0 50%;">Migration</div>
<div class="a" style="left:462.50px;top:272.00px;width:238.10px;height:0.60px;background:#ececec;"></div>
<svg class="a" style="left:474.00px;top:266.70px" width="2.6" height="4.2" viewBox="0 0 2.6 4.2"><circle cx="1.3" cy="1" r="0.85" fill="#3a98e8"/><path d="M0.1 4.1V2.8Q0.1 1.9 1.3 1.9Q2.5 1.9 2.5 2.8V4.1z" fill="#3a98e8"/></svg>
<svg class="a" style="left:481.00px;top:267.30px" width="3" height="3" viewBox="0 0 3 3"><circle cx="1.5" cy="1.5" r="1.15" fill="#c4c4c4" stroke="#9a9a9a" stroke-width="0.4"/></svg>
<div class="a t" style="left:487.60px;top:266.76px;font-size:4.534883720930233px;line-height:5.44px;color:#2a2a2a;width:23.5px;overflow:hidden;transform:scaleX(0.8);transform-origin:0 50%;">I0010</div>
<div class="a t" style="left:508.60px;top:266.76px;font-size:4.534883720930233px;line-height:5.44px;color:#2a2a2a;width:74.37500000000004px;overflow:hidden;transform:scaleX(0.8);transform-origin:0 50%;">AccountStatus ({0}) is not valid in ...</div>
<svg class="a" style="left:570.20px;top:266.80px" width="4" height="4" viewBox="0 0 4 4"><circle cx="2" cy="2" r="1.9" fill="#c62f2b"/><path d="M1.3 1.3L2.7 2.7M2.7 1.3L1.3 2.7" stroke="#f0b0b0" stroke-width="0.35"/></svg>
<div class="a t" style="left:577.30px;top:266.76px;font-size:4.534883720930233px;line-height:5.44px;color:#2a2a2a;width:24.62499999999997px;overflow:hidden;transform:scaleX(0.8);transform-origin:0 50%;">Critical</div>
<svg class="a" style="left:599.55px;top:266.60px" width="4" height="4.4" viewBox="0 0 4 4.4"><path d="M2 0.2L3.8 0.9V2.2Q3.8 3.6 2 4.3Q0.2 3.6 0.2 2.2V0.9z" fill="#505050"/><path d="M2 1.1L2.9 1.5V2.3Q2.9 3 2 3.3Q1.1 3 1.1 2.3V1.5z" fill="#e8e8e8"/></svg>
<div class="a t" style="left:607.10px;top:266.76px;font-size:4.534883720930233px;line-height:5.44px;color:#2a2a2a;width:32.50000000000006px;overflow:hidden;transform:scaleX(0.8);transform-origin:0 50%;">Full discard</div>
<div class="a t" style="left:635.30px;top:266.76px;font-size:4.534883720930233px;line-height:5.44px;color:#2a2a2a;width:29.125px;overflow:hidden;transform:scaleX(0.8);transform-origin:0 50%;">Migration</div>
<div class="a" style="left:462.50px;top:279.60px;width:238.10px;height:0.60px;background:#ececec;"></div>
<svg class="a" style="left:474.00px;top:274.30px" width="2.6" height="4.2" viewBox="0 0 2.6 4.2"><circle cx="1.3" cy="1" r="0.85" fill="#3a98e8"/><path d="M0.1 4.1V2.8Q0.1 1.9 1.3 1.9Q2.5 1.9 2.5 2.8V4.1z" fill="#3a98e8"/></svg>
<svg class="a" style="left:481.00px;top:274.90px" width="3" height="3" viewBox="0 0 3 3"><circle cx="1.5" cy="1.5" r="1.15" fill="#c4c4c4" stroke="#9a9a9a" stroke-width="0.4"/></svg>
<div class="a t" style="left:487.60px;top:274.36px;font-size:4.534883720930233px;line-height:5.44px;color:#2a2a2a;width:23.5px;overflow:hidden;transform:scaleX(0.8);transform-origin:0 50%;">I0011</div>
<div class="a t" style="left:508.60px;top:274.36px;font-size:4.534883720930233px;line-height:5.44px;color:#2a2a2a;width:74.37500000000004px;overflow:hidden;transform:scaleX(0.8);transform-origin:0 50%;">Customer ({0}) does not exist or a...</div>
<svg class="a" style="left:570.20px;top:274.40px" width="4" height="4" viewBox="0 0 4 4"><circle cx="2" cy="2" r="1.9" fill="#c62f2b"/><path d="M1.3 1.3L2.7 2.7M2.7 1.3L1.3 2.7" stroke="#f0b0b0" stroke-width="0.35"/></svg>
<div class="a t" style="left:577.30px;top:274.36px;font-size:4.534883720930233px;line-height:5.44px;color:#2a2a2a;width:24.62499999999997px;overflow:hidden;transform:scaleX(0.8);transform-origin:0 50%;">Critical</div>
<svg class="a" style="left:599.55px;top:274.20px" width="4" height="4.4" viewBox="0 0 4 4.4"><path d="M2 0.2L3.8 0.9V2.2Q3.8 3.6 2 4.3Q0.2 3.6 0.2 2.2V0.9z" fill="#505050"/><path d="M2 1.1L2.9 1.5V2.3Q2.9 3 2 3.3Q1.1 3 1.1 2.3V1.5z" fill="#e8e8e8"/></svg>
<div class="a t" style="left:607.10px;top:274.36px;font-size:4.534883720930233px;line-height:5.44px;color:#2a2a2a;width:32.50000000000006px;overflow:hidden;transform:scaleX(0.8);transform-origin:0 50%;">Full discard</div>
<div class="a t" style="left:635.30px;top:274.36px;font-size:4.534883720930233px;line-height:5.44px;color:#2a2a2a;width:29.125px;overflow:hidden;transform:scaleX(0.8);transform-origin:0 50%;">Migration</div>
<div class="a" style="left:462.50px;top:287.20px;width:238.10px;height:0.60px;background:#ececec;"></div>
<svg class="a" style="left:474.00px;top:281.90px" width="2.6" height="4.2" viewBox="0 0 2.6 4.2"><circle cx="1.3" cy="1" r="0.85" fill="#3a98e8"/><path d="M0.1 4.1V2.8Q0.1 1.9 1.3 1.9Q2.5 1.9 2.5 2.8V4.1z" fill="#3a98e8"/></svg>
<svg class="a" style="left:481.00px;top:282.50px" width="3" height="3" viewBox="0 0 3 3"><circle cx="1.5" cy="1.5" r="1.15" fill="#c4c4c4" stroke="#9a9a9a" stroke-width="0.4"/></svg>
<div class="a t" style="left:487.60px;top:281.96px;font-size:4.534883720930233px;line-height:5.44px;color:#2a2a2a;width:23.5px;overflow:hidden;transform:scaleX(0.8);transform-origin:0 50%;">I0012</div>
<div class="a t" style="left:508.60px;top:281.96px;font-size:4.534883720930233px;line-height:5.44px;color:#2a2a2a;width:74.37500000000004px;overflow:hidden;transform:scaleX(0.8);transform-origin:0 50%;">Employee ({0}) does not exist in T...</div>
<svg class="a" style="left:570.20px;top:282.00px" width="4" height="4" viewBox="0 0 4 4"><circle cx="2" cy="2" r="1.9" fill="#f28a1a"/><circle cx="2" cy="2" r="0.7" fill="#fbd8a8"/></svg>
<div class="a t" style="left:577.30px;top:281.96px;font-size:4.534883720930233px;line-height:5.44px;color:#2a2a2a;width:24.62499999999997px;overflow:hidden;transform:scaleX(0.8);transform-origin:0 50%;">Advisory</div>
<div class="a t" style="left:607.10px;top:281.96px;font-size:4.534883720930233px;line-height:5.44px;color:#2a2a2a;width:32.50000000000006px;overflow:hidden;transform:scaleX(0.8);transform-origin:0 50%;">Retain</div>
<div class="a t" style="left:635.30px;top:281.96px;font-size:4.534883720930233px;line-height:5.44px;color:#2a2a2a;width:29.125px;overflow:hidden;transform:scaleX(0.8);transform-origin:0 50%;">Migration</div>
<div class="a" style="left:462.50px;top:294.80px;width:238.10px;height:0.60px;background:#ececec;"></div>
<svg class="a" style="left:474.00px;top:289.50px" width="2.6" height="4.2" viewBox="0 0 2.6 4.2"><circle cx="1.3" cy="1" r="0.85" fill="#3a98e8"/><path d="M0.1 4.1V2.8Q0.1 1.9 1.3 1.9Q2.5 1.9 2.5 2.8V4.1z" fill="#3a98e8"/></svg>
<svg class="a" style="left:481.00px;top:290.10px" width="3" height="3" viewBox="0 0 3 3"><circle cx="1.5" cy="1.5" r="1.15" fill="#c4c4c4" stroke="#9a9a9a" stroke-width="0.4"/></svg>
<div class="a t" style="left:487.60px;top:289.56px;font-size:4.534883720930233px;line-height:5.44px;color:#2a2a2a;width:23.5px;overflow:hidden;transform:scaleX(0.8);transform-origin:0 50%;">I0013</div>
<div class="a t" style="left:508.60px;top:289.56px;font-size:4.534883720930233px;line-height:5.44px;color:#2a2a2a;width:74.37500000000004px;overflow:hidden;transform:scaleX(0.8);transform-origin:0 50%;">Child Business Object ({0}) is requi...</div>
<svg class="a" style="left:570.20px;top:289.60px" width="4" height="4" viewBox="0 0 4 4"><circle cx="2" cy="2" r="1.9" fill="#c62f2b"/><path d="M1.3 1.3L2.7 2.7M2.7 1.3L1.3 2.7" stroke="#f0b0b0" stroke-width="0.35"/></svg>
<div class="a t" style="left:577.30px;top:289.56px;font-size:4.534883720930233px;line-height:5.44px;color:#2a2a2a;width:24.62499999999997px;overflow:hidden;transform:scaleX(0.8);transform-origin:0 50%;">Critical</div>
<svg class="a" style="left:599.55px;top:289.40px" width="4" height="4.4" viewBox="0 0 4 4.4"><path d="M2 0.2L3.8 0.9V2.2Q3.8 3.6 2 4.3Q0.2 3.6 0.2 2.2V0.9z" fill="#505050"/><path d="M2 1.1L2.9 1.5V2.3Q2.9 3 2 3.3Q1.1 3 1.1 2.3V1.5z" fill="#e8e8e8"/></svg>
<div class="a t" style="left:607.10px;top:289.56px;font-size:4.534883720930233px;line-height:5.44px;color:#2a2a2a;width:32.50000000000006px;overflow:hidden;transform:scaleX(0.8);transform-origin:0 50%;">Full discard</div>
<div class="a t" style="left:635.30px;top:289.56px;font-size:4.534883720930233px;line-height:5.44px;color:#2a2a2a;width:29.125px;overflow:hidden;transform:scaleX(0.8);transform-origin:0 50%;">Migration</div>
<div class="a" style="left:462.50px;top:302.40px;width:238.10px;height:0.60px;background:#ececec;"></div>
<svg class="a" style="left:474.00px;top:297.10px" width="2.6" height="4.2" viewBox="0 0 2.6 4.2"><circle cx="1.3" cy="1" r="0.85" fill="#3a98e8"/><path d="M0.1 4.1V2.8Q0.1 1.9 1.3 1.9Q2.5 1.9 2.5 2.8V4.1z" fill="#3a98e8"/></svg>
<svg class="a" style="left:481.00px;top:297.70px" width="3" height="3" viewBox="0 0 3 3"><circle cx="1.5" cy="1.5" r="1.15" fill="#c4c4c4" stroke="#9a9a9a" stroke-width="0.4"/></svg>
<div class="a t" style="left:487.60px;top:297.16px;font-size:4.534883720930233px;line-height:5.44px;color:#2a2a2a;width:23.5px;overflow:hidden;transform:scaleX(0.8);transform-origin:0 50%;">I0014</div>
<div class="a t" style="left:508.60px;top:297.16px;font-size:4.534883720930233px;line-height:5.44px;color:#2a2a2a;width:74.37500000000004px;overflow:hidden;transform:scaleX(0.8);transform-origin:0 50%;">Child Business Object ({0}) is not ...</div>
<svg class="a" style="left:570.20px;top:297.20px" width="4" height="4" viewBox="0 0 4 4"><circle cx="2" cy="2" r="1.9" fill="#c62f2b"/><path d="M1.3 1.3L2.7 2.7M2.7 1.3L1.3 2.7" stroke="#f0b0b0" stroke-width="0.35"/></svg>
<div class="a t" style="left:577.30px;top:297.16px;font-size:4.534883720930233px;line-height:5.44px;color:#2a2a2a;width:24.62499999999997px;overflow:hidden;transform:scaleX(0.8);transform-origin:0 50%;">Critical</div>
<svg class="a" style="left:599.55px;top:297.00px" width="4" height="4.4" viewBox="0 0 4 4.4"><path d="M2 0.2L3.8 0.9V2.2Q3.8 3.6 2 4.3Q0.2 3.6 0.2 2.2V0.9z" fill="#505050"/><path d="M2 1.1L2.9 1.5V2.3Q2.9 3 2 3.3Q1.1 3 1.1 2.3V1.5z" fill="#e8e8e8"/></svg>
<div class="a t" style="left:607.10px;top:297.16px;font-size:4.534883720930233px;line-height:5.44px;color:#2a2a2a;width:32.50000000000006px;overflow:hidden;transform:scaleX(0.8);transform-origin:0 50%;">Full discard</div>
<div class="a t" style="left:635.30px;top:297.16px;font-size:4.534883720930233px;line-height:5.44px;color:#2a2a2a;width:29.125px;overflow:hidden;transform:scaleX(0.8);transform-origin:0 50%;">Migration</div>
<div class="a" style="left:462.50px;top:310.00px;width:238.10px;height:0.60px;background:#ececec;"></div>
<svg class="a" style="left:474.00px;top:304.70px" width="2.6" height="4.2" viewBox="0 0 2.6 4.2"><circle cx="1.3" cy="1" r="0.85" fill="#3a98e8"/><path d="M0.1 4.1V2.8Q0.1 1.9 1.3 1.9Q2.5 1.9 2.5 2.8V4.1z" fill="#3a98e8"/></svg>
<svg class="a" style="left:481.00px;top:305.30px" width="3" height="3" viewBox="0 0 3 3"><circle cx="1.5" cy="1.5" r="1.15" fill="#c4c4c4" stroke="#9a9a9a" stroke-width="0.4"/></svg>
<div class="a t" style="left:487.60px;top:304.76px;font-size:4.534883720930233px;line-height:5.44px;color:#2a2a2a;width:23.5px;overflow:hidden;transform:scaleX(0.8);transform-origin:0 50%;">I0015</div>
<div class="a t" style="left:508.60px;top:304.76px;font-size:4.534883720930233px;line-height:5.44px;color:#2a2a2a;width:74.37500000000004px;overflow:hidden;transform:scaleX(0.8);transform-origin:0 50%;">Combination of AccountType ({0})...</div>
<svg class="a" style="left:570.20px;top:304.80px" width="4" height="4" viewBox="0 0 4 4"><circle cx="2" cy="2" r="1.9" fill="#c62f2b"/><path d="M1.3 1.3L2.7 2.7M2.7 1.3L1.3 2.7" stroke="#f0b0b0" stroke-width="0.35"/></svg>
<div class="a t" style="left:577.30px;top:304.76px;font-size:4.534883720930233px;line-height:5.44px;color:#2a2a2a;width:24.62499999999997px;overflow:hidden;transform:scaleX(0.8);transform-origin:0 50%;">Critical</div>
<svg class="a" style="left:599.55px;top:304.60px" width="4" height="4.4" viewBox="0 0 4 4.4"><path d="M2 0.2L3.8 0.9V2.2Q3.8 3.6 2 4.3Q0.2 3.6 0.2 2.2V0.9z" fill="#505050"/><path d="M2 1.1L2.9 1.5V2.3Q2.9 3 2 3.3Q1.1 3 1.1 2.3V1.5z" fill="#e8e8e8"/></svg>
<div class="a t" style="left:607.10px;top:304.76px;font-size:4.534883720930233px;line-height:5.44px;color:#2a2a2a;width:32.50000000000006px;overflow:hidden;transform:scaleX(0.8);transform-origin:0 50%;">Full discard</div>
<div class="a t" style="left:635.30px;top:304.76px;font-size:4.534883720930233px;line-height:5.44px;color:#2a2a2a;width:29.125px;overflow:hidden;transform:scaleX(0.8);transform-origin:0 50%;">Migration</div>
<div class="a" style="left:462.50px;top:317.60px;width:238.10px;height:0.60px;background:#ececec;"></div>
<svg class="a" style="left:474.00px;top:312.30px" width="2.6" height="4.2" viewBox="0 0 2.6 4.2"><circle cx="1.3" cy="1" r="0.85" fill="#3a98e8"/><path d="M0.1 4.1V2.8Q0.1 1.9 1.3 1.9Q2.5 1.9 2.5 2.8V4.1z" fill="#3a98e8"/></svg>
<svg class="a" style="left:481.00px;top:312.90px" width="3" height="3" viewBox="0 0 3 3"><circle cx="1.5" cy="1.5" r="1.15" fill="#c4c4c4" stroke="#9a9a9a" stroke-width="0.4"/></svg>
<div class="a t" style="left:487.60px;top:312.36px;font-size:4.534883720930233px;line-height:5.44px;color:#2a2a2a;width:23.5px;overflow:hidden;transform:scaleX(0.8);transform-origin:0 50%;">I0016</div>
<div class="a t" style="left:508.60px;top:312.36px;font-size:4.534883720930233px;line-height:5.44px;color:#2a2a2a;width:74.37500000000004px;overflow:hidden;transform:scaleX(0.8);transform-origin:0 50%;">Address ({0}) is missing on Custom...</div>
<svg class="a" style="left:570.20px;top:312.40px" width="4" height="4" viewBox="0 0 4 4"><circle cx="2" cy="2" r="1.9" fill="#c62f2b"/><path d="M1.3 1.3L2.7 2.7M2.7 1.3L1.3 2.7" stroke="#f0b0b0" stroke-width="0.35"/></svg>
<div class="a t" style="left:577.30px;top:312.36px;font-size:4.534883720930233px;line-height:5.44px;color:#2a2a2a;width:24.62499999999997px;overflow:hidden;transform:scaleX(0.8);transform-origin:0 50%;">Critical</div>
<svg class="a" style="left:599.55px;top:312.20px" width="4" height="4.4" viewBox="0 0 4 4.4"><path d="M2 0.4L3.6 1V2.2Q3.6 3.4 2 4.1Q0.4 3.4 0.4 2.2V1z" fill="#fff" stroke="#6a6a6a" stroke-width="0.4"/><circle cx="2" cy="2.2" r="0.75" fill="none" stroke="#7a7a7a" stroke-width="0.35"/></svg>
<div class="a t" style="left:607.10px;top:312.36px;font-size:4.534883720930233px;line-height:5.44px;color:#2a2a2a;width:32.50000000000006px;overflow:hidden;transform:scaleX(0.8);transform-origin:0 50%;">Partial discard</div>
<div class="a t" style="left:635.30px;top:312.36px;font-size:4.534883720930233px;line-height:5.44px;color:#2a2a2a;width:29.125px;overflow:hidden;transform:scaleX(0.8);transform-origin:0 50%;">Migration</div>
<div class="a" style="left:462.50px;top:325.20px;width:238.10px;height:0.60px;background:#ececec;"></div>
<svg class="a" style="left:474.00px;top:319.90px" width="2.6" height="4.2" viewBox="0 0 2.6 4.2"><circle cx="1.3" cy="1" r="0.85" fill="#3a98e8"/><path d="M0.1 4.1V2.8Q0.1 1.9 1.3 1.9Q2.5 1.9 2.5 2.8V4.1z" fill="#3a98e8"/></svg>
<svg class="a" style="left:481.00px;top:320.50px" width="3" height="3" viewBox="0 0 3 3"><circle cx="1.5" cy="1.5" r="1.15" fill="#c4c4c4" stroke="#9a9a9a" stroke-width="0.4"/></svg>
<div class="a t" style="left:487.60px;top:319.96px;font-size:4.534883720930233px;line-height:5.44px;color:#2a2a2a;width:23.5px;overflow:hidden;transform:scaleX(0.8);transform-origin:0 50%;">I0017</div>
<div class="a t" style="left:508.60px;top:319.96px;font-size:4.534883720930233px;line-height:5.44px;color:#2a2a2a;width:74.37500000000004px;overflow:hidden;transform:scaleX(0.8);transform-origin:0 50%;">Frequency ({0}) is unknown</div>
<svg class="a" style="left:570.20px;top:320.00px" width="4" height="4" viewBox="0 0 4 4"><circle cx="2" cy="2" r="1.9" fill="#c62f2b"/><path d="M1.3 1.3L2.7 2.7M2.7 1.3L1.3 2.7" stroke="#f0b0b0" stroke-width="0.35"/></svg>
<div class="a t" style="left:577.30px;top:319.96px;font-size:4.534883720930233px;line-height:5.44px;color:#2a2a2a;width:24.62499999999997px;overflow:hidden;transform:scaleX(0.8);transform-origin:0 50%;">Critical</div>
<svg class="a" style="left:599.55px;top:319.80px" width="4" height="4.4" viewBox="0 0 4 4.4"><path d="M2 0.4L3.6 1V2.2Q3.6 3.4 2 4.1Q0.4 3.4 0.4 2.2V1z" fill="#fff" stroke="#6a6a6a" stroke-width="0.4"/><circle cx="2" cy="2.2" r="0.75" fill="none" stroke="#7a7a7a" stroke-width="0.35"/></svg>
<div class="a t" style="left:607.10px;top:319.96px;font-size:4.534883720930233px;line-height:5.44px;color:#2a2a2a;width:32.50000000000006px;overflow:hidden;transform:scaleX(0.8);transform-origin:0 50%;">Partial discard</div>
<div class="a t" style="left:635.30px;top:319.96px;font-size:4.534883720930233px;line-height:5.44px;color:#2a2a2a;width:29.125px;overflow:hidden;transform:scaleX(0.8);transform-origin:0 50%;">Migration</div>
<div class="a" style="left:462.50px;top:332.80px;width:238.10px;height:0.60px;background:#ececec;"></div>
<svg class="a" style="left:474.00px;top:327.50px" width="2.6" height="4.2" viewBox="0 0 2.6 4.2"><circle cx="1.3" cy="1" r="0.85" fill="#3a98e8"/><path d="M0.1 4.1V2.8Q0.1 1.9 1.3 1.9Q2.5 1.9 2.5 2.8V4.1z" fill="#3a98e8"/></svg>
<svg class="a" style="left:481.00px;top:328.10px" width="3" height="3" viewBox="0 0 3 3"><circle cx="1.5" cy="1.5" r="1.15" fill="#c4c4c4" stroke="#9a9a9a" stroke-width="0.4"/></svg>
<div class="a t" style="left:487.60px;top:327.56px;font-size:4.534883720930233px;line-height:5.44px;color:#2a2a2a;width:23.5px;overflow:hidden;transform:scaleX(0.8);transform-origin:0 50%;">I0018</div>
<div class="a t" style="left:508.60px;top:327.56px;font-size:4.534883720930233px;line-height:5.44px;color:#2a2a2a;width:74.37500000000004px;overflow:hidden;transform:scaleX(0.8);transform-origin:0 50%;">StatementType ({0}) does not exist</div>
<svg class="a" style="left:570.20px;top:327.60px" width="4" height="4" viewBox="0 0 4 4"><circle cx="2" cy="2" r="1.9" fill="#c62f2b"/><path d="M1.3 1.3L2.7 2.7M2.7 1.3L1.3 2.7" stroke="#f0b0b0" stroke-width="0.35"/></svg>
<div class="a t" style="left:577.30px;top:327.56px;font-size:4.534883720930233px;line-height:5.44px;color:#2a2a2a;width:24.62499999999997px;overflow:hidden;transform:scaleX(0.8);transform-origin:0 50%;">Critical</div>
<svg class="a" style="left:599.55px;top:327.40px" width="4" height="4.4" viewBox="0 0 4 4.4"><path d="M2 0.4L3.6 1V2.2Q3.6 3.4 2 4.1Q0.4 3.4 0.4 2.2V1z" fill="#fff" stroke="#6a6a6a" stroke-width="0.4"/><circle cx="2" cy="2.2" r="0.75" fill="none" stroke="#7a7a7a" stroke-width="0.35"/></svg>
<div class="a t" style="left:607.10px;top:327.56px;font-size:4.534883720930233px;line-height:5.44px;color:#2a2a2a;width:32.50000000000006px;overflow:hidden;transform:scaleX(0.8);transform-origin:0 50%;">Partial discard</div>
<div class="a t" style="left:635.30px;top:327.56px;font-size:4.534883720930233px;line-height:5.44px;color:#2a2a2a;width:29.125px;overflow:hidden;transform:scaleX(0.8);transform-origin:0 50%;">Migration</div>
<div class="a" style="left:462.50px;top:340.40px;width:238.10px;height:0.60px;background:#ececec;"></div>
<svg class="a" style="left:474.00px;top:335.10px" width="2.6" height="4.2" viewBox="0 0 2.6 4.2"><circle cx="1.3" cy="1" r="0.85" fill="#3a98e8"/><path d="M0.1 4.1V2.8Q0.1 1.9 1.3 1.9Q2.5 1.9 2.5 2.8V4.1z" fill="#3a98e8"/></svg>
<svg class="a" style="left:481.00px;top:335.70px" width="3" height="3" viewBox="0 0 3 3"><circle cx="1.5" cy="1.5" r="1.15" fill="#c4c4c4" stroke="#9a9a9a" stroke-width="0.4"/></svg>
<div class="a t" style="left:487.60px;top:335.16px;font-size:4.534883720930233px;line-height:5.44px;color:#2a2a2a;width:23.5px;overflow:hidden;transform:scaleX(0.8);transform-origin:0 50%;">I0019</div>
<div class="a t" style="left:508.60px;top:335.16px;font-size:4.534883720930233px;line-height:5.44px;color:#2a2a2a;width:74.37500000000004px;overflow:hidden;transform:scaleX(0.8);transform-origin:0 50%;">InterestType ({0}) does not exist</div>
<svg class="a" style="left:570.20px;top:335.20px" width="4" height="4" viewBox="0 0 4 4"><circle cx="2" cy="2" r="1.9" fill="#c62f2b"/><path d="M1.3 1.3L2.7 2.7M2.7 1.3L1.3 2.7" stroke="#f0b0b0" stroke-width="0.35"/></svg>
<div class="a t" style="left:577.30px;top:335.16px;font-size:4.534883720930233px;line-height:5.44px;color:#2a2a2a;width:24.62499999999997px;overflow:hidden;transform:scaleX(0.8);transform-origin:0 50%;">Critical</div>
<svg class="a" style="left:599.55px;top:335.00px" width="4" height="4.4" viewBox="0 0 4 4.4"><path d="M2 0.4L3.6 1V2.2Q3.6 3.4 2 4.1Q0.4 3.4 0.4 2.2V1z" fill="#fff" stroke="#6a6a6a" stroke-width="0.4"/><circle cx="2" cy="2.2" r="0.75" fill="none" stroke="#7a7a7a" stroke-width="0.35"/></svg>
<div class="a t" style="left:607.10px;top:335.16px;font-size:4.534883720930233px;line-height:5.44px;color:#2a2a2a;width:32.50000000000006px;overflow:hidden;transform:scaleX(0.8);transform-origin:0 50%;">Partial discard</div>
<div class="a t" style="left:635.30px;top:335.16px;font-size:4.534883720930233px;line-height:5.44px;color:#2a2a2a;width:29.125px;overflow:hidden;transform:scaleX(0.8);transform-origin:0 50%;">Migration</div>
<div class="a" style="left:462.50px;top:348.00px;width:238.10px;height:0.60px;background:#ececec;"></div>
<svg class="a" style="left:474.00px;top:342.70px" width="2.6" height="4.2" viewBox="0 0 2.6 4.2"><circle cx="1.3" cy="1" r="0.85" fill="#3a98e8"/><path d="M0.1 4.1V2.8Q0.1 1.9 1.3 1.9Q2.5 1.9 2.5 2.8V4.1z" fill="#3a98e8"/></svg>
<svg class="a" style="left:481.00px;top:343.30px" width="3" height="3" viewBox="0 0 3 3"><circle cx="1.5" cy="1.5" r="1.15" fill="#c4c4c4" stroke="#9a9a9a" stroke-width="0.4"/></svg>
<div class="a t" style="left:487.60px;top:342.76px;font-size:4.534883720930233px;line-height:5.44px;color:#2a2a2a;width:23.5px;overflow:hidden;transform:scaleX(0.8);transform-origin:0 50%;">I0020</div>
<div class="a t" style="left:508.60px;top:342.76px;font-size:4.534883720930233px;line-height:5.44px;color:#2a2a2a;width:74.37500000000004px;overflow:hidden;transform:scaleX(0.8);transform-origin:0 50%;">Interest Limits on interest ({0}) is n...</div>
<svg class="a" style="left:570.20px;top:342.80px" width="4" height="4" viewBox="0 0 4 4"><circle cx="2" cy="2" r="1.9" fill="#c62f2b"/><path d="M1.3 1.3L2.7 2.7M2.7 1.3L1.3 2.7" stroke="#f0b0b0" stroke-width="0.35"/></svg>
<div class="a t" style="left:577.30px;top:342.76px;font-size:4.534883720930233px;line-height:5.44px;color:#2a2a2a;width:24.62499999999997px;overflow:hidden;transform:scaleX(0.8);transform-origin:0 50%;">Critical</div>
<svg class="a" style="left:599.55px;top:342.60px" width="4" height="4.4" viewBox="0 0 4 4.4"><path d="M2 0.4L3.6 1V2.2Q3.6 3.4 2 4.1Q0.4 3.4 0.4 2.2V1z" fill="#fff" stroke="#6a6a6a" stroke-width="0.4"/><circle cx="2" cy="2.2" r="0.75" fill="none" stroke="#7a7a7a" stroke-width="0.35"/></svg>
<div class="a t" style="left:607.10px;top:342.76px;font-size:4.534883720930233px;line-height:5.44px;color:#2a2a2a;width:32.50000000000006px;overflow:hidden;transform:scaleX(0.8);transform-origin:0 50%;">Partial discard</div>
<div class="a t" style="left:635.30px;top:342.76px;font-size:4.534883720930233px;line-height:5.44px;color:#2a2a2a;width:29.125px;overflow:hidden;transform:scaleX(0.8);transform-origin:0 50%;">Migration</div>
<div class="a" style="left:462.50px;top:189.00px;width:0.60px;height:158.00px;background:#b0b0b0;"></div>
<div class="a" style="left:462.50px;top:188.60px;width:245.00px;height:0.70px;background:#a8a8a8;"></div>
<svg class="a" style="left:464.8px;top:190.6px" width="4.4" height="4.6" viewBox="0 0 4.4 4.6"><rect x="0.4" y="1" width="3.6" height="3.2" fill="none" stroke="#333" stroke-width="0.6"/><path d="M1.2 1V0.3H3.2V1" stroke="#1e88e5" stroke-width="0.6" fill="none"/></svg>
<div class="a" style="left:700.60px;top:189.00px;width:6.90px;height:158.00px;background:#f0f0f0;"></div>
<div class="a" style="left:701.40px;top:196.00px;width:5.30px;height:108.50px;background:#cdcdcd;"></div>
<svg class="a" style="left:702.6px;top:191.0px" width="3" height="2.4" viewBox="0 0 3 2.4"><path d="M0.3 2L1.5 0.6 2.7 2" fill="none" stroke="#555" stroke-width="0.5"/></svg>
<svg class="a" style="left:702.6px;top:343.6px" width="3" height="2.4" viewBox="0 0 3 2.4"><path d="M0.3 0.4L1.5 1.8 2.7 0.4" fill="none" stroke="#555" stroke-width="0.5"/></svg>
<div class="a" style="left:707.50px;top:189.00px;width:0.70px;height:158.00px;background:#a0a0a0;"></div>
<div class="a" style="left:708.20px;top:189.00px;width:30.60px;height:158.00px;background:#f0f0f0;"></div>
<div class="a" style="left:710.60px;top:190.50px;width:25.10px;height:7.20px;background:#e1e1e1;border:0.6px solid #adadad;"></div>
<div class="a t" style="left:683.10px;width:80px;text-align:center;top:192.16px;font-size:4.302325581395349px;line-height:5.16px;color:#222;transform:scaleX(0.8);transform-origin:50% 50%;">New</div>
<div class="a" style="left:710.60px;top:200.80px;width:25.10px;height:6.80px;background:#e1e1e1;border:0.6px solid #adadad;"></div>
<div class="a t" style="left:683.10px;width:80px;text-align:center;top:202.26px;font-size:4.302325581395349px;line-height:5.16px;color:#222;transform:scaleX(0.8);transform-origin:50% 50%;">Open</div>
<div class="a" style="left:710.60px;top:210.40px;width:25.10px;height:7.30px;background:#e1e1e1;border:0.6px solid #adadad;"></div>
<div class="a t" style="left:683.10px;width:80px;text-align:center;top:212.11px;font-size:4.302325581395349px;line-height:5.16px;color:#222;transform:scaleX(0.8);transform-origin:50% 50%;">Delete...</div>
<div class="a" style="left:710.60px;top:220.80px;width:25.10px;height:7.20px;background:#e1e1e1;border:0.6px solid #adadad;"></div>
<div class="a t" style="left:683.10px;width:80px;text-align:center;top:222.46px;font-size:4.302325581395349px;line-height:5.16px;color:#222;transform:scaleX(0.8);transform-origin:50% 50%;">References</div>
</body></html>
